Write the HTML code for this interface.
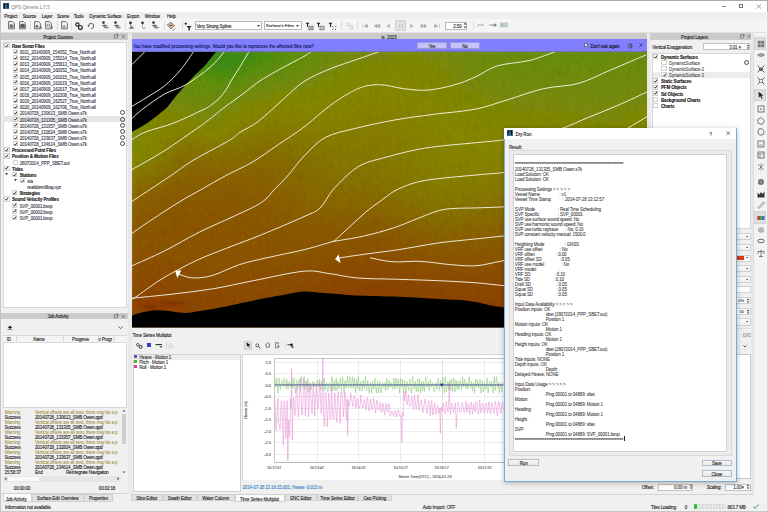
<!DOCTYPE html><html><head><meta charset="utf-8"><style>
html,body{margin:0;padding:0;width:768px;height:512px;overflow:hidden;background:#f0f0f0}
body{position:relative;font-family:"Liberation Sans",sans-serif}
body>div,body>svg{position:absolute}
.t{white-space:pre;line-height:1;-webkit-text-stroke:0.1px currentColor}
</style></head><body><div style="left:0px;top:0px;width:768px;height:512px;background:#f0f0f0;"></div>
<div style="left:0px;top:0px;width:768px;height:1px;background:#a8acb6;"></div>
<div style="left:0px;top:0px;width:1px;height:12px;background:#a4a8b2;"></div>
<div style="left:0px;top:12px;width:1px;height:500px;background:#c4c4c8;"></div>
<div style="left:767px;top:0px;width:1px;height:12px;background:#a8acb6;"></div>
<div style="left:767px;top:12px;width:1px;height:500px;background:#d6d6d6;"></div>
<div style="left:1px;top:1px;width:766px;height:11px;background:#ffffff;"></div>
<div style="left:3.3px;top:2.6px;width:6.2px;height:6.2px;background:#336e96"></div>
<svg style="left:3.3px;top:2.6px" width="6.2" height="6.2" viewBox="0 0 6.2 6.2"><path d="M1.3,1 H2.7 M1.3,1 V5.3 M3.5,1 H5 V5.3" stroke="#05050c" stroke-width="1.1" fill="none"/></svg>
<div class="t" style="top:5px;font-size:5.0px;color:#9a9a9a;letter-spacing:-0.14px;left:11px;">QPS Qimera 1.7.5</div>
<div style="left:722px;top:5.7px;width:4px;height:0.5px;background:#888;"></div>
<div style="left:739.3px;top:4.2px;width:4.0px;height:3.8px;background:transparent;border:0.5px solid #777;box-sizing:border-box;"></div>
<svg style="left:756px;top:4px" width="6" height="5" viewBox="0 0 6 5"><path d="M0.5,0.3 L5.2,4.7 M5.2,0.3 L0.5,4.7" stroke="#666" stroke-width="0.6"/></svg>
<div style="left:1px;top:12px;width:766px;height:6.5px;background:#efefef;"></div>
<div class="t" style="top:15px;font-size:4.5px;color:#1a1a1a;letter-spacing:-0.14px;left:4.3px;">Project</div>
<div class="t" style="top:15px;font-size:4.5px;color:#1a1a1a;letter-spacing:-0.14px;left:22.7px;">Source</div>
<div class="t" style="top:15px;font-size:4.5px;color:#1a1a1a;letter-spacing:-0.14px;left:41.7px;">Layer</div>
<div class="t" style="top:15px;font-size:4.5px;color:#1a1a1a;letter-spacing:-0.14px;left:57px;">Scene</div>
<div class="t" style="top:15px;font-size:4.5px;color:#1a1a1a;letter-spacing:-0.14px;left:73.7px;">Tools</div>
<div class="t" style="top:15px;font-size:4.5px;color:#1a1a1a;letter-spacing:-0.14px;left:89.3px;">Dynamic Surface</div>
<div class="t" style="top:15px;font-size:4.5px;color:#1a1a1a;letter-spacing:-0.14px;left:127px;">Export</div>
<div class="t" style="top:15px;font-size:4.5px;color:#1a1a1a;letter-spacing:-0.14px;left:144.7px;">Window</div>
<div class="t" style="top:15px;font-size:4.5px;color:#1a1a1a;letter-spacing:-0.14px;left:167px;">Help</div>
<div style="left:1px;top:18.5px;width:766px;height:14.0px;background:#f5f5f5;"></div>
<div style="left:1px;top:32px;width:766px;height:1px;background:#e0e0e0;"></div>
<svg style="left:8.2px;top:21.3px" width="8.5" height="9" viewBox="0 0 8.5 9"><path d="M0.6,0.6 H4.6 L6.4,2.4 V7.8 H0.6 Z" fill="#f4f4f4" stroke="#555" stroke-width="0.85"/><path d="M1.5,4 L3,2.8 L4.5,4 L5.5,3.5 V6.7 H1.5Z" fill="#707070"/></svg>
<svg style="left:19.1px;top:21.3px" width="8.5" height="9" viewBox="0 0 8.5 9"><path d="M0.6,0.6 H4.6 L6.4,2.4 V7.8 H0.6 Z" fill="#f4f4f4" stroke="#555" stroke-width="0.85"/><path d="M1.2,3.4 L3.5,2.4 L5.8,3.4 V6.7 H1.2Z" fill="#5a5a5a"/></svg>
<svg style="left:33.6px;top:21.3px" width="8.5" height="9" viewBox="0 0 8.5 9"><path d="M0.6,0.6 H4.6 L6.4,2.4 V7.8 H0.6 Z" fill="#f4f4f4" stroke="#555" stroke-width="0.85"/><path d="M1.6,5 L3,3.6 L4.2,5 V6.6 H1.6Z" fill="#606060"/><circle cx="6.6" cy="6.6" r="1.3" fill="#777"/></svg>
<svg style="left:45.3px;top:21.3px" width="8.5" height="9" viewBox="0 0 8.5 9"><path d="M0.6,0.6 H4.6 L6.4,2.4 V7.8 H0.6 Z" fill="#f4f4f4" stroke="#555" stroke-width="0.85"/><circle cx="3.4" cy="4.4" r="1.4" fill="none" stroke="#555" stroke-width="0.7"/><circle cx="6.6" cy="6.6" r="1.3" fill="#777"/></svg>
<svg style="left:60.5px;top:21.3px" width="8.5" height="9" viewBox="0 0 8.5 9"><path d="M0.6,0.6 H4.6 L6.4,2.4 V7.8 H0.6 Z" fill="#f4f4f4" stroke="#555" stroke-width="0.85"/><path d="M1.6,5.5 L3,4.2 L4.6,5.2 V6.6 H1.6Z" fill="#808080"/></svg>
<div style="left:30.2px;top:21px;width:0.6px;height:9px;background:#dcdcdc;"></div>
<div style="left:56.8px;top:21px;width:0.6px;height:9px;background:#dcdcdc;"></div>
<div style="left:70.5px;top:21px;width:0.6px;height:9px;background:#dcdcdc;"></div>
<svg style="left:74.5px;top:21.5px" width="8" height="8" viewBox="0 0 8 8"><circle cx="2.4" cy="2.6" r="1.7" fill="none" stroke="#222" stroke-width="1.1"/><circle cx="5.4" cy="5.4" r="1.9" fill="none" stroke="#222" stroke-width="1.2"/></svg>
<svg style="left:86.5px;top:21.8px" width="8" height="8" viewBox="0 0 8 8"><path d="M1.5,4 A2.6,2.6 0 1 1 4,6.6" fill="none" stroke="#555" stroke-width="0.9"/><path d="M0.3,3.6 L2.7,3.6 L1.5,5.2Z" fill="#555"/></svg>
<svg style="left:100.5px;top:21px" width="9" height="9" viewBox="0 0 9 9"><circle cx="2.5" cy="1.6" r="1.3" fill="#333"/><path d="M0.6,4.6 L3.6,3.4 L6.6,4.8 L3.6,6 Z" fill="#6a6a6a"/><path d="M2.2,6.4 L5.2,5.2 L8.4,6.6 L5.4,7.8 Z" fill="#8a8a8a"/></svg>
<svg style="left:112.5px;top:21px" width="9" height="9" viewBox="0 0 9 9"><circle cx="2.5" cy="1.6" r="1.3" fill="#333"/><path d="M0.6,4.6 L3.6,3.4 L6.6,4.8 L3.6,6 Z" fill="#6a6a6a"/><path d="M2.2,6.4 L5.2,5.2 L8.4,6.6 L5.4,7.8 Z" fill="#8a8a8a"/></svg>
<div style="left:125px;top:21px;width:0.6px;height:9px;background:#dcdcdc;"></div>
<svg style="left:127.5px;top:21px" width="8" height="9" viewBox="0 0 8 9"><circle cx="2.5" cy="1.8" r="1.4" fill="#333"/><path d="M2.5,3 V5"  stroke="#555" stroke-width="0.6"/><path d="M3.5,4.5 L6.5,7.8 H0.8Z" fill="#777"/></svg>
<svg style="left:139.5px;top:21px" width="8" height="9" viewBox="0 0 8 9"><circle cx="2.5" cy="1.8" r="1.4" fill="#333"/><path d="M2.5,3 V5" stroke="#555" stroke-width="0.6"/><path d="M1.6,5.6 L3.8,7.8 L5.6,6" stroke="#777" stroke-width="0.8" fill="none"/></svg>
<svg style="left:150.5px;top:21px" width="9" height="9" viewBox="0 0 9 9"><circle cx="2.5" cy="1.6" r="1.3" fill="#333"/><path d="M0.6,4.6 L3.6,3.4 L6.6,4.8 L3.6,6 Z" fill="#6a6a6a"/><path d="M2.2,6.4 L5.2,5.2 L8.4,6.6 L5.4,7.8 Z" fill="#8a8a8a"/></svg>
<div style="left:163.5px;top:21px;width:0.6px;height:9px;background:#dcdcdc;"></div>
<svg style="left:165.8px;top:21px" width="10" height="10" viewBox="0 0 10 10"><path d="M1.2,4 L5,1.2 L8.6,4.8 L5,7.8 Z" fill="#d8b898" stroke="#6a5a4a" stroke-width="0.7"/><path d="M3.4,4.4 H6.4" stroke="#333" stroke-width="0.8"/><path d="M6.6,8.4 L7.6,9.3 L9.3,7.5" stroke="#555" stroke-width="0.6" fill="none"/></svg>
<div style="left:181.5px;top:21px;width:0.6px;height:9px;background:#dcdcdc;"></div>
<svg style="left:184px;top:21.5px" width="8" height="9" viewBox="0 0 8 9"><circle cx="1.8" cy="1.6" r="1.2" fill="#333"/><path d="M2.5,4 H7.6 L5.8,6 V8.6 H4.4 V6 Z" fill="#222"/></svg>
<div style="left:194.5px;top:21.3px;width:67.5px;height:8.5px;background:#fff;border:0.6px solid #b8b8b8;box-sizing:border-box;"></div>
<div class="t" style="top:25px;font-size:4.5px;color:#222;letter-spacing:-0.14px;left:196.5px;">Very Strong Spline</div>
<svg style="left:256.5px;top:24.55px" width="3" height="2" viewBox="0 0 3 2"><path d="M0,0 H3 L1.5,2Z" fill="#444"/></svg>
<div style="left:263.8px;top:21.3px;width:37.9px;height:8.5px;background:#fff;border:0.6px solid #b8b8b8;box-sizing:border-box;"></div>
<div class="t" style="top:24px;font-size:4.3px;color:#222;left:265.8px;">Surface&#x27;s Files</div>
<svg style="left:296.2px;top:24.55px" width="3" height="2" viewBox="0 0 3 2"><path d="M0,0 H3 L1.5,2Z" fill="#444"/></svg>
<svg style="left:304.5px;top:21.5px" width="9" height="9" viewBox="0 0 9 9"><path d="M0.5,0.8 H4.5 L3,2.6 V5 H2 V2.6Z" fill="#222"/><rect x="4" y="4.2" width="4" height="3.6" fill="none" stroke="#555" stroke-width="0.7"/><path d="M4,4.2 L8,7.8 M8,4.2 L4,7.8" stroke="#555" stroke-width="0.5"/></svg>
<svg style="left:316px;top:21.5px" width="9" height="9" viewBox="0 0 9 9"><path d="M0.5,0.8 H4.5 L3,2.6 V5 H2 V2.6Z" fill="#222"/><rect x="4" y="4.2" width="4" height="3.6" fill="none" stroke="#555" stroke-width="0.7"/><rect x="5.5" y="5.6" width="1" height="1" fill="#444"/></svg>
<svg style="left:328px;top:21.5px" width="9" height="9" viewBox="0 0 9 9"><path d="M0.5,0.8 H4.5 L3,2.6 V5 H2 V2.6Z" fill="#222"/><path d="M4.2,4.3 L5.2,5.3 M8,4.3 L7,5.3 M4.2,8 L5.2,7 M8,8 L7,7" stroke="#222" stroke-width="0.8"/></svg>
<div style="left:341px;top:21px;width:0.6px;height:9px;background:#dcdcdc;"></div>
<svg style="left:345.5px;top:21.5px" width="9" height="9" viewBox="0 0 9 9"><circle cx="2.5" cy="2.5" r="1.6" fill="none" stroke="#bbb" stroke-width="0.7"/><circle cx="5.5" cy="5.5" r="1.8" fill="none" stroke="#bbb" stroke-width="0.7"/></svg>
<div style="left:357px;top:21px;width:0.6px;height:9px;background:#dcdcdc;"></div>
<svg style="left:360.6px;top:21.5px" width="8" height="8" viewBox="0 0 8 8"><path d="M1.5,2.2 V5.8 M6.5,2.2 L3,4 L6.5,5.8Z" fill="#aaa" stroke="#aaa" stroke-width="0.5"/></svg>
<svg style="left:372.7px;top:21.5px" width="8" height="8" viewBox="0 0 8 8"><path d="M4,2.2 L1,4 L4,5.8Z M7,2.2 L4,4 L7,5.8Z" fill="#aaa" stroke="#aaa" stroke-width="0.5"/></svg>
<svg style="left:384.2px;top:21.5px" width="8" height="8" viewBox="0 0 8 8"><path d="M5.5,2.5 L2.8,4 L5.5,5.5Z" fill="#aaa" stroke="#aaa" stroke-width="0.5"/></svg>
<div style="left:395px;top:20.2px;width:11.3px;height:10.8px;background:#e0e0e0;border:0.5px solid #d0d0d0;box-sizing:border-box;"></div>
<svg style="left:396.6px;top:21.5px" width="8" height="8" viewBox="0 0 8 8"><path d="M2.6,2.2 V5.8 M5.2,2.2 V5.8" fill="#aaa" stroke="#aaa" stroke-width="0.5"/></svg>
<svg style="left:408.3px;top:21.5px" width="8" height="8" viewBox="0 0 8 8"><path d="M2.5,2.5 L5.2,4 L2.5,5.5Z" fill="#aaa" stroke="#aaa" stroke-width="0.5"/></svg>
<svg style="left:420px;top:21.5px" width="8" height="8" viewBox="0 0 8 8"><path d="M1,2.2 L4,4 L1,5.8Z M4,2.2 L7,4 L4,5.8Z" fill="#aaa" stroke="#aaa" stroke-width="0.5"/></svg>
<svg style="left:432.5px;top:21.5px" width="8" height="8" viewBox="0 0 8 8"><path d="M1.5,2.2 L5,4 L1.5,5.8Z M6.5,2.2 V5.8" fill="#aaa" stroke="#aaa" stroke-width="0.5"/></svg>
<div style="left:445.4px;top:21.5px;width:21.9px;height:8.0px;background:#fff;border:0.6px solid #b8b8b8;box-sizing:border-box;"></div>
<div class="t" style="top:25px;font-size:4.5px;color:#222;letter-spacing:-0.14px;right:306.5px;">2.50</div>
<svg style="left:462.8px;top:22px" width="4" height="7" viewBox="0 0 4 7"><path d="M0.5,2.5 L2,0.8 L3.5,2.5Z M0.5,4.5 L2,6.2 L3.5,4.5Z" fill="#444"/></svg>
<div style="left:473px;top:21px;width:0.6px;height:9px;background:#dcdcdc;"></div>
<svg style="left:476.5px;top:22px" width="8" height="6" viewBox="0 0 8 6"><path d="M0.5,4.5 L2,2.2 L3.5,4 L5,1.8 L6.5,4 L7.5,3" fill="none" stroke="#999" stroke-width="0.7"/></svg>
<svg style="left:488.5px;top:22px" width="8" height="6" viewBox="0 0 8 6"><path d="M0.5,3 H5" stroke="#777" stroke-width="0.8"/><circle cx="6" cy="3" r="1.5" fill="#888"/></svg>
<svg style="left:500px;top:22px" width="8" height="6" viewBox="0 0 8 6"><rect x="0.5" y="1" width="7" height="4" fill="#c8d8a0" stroke="#aaa" stroke-width="0.5"/><rect x="1" y="1.5" width="3" height="3" fill="#a8c8e8"/></svg>
<div style="left:1px;top:33px;width:127px;height:6.6px;background:#cbcbcb;"></div>
<div class="t" style="top:36px;font-size:4.5px;color:#222;letter-spacing:-0.14px;left:58px;transform:translateX(-50%);">Project Sources</div>
<svg style="left:114px;top:34px" width="12" height="5" viewBox="0 0 12 5"><rect x="0.6" y="1" width="3" height="3" fill="none" stroke="#555" stroke-width="0.5"/><path d="M2,1 V0.3 H4.2 V2.5 H3.6" fill="none" stroke="#555" stroke-width="0.5"/><path d="M7.5,0.6 L11,4.4 M11,0.6 L7.5,4.4" stroke="#555" stroke-width="0.6"/></svg>
<div style="left:128px;top:33px;width:4px;height:461px;background:#e9e9e9;"></div>
<div style="left:132px;top:33px;width:515px;height:6.2px;background:#cbcbcb;"></div>
<div class="t" style="top:36px;font-size:4.5px;color:#222;letter-spacing:-0.14px;left:389px;transform:translateX(-50%);">ts_2015</div>
<div style="left:647px;top:33px;width:3px;height:294.5px;background:#e9e9e9;"></div>
<div style="left:650px;top:33px;width:103px;height:6.6px;background:#cbcbcb;"></div>
<div class="t" style="top:36px;font-size:4.5px;color:#222;letter-spacing:-0.14px;left:694.5px;transform:translateX(-50%);">Project Layers</div>
<svg style="left:739.5px;top:34px" width="12" height="5" viewBox="0 0 12 5"><rect x="0.6" y="1" width="3" height="3" fill="none" stroke="#555" stroke-width="0.5"/><path d="M2,1 V0.3 H4.2 V2.5 H3.6" fill="none" stroke="#555" stroke-width="0.5"/><path d="M7.5,0.6 L11,4.4 M11,0.6 L7.5,4.4" stroke="#555" stroke-width="0.6"/></svg>
<div style="left:2.5px;top:41.5px;width:124.5px;height:266.5px;background:#fff;border:0.6px solid #d6d6d6;box-sizing:border-box;"></div>
<div style="left:3px;top:116.08999999999999px;width:123.5px;height:6.1px;background:#e6e6e6;"></div>
<div style="left:4.2px;top:42.8px;width:5.4px;height:5.2px;background:#fff;border:0.5px solid #d2d2d2;box-sizing:border-box;"></div>
<svg style="left:5.4px;top:43.5px" width="3.4" height="3.8" viewBox="0 0 3.4 3.8"><path d="M0.5,2.0 L1.4,3.2 L3.0,0.5" fill="none" stroke="#1a1a1a" stroke-width="0.9"/></svg>
<div class="t" style="top:45px;font-size:4.5px;color:#111;font-weight:bold;letter-spacing:-0.14px;left:12px;">Raw Sonar Files</div>
<div style="left:12.5px;top:48.945px;width:5.4px;height:5.2px;background:#fff;border:0.5px solid #d2d2d2;box-sizing:border-box;"></div>
<svg style="left:13.7px;top:49.645px" width="3.4" height="3.8" viewBox="0 0 3.4 3.8"><path d="M0.5,2.0 L1.4,3.2 L3.0,0.5" fill="none" stroke="#1a1a1a" stroke-width="0.9"/></svg>
<div class="t" style="top:51px;font-size:4.5px;color:#3a3a4a;letter-spacing:-0.14px;left:19.7px;">0011_20140909_154052_True_North.all</div>
<div style="left:12.5px;top:55.089999999999996px;width:5.4px;height:5.2px;background:#fff;border:0.5px solid #d2d2d2;box-sizing:border-box;"></div>
<svg style="left:13.7px;top:55.79px" width="3.4" height="3.8" viewBox="0 0 3.4 3.8"><path d="M0.5,2.0 L1.4,3.2 L3.0,0.5" fill="none" stroke="#1a1a1a" stroke-width="0.9"/></svg>
<div class="t" style="top:57px;font-size:4.5px;color:#3a3a4a;letter-spacing:-0.14px;left:19.7px;">0012_20140909_155214_True_North.all</div>
<div style="left:12.5px;top:61.23499999999999px;width:5.4px;height:5.2px;background:#fff;border:0.5px solid #d2d2d2;box-sizing:border-box;"></div>
<svg style="left:13.7px;top:61.934999999999995px" width="3.4" height="3.8" viewBox="0 0 3.4 3.8"><path d="M0.5,2.0 L1.4,3.2 L3.0,0.5" fill="none" stroke="#1a1a1a" stroke-width="0.9"/></svg>
<div class="t" style="top:63px;font-size:4.5px;color:#3a3a4a;letter-spacing:-0.14px;left:19.7px;">0013_20140909_155813_True_North.all</div>
<div style="left:12.5px;top:67.38px;width:5.4px;height:5.2px;background:#fff;border:0.5px solid #d2d2d2;box-sizing:border-box;"></div>
<svg style="left:13.7px;top:68.07999999999998px" width="3.4" height="3.8" viewBox="0 0 3.4 3.8"><path d="M0.5,2.0 L1.4,3.2 L3.0,0.5" fill="none" stroke="#1a1a1a" stroke-width="0.9"/></svg>
<div class="t" style="top:69px;font-size:4.5px;color:#3a3a4a;letter-spacing:-0.14px;left:19.7px;">0014_20140909_160352_True_North.all</div>
<div style="left:12.5px;top:73.525px;width:5.4px;height:5.2px;background:#fff;border:0.5px solid #d2d2d2;box-sizing:border-box;"></div>
<svg style="left:13.7px;top:74.225px" width="3.4" height="3.8" viewBox="0 0 3.4 3.8"><path d="M0.5,2.0 L1.4,3.2 L3.0,0.5" fill="none" stroke="#1a1a1a" stroke-width="0.9"/></svg>
<div class="t" style="top:76px;font-size:4.5px;color:#3a3a4a;letter-spacing:-0.14px;left:19.7px;">0015_20140909_161015_True_North.all</div>
<div style="left:12.5px;top:79.67px;width:5.4px;height:5.2px;background:#fff;border:0.5px solid #d2d2d2;box-sizing:border-box;"></div>
<svg style="left:13.7px;top:80.36999999999999px" width="3.4" height="3.8" viewBox="0 0 3.4 3.8"><path d="M0.5,2.0 L1.4,3.2 L3.0,0.5" fill="none" stroke="#1a1a1a" stroke-width="0.9"/></svg>
<div class="t" style="top:82px;font-size:4.5px;color:#3a3a4a;letter-spacing:-0.14px;left:19.7px;">0016_20140909_161619_True_North.all</div>
<div style="left:12.5px;top:85.815px;width:5.4px;height:5.2px;background:#fff;border:0.5px solid #d2d2d2;box-sizing:border-box;"></div>
<svg style="left:13.7px;top:86.51499999999999px" width="3.4" height="3.8" viewBox="0 0 3.4 3.8"><path d="M0.5,2.0 L1.4,3.2 L3.0,0.5" fill="none" stroke="#1a1a1a" stroke-width="0.9"/></svg>
<div class="t" style="top:88px;font-size:4.5px;color:#3a3a4a;letter-spacing:-0.14px;left:19.7px;">0017_20140909_162017_True_North.all</div>
<div style="left:12.5px;top:91.96000000000001px;width:5.4px;height:5.2px;background:#fff;border:0.5px solid #d2d2d2;box-sizing:border-box;"></div>
<svg style="left:13.7px;top:92.66px" width="3.4" height="3.8" viewBox="0 0 3.4 3.8"><path d="M0.5,2.0 L1.4,3.2 L3.0,0.5" fill="none" stroke="#1a1a1a" stroke-width="0.9"/></svg>
<div class="t" style="top:94px;font-size:4.5px;color:#3a3a4a;letter-spacing:-0.14px;left:19.7px;">0018_20140909_162308_True_North.all</div>
<div style="left:12.5px;top:98.10499999999999px;width:5.4px;height:5.2px;background:#fff;border:0.5px solid #d2d2d2;box-sizing:border-box;"></div>
<svg style="left:13.7px;top:98.80499999999998px" width="3.4" height="3.8" viewBox="0 0 3.4 3.8"><path d="M0.5,2.0 L1.4,3.2 L3.0,0.5" fill="none" stroke="#1a1a1a" stroke-width="0.9"/></svg>
<div class="t" style="top:100px;font-size:4.5px;color:#3a3a4a;letter-spacing:-0.14px;left:19.7px;">0019_20140909_162527_True_North.all</div>
<div style="left:12.5px;top:104.25px;width:5.4px;height:5.2px;background:#fff;border:0.5px solid #d2d2d2;box-sizing:border-box;"></div>
<svg style="left:13.7px;top:104.94999999999999px" width="3.4" height="3.8" viewBox="0 0 3.4 3.8"><path d="M0.5,2.0 L1.4,3.2 L3.0,0.5" fill="none" stroke="#1a1a1a" stroke-width="0.9"/></svg>
<div class="t" style="top:106px;font-size:4.5px;color:#3a3a4a;letter-spacing:-0.14px;left:19.7px;">0020_20140909_162706_True_North.all</div>
<div style="left:12.5px;top:110.39500000000001px;width:5.4px;height:5.2px;background:#fff;border:0.5px solid #d2d2d2;box-sizing:border-box;"></div>
<svg style="left:13.7px;top:111.095px" width="3.4" height="3.8" viewBox="0 0 3.4 3.8"><path d="M0.5,2.0 L1.4,3.2 L3.0,0.5" fill="none" stroke="#1a1a1a" stroke-width="0.9"/></svg>
<div class="t" style="top:112px;font-size:4.5px;color:#3a3a4a;letter-spacing:-0.14px;left:19.7px;">20140728_130613_SMB Owen.s7k</div>
<svg style="left:120px;top:110.495px" width="5" height="5" viewBox="0 0 5 5"><circle cx="2.55" cy="2.5" r="2.0" fill="none" stroke="#262626" stroke-width="0.8"/></svg>
<div style="left:12.5px;top:116.53999999999999px;width:5.4px;height:5.2px;background:#fff;border:0.5px solid #d2d2d2;box-sizing:border-box;"></div>
<svg style="left:13.7px;top:117.23999999999998px" width="3.4" height="3.8" viewBox="0 0 3.4 3.8"><path d="M0.5,2.0 L1.4,3.2 L3.0,0.5" fill="none" stroke="#1a1a1a" stroke-width="0.9"/></svg>
<div class="t" style="top:119px;font-size:4.5px;color:#3a3a4a;letter-spacing:-0.14px;left:19.7px;">20140728_131305_SMB Owen.s7k</div>
<svg style="left:120px;top:116.63999999999999px" width="5" height="5" viewBox="0 0 5 5"><circle cx="2.55" cy="2.5" r="2.0" fill="none" stroke="#262626" stroke-width="0.8"/></svg>
<div style="left:12.5px;top:122.685px;width:5.4px;height:5.2px;background:#fff;border:0.5px solid #d2d2d2;box-sizing:border-box;"></div>
<svg style="left:13.7px;top:123.38499999999999px" width="3.4" height="3.8" viewBox="0 0 3.4 3.8"><path d="M0.5,2.0 L1.4,3.2 L3.0,0.5" fill="none" stroke="#1a1a1a" stroke-width="0.9"/></svg>
<div class="t" style="top:125px;font-size:4.5px;color:#3a3a4a;letter-spacing:-0.14px;left:19.7px;">20140728_131957_SMB Owen.s7k</div>
<svg style="left:120px;top:122.785px" width="5" height="5" viewBox="0 0 5 5"><circle cx="2.55" cy="2.5" r="2.0" fill="none" stroke="#262626" stroke-width="0.8"/></svg>
<div style="left:12.5px;top:128.83px;width:5.4px;height:5.2px;background:#fff;border:0.5px solid #d2d2d2;box-sizing:border-box;"></div>
<svg style="left:13.7px;top:129.53px" width="3.4" height="3.8" viewBox="0 0 3.4 3.8"><path d="M0.5,2.0 L1.4,3.2 L3.0,0.5" fill="none" stroke="#1a1a1a" stroke-width="0.9"/></svg>
<div class="t" style="top:131px;font-size:4.5px;color:#3a3a4a;letter-spacing:-0.14px;left:19.7px;">20140728_132824_SMB Owen.s7k</div>
<svg style="left:120px;top:128.93px" width="5" height="5" viewBox="0 0 5 5"><circle cx="2.55" cy="2.5" r="2.0" fill="none" stroke="#262626" stroke-width="0.8"/></svg>
<div style="left:12.5px;top:134.975px;width:5.4px;height:5.2px;background:#fff;border:0.5px solid #d2d2d2;box-sizing:border-box;"></div>
<svg style="left:13.7px;top:135.67499999999998px" width="3.4" height="3.8" viewBox="0 0 3.4 3.8"><path d="M0.5,2.0 L1.4,3.2 L3.0,0.5" fill="none" stroke="#1a1a1a" stroke-width="0.9"/></svg>
<div class="t" style="top:137px;font-size:4.5px;color:#3a3a4a;letter-spacing:-0.14px;left:19.7px;">20140728_133637_SMB Owen.s7k</div>
<svg style="left:120px;top:135.075px" width="5" height="5" viewBox="0 0 5 5"><circle cx="2.55" cy="2.5" r="2.0" fill="none" stroke="#262626" stroke-width="0.8"/></svg>
<div style="left:12.5px;top:141.12px;width:5.4px;height:5.2px;background:#fff;border:0.5px solid #d2d2d2;box-sizing:border-box;"></div>
<svg style="left:13.7px;top:141.82px" width="3.4" height="3.8" viewBox="0 0 3.4 3.8"><path d="M0.5,2.0 L1.4,3.2 L3.0,0.5" fill="none" stroke="#1a1a1a" stroke-width="0.9"/></svg>
<div class="t" style="top:143px;font-size:4.5px;color:#3a3a4a;letter-spacing:-0.14px;left:19.7px;">20140728_134614_SMB Owen.s7k</div>
<svg style="left:120px;top:141.22px" width="5" height="5" viewBox="0 0 5 5"><circle cx="2.55" cy="2.5" r="2.0" fill="none" stroke="#262626" stroke-width="0.8"/></svg>
<div style="left:4.2px;top:147.265px;width:5.4px;height:5.2px;background:#fff;border:0.5px solid #d2d2d2;box-sizing:border-box;"></div>
<svg style="left:5.4px;top:147.96499999999997px" width="3.4" height="3.8" viewBox="0 0 3.4 3.8"><path d="M0.5,2.0 L1.4,3.2 L3.0,0.5" fill="none" stroke="#1a1a1a" stroke-width="0.9"/></svg>
<div class="t" style="top:149px;font-size:4.5px;color:#111;font-weight:bold;letter-spacing:-0.14px;left:12px;">Processed Point Files</div>
<div style="left:4.2px;top:153.41px;width:5.4px;height:5.2px;background:#fff;border:0.5px solid #d2d2d2;box-sizing:border-box;"></div>
<svg style="left:5.4px;top:154.10999999999999px" width="3.4" height="3.8" viewBox="0 0 3.4 3.8"><path d="M0.5,2.0 L1.4,3.2 L3.0,0.5" fill="none" stroke="#1a1a1a" stroke-width="0.9"/></svg>
<div class="t" style="top:155px;font-size:4.5px;color:#111;font-weight:bold;letter-spacing:-0.14px;left:12px;">Position &amp; Motion Files</div>
<div style="left:12.5px;top:159.555px;width:5.4px;height:5.2px;background:#fff;border:0.5px solid #d2d2d2;box-sizing:border-box;"></div>
<div class="t" style="top:162px;font-size:4.5px;color:#3a3a4a;letter-spacing:-0.14px;left:19.7px;">28072014_PPP_SBET.out</div>
<div style="left:4.2px;top:165.7px;width:5.4px;height:5.2px;background:#fff;border:0.5px solid #d2d2d2;box-sizing:border-box;"></div>
<svg style="left:5.4px;top:166.39999999999998px" width="3.4" height="3.8" viewBox="0 0 3.4 3.8"><path d="M0.5,2.0 L1.4,3.2 L3.0,0.5" fill="none" stroke="#1a1a1a" stroke-width="0.9"/></svg>
<div class="t" style="top:168px;font-size:4.5px;color:#111;font-weight:bold;letter-spacing:-0.14px;left:12px;">Tides</div>
<svg style="left:5px;top:173.245px" width="3" height="2.4" viewBox="0 0 3 2.4"><path d="M0,0 H3 L1.5,2.2Z" fill="#444"/></svg>
<div style="left:12.0px;top:171.845px;width:5.4px;height:5.2px;background:#fff;border:0.5px solid #d2d2d2;box-sizing:border-box;"></div>
<svg style="left:13.2px;top:172.545px" width="3.4" height="3.8" viewBox="0 0 3.4 3.8"><path d="M0.5,2.0 L1.4,3.2 L3.0,0.5" fill="none" stroke="#1a1a1a" stroke-width="0.9"/></svg>
<div class="t" style="top:174px;font-size:4.5px;color:#111;font-weight:bold;letter-spacing:-0.14px;left:19.7px;">Stations</div>
<svg style="left:13.5px;top:179.39000000000001px" width="3" height="2.4" viewBox="0 0 3 2.4"><path d="M0,0 H3 L1.5,2.2Z" fill="#444"/></svg>
<div style="left:19.5px;top:177.99px;width:5.4px;height:5.2px;background:#fff;border:0.5px solid #d2d2d2;box-sizing:border-box;"></div>
<svg style="left:20.7px;top:178.69px" width="3.4" height="3.8" viewBox="0 0 3.4 3.8"><path d="M0.5,2.0 L1.4,3.2 L3.0,0.5" fill="none" stroke="#1a1a1a" stroke-width="0.9"/></svg>
<div class="t" style="top:180px;font-size:4.5px;color:#3a3a4a;letter-spacing:-0.14px;left:27.2px;">sta</div>
<div class="t" style="top:186px;font-size:4.5px;color:#3a3a4a;letter-spacing:-0.14px;left:27.2px;">realtidemillbay.xyz</div>
<div style="left:12.0px;top:190.28px;width:5.4px;height:5.2px;background:#fff;border:0.5px solid #d2d2d2;box-sizing:border-box;"></div>
<svg style="left:13.2px;top:190.98px" width="3.4" height="3.8" viewBox="0 0 3.4 3.8"><path d="M0.5,2.0 L1.4,3.2 L3.0,0.5" fill="none" stroke="#1a1a1a" stroke-width="0.9"/></svg>
<div class="t" style="top:192px;font-size:4.5px;color:#111;font-weight:bold;letter-spacing:-0.14px;left:19.5px;">Strategies</div>
<div style="left:4.2px;top:196.425px;width:5.4px;height:5.2px;background:#fff;border:0.5px solid #d2d2d2;box-sizing:border-box;"></div>
<svg style="left:5.4px;top:197.125px" width="3.4" height="3.8" viewBox="0 0 3.4 3.8"><path d="M0.5,2.0 L1.4,3.2 L3.0,0.5" fill="none" stroke="#1a1a1a" stroke-width="0.9"/></svg>
<div class="t" style="top:198px;font-size:4.5px;color:#111;font-weight:bold;letter-spacing:-0.14px;left:12px;">Sound Velocity Profiles</div>
<div style="left:12.0px;top:202.57px;width:5.4px;height:5.2px;background:#fff;border:0.5px solid #d2d2d2;box-sizing:border-box;"></div>
<svg style="left:13.2px;top:203.26999999999998px" width="3.4" height="3.8" viewBox="0 0 3.4 3.8"><path d="M0.5,2.0 L1.4,3.2 L3.0,0.5" fill="none" stroke="#1a1a1a" stroke-width="0.9"/></svg>
<div class="t" style="top:205px;font-size:4.5px;color:#3a3a4a;letter-spacing:-0.14px;left:19.5px;">SVP_00001.bsvp</div>
<div style="left:12.0px;top:208.715px;width:5.4px;height:5.2px;background:#fff;border:0.5px solid #d2d2d2;box-sizing:border-box;"></div>
<svg style="left:13.2px;top:209.415px" width="3.4" height="3.8" viewBox="0 0 3.4 3.8"><path d="M0.5,2.0 L1.4,3.2 L3.0,0.5" fill="none" stroke="#1a1a1a" stroke-width="0.9"/></svg>
<div class="t" style="top:211px;font-size:4.5px;color:#3a3a4a;letter-spacing:-0.14px;left:19.5px;">SVP_00002.bsvp</div>
<div style="left:12.0px;top:214.86px;width:5.4px;height:5.2px;background:#fff;border:0.5px solid #d2d2d2;box-sizing:border-box;"></div>
<svg style="left:13.2px;top:215.56px" width="3.4" height="3.8" viewBox="0 0 3.4 3.8"><path d="M0.5,2.0 L1.4,3.2 L3.0,0.5" fill="none" stroke="#1a1a1a" stroke-width="0.9"/></svg>
<div class="t" style="top:217px;font-size:4.5px;color:#3a3a4a;letter-spacing:-0.14px;left:19.5px;">SVP_00001.bsvp</div>
<div style="left:1px;top:308.5px;width:127px;height:4.5px;background:#f0f0f0;"></div>
<div style="left:1px;top:313px;width:127px;height:5.8px;background:#cbcbcb;"></div>
<div class="t" style="top:315px;font-size:4.5px;color:#222;letter-spacing:-0.14px;left:58px;transform:translateX(-50%);">Job Activity</div>
<svg style="left:114px;top:313.6px" width="12" height="5" viewBox="0 0 12 5"><rect x="0.6" y="1" width="3" height="3" fill="none" stroke="#555" stroke-width="0.5"/><path d="M2,1 V0.3 H4.2 V2.5 H3.6" fill="none" stroke="#555" stroke-width="0.5"/><path d="M7.5,0.6 L11,4.4 M11,0.6 L7.5,4.4" stroke="#555" stroke-width="0.6"/></svg>
<svg style="left:6.5px;top:324.5px" width="6" height="5" viewBox="0 0 6 5"><path d="M0.6,3 L3,0.6 L5.4,3 L3.6,3 V4.4 H2.4 V3Z" fill="#222"/><path d="M0.5,4.6 H5.5" stroke="#555" stroke-width="0.6"/></svg>
<svg style="left:118px;top:325.5px" width="5" height="3.5" viewBox="0 0 5 3.5"><path d="M0.5,0.5 L2.5,2.7 L4.5,0.5" fill="none" stroke="#333" stroke-width="0.8"/></svg>
<div style="left:2.5px;top:335.2px;width:124.5px;height:72.8px;background:#fff;border:0.6px solid #d6d6d6;box-sizing:border-box;"></div>
<div style="left:3px;top:335.6px;width:123.5px;height:6.2px;background:#f4f4f4;"></div>
<div style="left:3px;top:341.6px;width:123.5px;height:0.5px;background:#dadada;"></div>
<div style="left:15.5px;top:335.8px;width:0.5px;height:5.8px;background:#d8d8d8;"></div>
<div style="left:63px;top:335.8px;width:0.5px;height:5.8px;background:#d8d8d8;"></div>
<div style="left:97.5px;top:335.8px;width:0.5px;height:5.8px;background:#d8d8d8;"></div>
<div style="left:113.8px;top:335.8px;width:0.5px;height:5.8px;background:#d8d8d8;"></div>
<div class="t" style="top:338px;font-size:4.5px;color:#222;letter-spacing:-0.14px;left:8.8px;transform:translateX(-50%);">ID</div>
<div class="t" style="top:338px;font-size:4.5px;color:#222;letter-spacing:-0.14px;left:39px;transform:translateX(-50%);">Name</div>
<div class="t" style="top:338px;font-size:4.5px;color:#222;letter-spacing:-0.14px;left:80.5px;transform:translateX(-50%);">Progress</div>
<div class="t" style="top:338px;font-size:4.5px;color:#222;letter-spacing:-0.14px;left:98.5px;">v Progr</div>
<div style="left:2.5px;top:408px;width:124.5px;height:74px;background:#f0f0f0;"></div>
<div class="t" style="top:411px;font-size:4.5px;color:#a89a58;letter-spacing:-0.14px;left:4.5px;">Warning</div>
<div class="t" style="top:411px;font-size:4.5px;color:#a89a58;letter-spacing:-0.14px;left:35px;">Vertical offsets are all zero, there may be a p</div>
<div class="t" style="top:416px;font-size:4.5px;color:#1a1a1a;letter-spacing:-0.14px;left:4.5px;">Success</div>
<div class="t" style="top:416px;font-size:4.5px;color:#1a1a1a;letter-spacing:-0.14px;left:35px;">20140728_130613_SMB Owen.qpd</div>
<div class="t" style="top:421px;font-size:4.5px;color:#a89a58;letter-spacing:-0.14px;left:4.5px;">Warning</div>
<div class="t" style="top:421px;font-size:4.5px;color:#a89a58;letter-spacing:-0.14px;left:35px;">Vertical offsets are all zero, there may be a p</div>
<div class="t" style="top:426px;font-size:4.5px;color:#1a1a1a;letter-spacing:-0.14px;left:4.5px;">Success</div>
<div class="t" style="top:426px;font-size:4.5px;color:#1a1a1a;letter-spacing:-0.14px;left:35px;">20140728_131305_SMB Owen.qpd</div>
<div class="t" style="top:431px;font-size:4.5px;color:#a89a58;letter-spacing:-0.14px;left:4.5px;">Warning</div>
<div class="t" style="top:431px;font-size:4.5px;color:#a89a58;letter-spacing:-0.14px;left:35px;">Vertical offsets are all zero, there may be a p</div>
<div class="t" style="top:436px;font-size:4.5px;color:#1a1a1a;letter-spacing:-0.14px;left:4.5px;">Success</div>
<div class="t" style="top:436px;font-size:4.5px;color:#1a1a1a;letter-spacing:-0.14px;left:35px;">20140728_131957_SMB Owen.qpd</div>
<div class="t" style="top:441px;font-size:4.5px;color:#a89a58;letter-spacing:-0.14px;left:4.5px;">Warning</div>
<div class="t" style="top:441px;font-size:4.5px;color:#a89a58;letter-spacing:-0.14px;left:35px;">Vertical offsets are all zero, there may be a p</div>
<div class="t" style="top:446px;font-size:4.5px;color:#1a1a1a;letter-spacing:-0.14px;left:4.5px;">Success</div>
<div class="t" style="top:446px;font-size:4.5px;color:#1a1a1a;letter-spacing:-0.14px;left:35px;">20140728_132824_SMB Owen.qpd</div>
<div class="t" style="top:451px;font-size:4.5px;color:#a89a58;letter-spacing:-0.14px;left:4.5px;">Warning</div>
<div class="t" style="top:451px;font-size:4.5px;color:#a89a58;letter-spacing:-0.14px;left:35px;">Vertical offsets are all zero, there may be a p</div>
<div class="t" style="top:456px;font-size:4.5px;color:#1a1a1a;letter-spacing:-0.14px;left:4.5px;">Success</div>
<div class="t" style="top:456px;font-size:4.5px;color:#1a1a1a;letter-spacing:-0.14px;left:35px;">20140728_133637_SMB Owen.qpd</div>
<div class="t" style="top:461px;font-size:4.5px;color:#a89a58;letter-spacing:-0.14px;left:4.5px;">Warning</div>
<div class="t" style="top:461px;font-size:4.5px;color:#a89a58;letter-spacing:-0.14px;left:35px;">Vertical offsets are all zero, there may be a p</div>
<div class="t" style="top:466px;font-size:4.5px;color:#1a1a1a;letter-spacing:-0.14px;left:4.5px;">Success</div>
<div class="t" style="top:466px;font-size:4.5px;color:#1a1a1a;letter-spacing:-0.14px;left:35px;">20140728_134614_SMB Owen.qpd</div>
<div class="t" style="top:471px;font-size:4.5px;color:#1a1a1a;letter-spacing:-0.14px;left:4.5px;">15:58:37</div>
<div class="t" style="top:471px;font-size:4.5px;color:#1a1a1a;letter-spacing:-0.14px;left:35px;">End</div>
<div class="t" style="top:471px;font-size:4.5px;color:#1a1a1a;letter-spacing:-0.14px;left:66px;">Reintegrate Navigation</div>
<div style="left:120.5px;top:408.5px;width:6.0px;height:67.5px;background:#f0f0f0;"></div>
<div style="left:121.5px;top:413.5px;width:4.0px;height:30.0px;background:#cdcdcd;"></div>
<svg style="left:121.5px;top:409.3px" width="4" height="3" viewBox="0 0 4 3"><path d="M0.5,2.5 L2,0.8 L3.5,2.5Z" fill="#555"/></svg>
<svg style="left:121.5px;top:470.8px" width="4" height="3" viewBox="0 0 4 3"><path d="M0.5,0.5 L2,2.2 L3.5,0.5Z" fill="#555"/></svg>
<div style="left:3px;top:476px;width:117.5px;height:5.8px;background:#e6e6e6;"></div>
<div style="left:8px;top:476.6px;width:31px;height:4.6px;background:#f9f9f9;"></div>
<svg style="left:4px;top:477.3px" width="3" height="3.5" viewBox="0 0 3 3.5"><path d="M2.5,0.3 L0.6,1.7 L2.5,3.2Z" fill="#555"/></svg>
<svg style="left:116.5px;top:477.3px" width="3" height="3.5" viewBox="0 0 3 3.5"><path d="M0.5,0.3 L2.4,1.7 L0.5,3.2Z" fill="#555"/></svg>
<div class="t" style="top:487px;font-size:4.5px;color:#222;letter-spacing:-0.14px;left:22px;transform:translateX(-50%);">00:00:00</div>
<div class="t" style="top:487px;font-size:4.5px;color:#222;letter-spacing:-0.14px;left:107px;transform:translateX(-50%);">00:02:18</div>
<div style="left:1px;top:492.6px;width:127px;height:0.6px;background:#d4d4d4;"></div>
<div style="left:3px;top:493px;width:28.5px;height:9px;background:#fbfbfb;border:0.5px solid #d0d0d0;box-sizing:border-box;"></div>
<div style="left:31.5px;top:493.5px;width:52.5px;height:8.0px;background:#e2e2e2;border:0.5px solid #d0d0d0;box-sizing:border-box;"></div>
<div style="left:84px;top:493.5px;width:29px;height:8.0px;background:#e2e2e2;border:0.5px solid #d0d0d0;box-sizing:border-box;"></div>
<div class="t" style="top:498px;font-size:4.5px;color:#222;letter-spacing:-0.14px;left:16.2px;transform:translateX(-50%);">Job Activity</div>
<div class="t" style="top:497px;font-size:4.5px;color:#222;letter-spacing:-0.14px;left:57.5px;transform:translateX(-50%);">Surface Edit Overview</div>
<div class="t" style="top:497px;font-size:4.5px;color:#222;letter-spacing:-0.14px;left:98.5px;transform:translateX(-50%);">Properties</div>
<svg style="left:0;top:0" width="768" height="512" viewBox="0 0 768 512"><defs><clipPath id="mc"><rect x="132" y="51" width="515" height="276.5"/></clipPath><filter id="bl" x="-5%" y="-5%" width="110%" height="110%"><feGaussianBlur stdDeviation="7"/></filter></defs><g clip-path="url(#mc)"><g filter="url(#bl)"><rect x="122" y="41" width="10" height="10" fill="rgb(62, 140, 18)"/><rect x="132" y="41" width="10" height="10" fill="rgb(62, 140, 18)"/><rect x="142" y="41" width="10" height="10" fill="rgb(62, 140, 18)"/><rect x="152" y="41" width="10" height="10" fill="rgb(62, 140, 18)"/><rect x="162" y="41" width="10" height="10" fill="rgb(62, 140, 18)"/><rect x="172" y="41" width="10" height="10" fill="rgb(62, 140, 18)"/><rect x="182" y="41" width="10" height="10" fill="rgb(62, 140, 18)"/><rect x="192" y="41" width="10" height="10" fill="rgb(62, 140, 18)"/><rect x="202" y="41" width="10" height="10" fill="rgb(62, 140, 18)"/><rect x="212" y="41" width="10" height="10" fill="rgb(62, 140, 18)"/><rect x="222" y="41" width="10" height="10" fill="rgb(62, 140, 18)"/><rect x="232" y="41" width="10" height="10" fill="rgb(62, 140, 18)"/><rect x="242" y="41" width="10" height="10" fill="rgb(62, 140, 18)"/><rect x="252" y="41" width="10" height="10" fill="rgb(62, 140, 18)"/><rect x="262" y="41" width="10" height="10" fill="rgb(62, 140, 18)"/><rect x="272" y="41" width="10" height="10" fill="rgb(69, 141, 16)"/><rect x="282" y="41" width="10" height="10" fill="rgb(77, 142, 14)"/><rect x="292" y="41" width="10" height="10" fill="rgb(86, 144, 12)"/><rect x="302" y="41" width="10" height="10" fill="rgb(95, 145, 10)"/><rect x="312" y="41" width="10" height="10" fill="rgb(99, 144, 10)"/><rect x="322" y="41" width="10" height="10" fill="rgb(103, 142, 10)"/><rect x="332" y="41" width="10" height="10" fill="rgb(107, 141, 10)"/><rect x="342" y="41" width="10" height="10" fill="rgb(110, 140, 10)"/><rect x="352" y="41" width="10" height="10" fill="rgb(113, 140, 9)"/><rect x="362" y="41" width="10" height="10" fill="rgb(115, 139, 9)"/><rect x="372" y="41" width="10" height="10" fill="rgb(117, 139, 9)"/><rect x="382" y="41" width="10" height="10" fill="rgb(119, 139, 8)"/><rect x="392" y="41" width="10" height="10" fill="rgb(119, 139, 8)"/><rect x="402" y="41" width="10" height="10" fill="rgb(120, 139, 8)"/><rect x="412" y="41" width="10" height="10" fill="rgb(119, 139, 8)"/><rect x="422" y="41" width="10" height="10" fill="rgb(118, 139, 8)"/><rect x="432" y="41" width="10" height="10" fill="rgb(116, 139, 9)"/><rect x="442" y="41" width="10" height="10" fill="rgb(114, 140, 9)"/><rect x="452" y="41" width="10" height="10" fill="rgb(111, 140, 10)"/><rect x="462" y="41" width="10" height="10" fill="rgb(109, 140, 10)"/><rect x="472" y="41" width="10" height="10" fill="rgb(107, 141, 10)"/><rect x="482" y="41" width="10" height="10" fill="rgb(105, 142, 10)"/><rect x="492" y="41" width="10" height="10" fill="rgb(104, 142, 10)"/><rect x="502" y="41" width="10" height="10" fill="rgb(103, 142, 10)"/><rect x="512" y="41" width="10" height="10" fill="rgb(102, 143, 10)"/><rect x="522" y="41" width="10" height="10" fill="rgb(102, 143, 10)"/><rect x="532" y="41" width="10" height="10" fill="rgb(102, 143, 10)"/><rect x="542" y="41" width="10" height="10" fill="rgb(102, 143, 10)"/><rect x="552" y="41" width="10" height="10" fill="rgb(102, 143, 10)"/><rect x="562" y="41" width="10" height="10" fill="rgb(102, 143, 10)"/><rect x="572" y="41" width="10" height="10" fill="rgb(102, 143, 10)"/><rect x="582" y="41" width="10" height="10" fill="rgb(102, 143, 10)"/><rect x="592" y="41" width="10" height="10" fill="rgb(102, 143, 10)"/><rect x="602" y="41" width="10" height="10" fill="rgb(103, 142, 10)"/><rect x="612" y="41" width="10" height="10" fill="rgb(103, 142, 10)"/><rect x="622" y="41" width="10" height="10" fill="rgb(103, 142, 10)"/><rect x="632" y="41" width="10" height="10" fill="rgb(103, 142, 10)"/><rect x="642" y="41" width="10" height="10" fill="rgb(103, 142, 10)"/><rect x="652" y="41" width="10" height="10" fill="rgb(103, 142, 10)"/><rect x="122" y="51" width="10" height="10" fill="rgb(62, 140, 18)"/><rect x="132" y="51" width="10" height="10" fill="rgb(62, 140, 18)"/><rect x="142" y="51" width="10" height="10" fill="rgb(62, 140, 18)"/><rect x="152" y="51" width="10" height="10" fill="rgb(62, 140, 18)"/><rect x="162" y="51" width="10" height="10" fill="rgb(62, 140, 18)"/><rect x="172" y="51" width="10" height="10" fill="rgb(62, 140, 18)"/><rect x="182" y="51" width="10" height="10" fill="rgb(62, 140, 18)"/><rect x="192" y="51" width="10" height="10" fill="rgb(62, 140, 18)"/><rect x="202" y="51" width="10" height="10" fill="rgb(62, 140, 18)"/><rect x="212" y="51" width="10" height="10" fill="rgb(62, 140, 18)"/><rect x="222" y="51" width="10" height="10" fill="rgb(62, 140, 18)"/><rect x="232" y="51" width="10" height="10" fill="rgb(62, 140, 18)"/><rect x="242" y="51" width="10" height="10" fill="rgb(62, 140, 18)"/><rect x="252" y="51" width="10" height="10" fill="rgb(69, 141, 16)"/><rect x="262" y="51" width="10" height="10" fill="rgb(76, 142, 14)"/><rect x="272" y="51" width="10" height="10" fill="rgb(83, 143, 13)"/><rect x="282" y="51" width="10" height="10" fill="rgb(91, 144, 11)"/><rect x="292" y="51" width="10" height="10" fill="rgb(97, 144, 10)"/><rect x="302" y="51" width="10" height="10" fill="rgb(101, 143, 10)"/><rect x="312" y="51" width="10" height="10" fill="rgb(105, 142, 10)"/><rect x="322" y="51" width="10" height="10" fill="rgb(109, 140, 10)"/><rect x="332" y="51" width="10" height="10" fill="rgb(113, 140, 9)"/><rect x="342" y="51" width="10" height="10" fill="rgb(117, 139, 9)"/><rect x="352" y="51" width="10" height="10" fill="rgb(119, 139, 8)"/><rect x="362" y="51" width="10" height="10" fill="rgb(122, 138, 8)"/><rect x="372" y="51" width="10" height="10" fill="rgb(123, 138, 7)"/><rect x="382" y="51" width="10" height="10" fill="rgb(124, 137, 7)"/><rect x="392" y="51" width="10" height="10" fill="rgb(125, 137, 6)"/><rect x="402" y="51" width="10" height="10" fill="rgb(125, 137, 6)"/><rect x="412" y="51" width="10" height="10" fill="rgb(125, 137, 6)"/><rect x="422" y="51" width="10" height="10" fill="rgb(124, 138, 7)"/><rect x="432" y="51" width="10" height="10" fill="rgb(121, 138, 8)"/><rect x="442" y="51" width="10" height="10" fill="rgb(118, 139, 8)"/><rect x="452" y="51" width="10" height="10" fill="rgb(115, 139, 9)"/><rect x="462" y="51" width="10" height="10" fill="rgb(112, 140, 10)"/><rect x="472" y="51" width="10" height="10" fill="rgb(110, 140, 10)"/><rect x="482" y="51" width="10" height="10" fill="rgb(108, 141, 10)"/><rect x="492" y="51" width="10" height="10" fill="rgb(107, 141, 10)"/><rect x="502" y="51" width="10" height="10" fill="rgb(106, 141, 10)"/><rect x="512" y="51" width="10" height="10" fill="rgb(106, 141, 10)"/><rect x="522" y="51" width="10" height="10" fill="rgb(105, 142, 10)"/><rect x="532" y="51" width="10" height="10" fill="rgb(105, 142, 10)"/><rect x="542" y="51" width="10" height="10" fill="rgb(105, 142, 10)"/><rect x="552" y="51" width="10" height="10" fill="rgb(105, 142, 10)"/><rect x="562" y="51" width="10" height="10" fill="rgb(105, 142, 10)"/><rect x="572" y="51" width="10" height="10" fill="rgb(105, 142, 10)"/><rect x="582" y="51" width="10" height="10" fill="rgb(105, 142, 10)"/><rect x="592" y="51" width="10" height="10" fill="rgb(105, 142, 10)"/><rect x="602" y="51" width="10" height="10" fill="rgb(106, 141, 10)"/><rect x="612" y="51" width="10" height="10" fill="rgb(106, 141, 10)"/><rect x="622" y="51" width="10" height="10" fill="rgb(106, 141, 10)"/><rect x="632" y="51" width="10" height="10" fill="rgb(106, 141, 10)"/><rect x="642" y="51" width="10" height="10" fill="rgb(106, 141, 10)"/><rect x="652" y="51" width="10" height="10" fill="rgb(107, 141, 10)"/><rect x="122" y="61" width="10" height="10" fill="rgb(67, 141, 17)"/><rect x="132" y="61" width="10" height="10" fill="rgb(71, 141, 16)"/><rect x="142" y="61" width="10" height="10" fill="rgb(73, 142, 15)"/><rect x="152" y="61" width="10" height="10" fill="rgb(75, 142, 15)"/><rect x="162" y="61" width="10" height="10" fill="rgb(76, 142, 15)"/><rect x="172" y="61" width="10" height="10" fill="rgb(76, 142, 15)"/><rect x="182" y="61" width="10" height="10" fill="rgb(74, 142, 15)"/><rect x="192" y="61" width="10" height="10" fill="rgb(71, 141, 16)"/><rect x="202" y="61" width="10" height="10" fill="rgb(66, 141, 17)"/><rect x="212" y="61" width="10" height="10" fill="rgb(62, 140, 18)"/><rect x="222" y="61" width="10" height="10" fill="rgb(62, 140, 18)"/><rect x="232" y="61" width="10" height="10" fill="rgb(67, 141, 17)"/><rect x="242" y="61" width="10" height="10" fill="rgb(77, 142, 14)"/><rect x="252" y="61" width="10" height="10" fill="rgb(86, 144, 12)"/><rect x="262" y="61" width="10" height="10" fill="rgb(93, 145, 10)"/><rect x="272" y="61" width="10" height="10" fill="rgb(97, 144, 10)"/><rect x="282" y="61" width="10" height="10" fill="rgb(100, 143, 10)"/><rect x="292" y="61" width="10" height="10" fill="rgb(104, 142, 10)"/><rect x="302" y="61" width="10" height="10" fill="rgb(107, 141, 10)"/><rect x="312" y="61" width="10" height="10" fill="rgb(111, 140, 10)"/><rect x="322" y="61" width="10" height="10" fill="rgb(116, 139, 9)"/><rect x="332" y="61" width="10" height="10" fill="rgb(120, 139, 8)"/><rect x="342" y="61" width="10" height="10" fill="rgb(123, 138, 7)"/><rect x="352" y="61" width="10" height="10" fill="rgb(125, 137, 6)"/><rect x="362" y="61" width="10" height="10" fill="rgb(127, 136, 6)"/><rect x="372" y="61" width="10" height="10" fill="rgb(128, 136, 5)"/><rect x="382" y="61" width="10" height="10" fill="rgb(129, 135, 5)"/><rect x="392" y="61" width="10" height="10" fill="rgb(130, 135, 5)"/><rect x="402" y="61" width="10" height="10" fill="rgb(130, 135, 5)"/><rect x="412" y="61" width="10" height="10" fill="rgb(130, 135, 5)"/><rect x="422" y="61" width="10" height="10" fill="rgb(128, 136, 6)"/><rect x="432" y="61" width="10" height="10" fill="rgb(126, 137, 6)"/><rect x="442" y="61" width="10" height="10" fill="rgb(123, 138, 7)"/><rect x="452" y="61" width="10" height="10" fill="rgb(120, 139, 8)"/><rect x="462" y="61" width="10" height="10" fill="rgb(116, 139, 9)"/><rect x="472" y="61" width="10" height="10" fill="rgb(113, 140, 9)"/><rect x="482" y="61" width="10" height="10" fill="rgb(111, 140, 10)"/><rect x="492" y="61" width="10" height="10" fill="rgb(110, 140, 10)"/><rect x="502" y="61" width="10" height="10" fill="rgb(109, 140, 10)"/><rect x="512" y="61" width="10" height="10" fill="rgb(109, 140, 10)"/><rect x="522" y="61" width="10" height="10" fill="rgb(109, 140, 10)"/><rect x="532" y="61" width="10" height="10" fill="rgb(108, 141, 10)"/><rect x="542" y="61" width="10" height="10" fill="rgb(108, 141, 10)"/><rect x="552" y="61" width="10" height="10" fill="rgb(108, 141, 10)"/><rect x="562" y="61" width="10" height="10" fill="rgb(108, 141, 10)"/><rect x="572" y="61" width="10" height="10" fill="rgb(108, 141, 10)"/><rect x="582" y="61" width="10" height="10" fill="rgb(108, 141, 10)"/><rect x="592" y="61" width="10" height="10" fill="rgb(108, 141, 10)"/><rect x="602" y="61" width="10" height="10" fill="rgb(108, 141, 10)"/><rect x="612" y="61" width="10" height="10" fill="rgb(109, 140, 10)"/><rect x="622" y="61" width="10" height="10" fill="rgb(109, 140, 10)"/><rect x="632" y="61" width="10" height="10" fill="rgb(109, 140, 10)"/><rect x="642" y="61" width="10" height="10" fill="rgb(109, 140, 10)"/><rect x="652" y="61" width="10" height="10" fill="rgb(110, 140, 10)"/><rect x="122" y="71" width="10" height="10" fill="rgb(82, 143, 13)"/><rect x="132" y="71" width="10" height="10" fill="rgb(86, 144, 12)"/><rect x="142" y="71" width="10" height="10" fill="rgb(90, 144, 11)"/><rect x="152" y="71" width="10" height="10" fill="rgb(92, 145, 11)"/><rect x="162" y="71" width="10" height="10" fill="rgb(94, 145, 10)"/><rect x="172" y="71" width="10" height="10" fill="rgb(94, 145, 10)"/><rect x="182" y="71" width="10" height="10" fill="rgb(93, 145, 10)"/><rect x="192" y="71" width="10" height="10" fill="rgb(91, 144, 11)"/><rect x="202" y="71" width="10" height="10" fill="rgb(87, 144, 12)"/><rect x="212" y="71" width="10" height="10" fill="rgb(79, 143, 14)"/><rect x="222" y="71" width="10" height="10" fill="rgb(75, 142, 15)"/><rect x="232" y="71" width="10" height="10" fill="rgb(84, 143, 13)"/><rect x="242" y="71" width="10" height="10" fill="rgb(95, 145, 10)"/><rect x="252" y="71" width="10" height="10" fill="rgb(99, 144, 10)"/><rect x="262" y="71" width="10" height="10" fill="rgb(102, 143, 10)"/><rect x="272" y="71" width="10" height="10" fill="rgb(105, 142, 10)"/><rect x="282" y="71" width="10" height="10" fill="rgb(108, 141, 10)"/><rect x="292" y="71" width="10" height="10" fill="rgb(111, 140, 10)"/><rect x="302" y="71" width="10" height="10" fill="rgb(115, 139, 9)"/><rect x="312" y="71" width="10" height="10" fill="rgb(119, 139, 8)"/><rect x="322" y="71" width="10" height="10" fill="rgb(122, 138, 7)"/><rect x="332" y="71" width="10" height="10" fill="rgb(125, 137, 6)"/><rect x="342" y="71" width="10" height="10" fill="rgb(128, 136, 6)"/><rect x="352" y="71" width="10" height="10" fill="rgb(130, 135, 5)"/><rect x="362" y="71" width="10" height="10" fill="rgb(131, 135, 5)"/><rect x="372" y="71" width="10" height="10" fill="rgb(131, 135, 5)"/><rect x="382" y="71" width="10" height="10" fill="rgb(132, 135, 5)"/><rect x="392" y="71" width="10" height="10" fill="rgb(132, 135, 5)"/><rect x="402" y="71" width="10" height="10" fill="rgb(132, 135, 5)"/><rect x="412" y="71" width="10" height="10" fill="rgb(132, 135, 5)"/><rect x="422" y="71" width="10" height="10" fill="rgb(131, 135, 5)"/><rect x="432" y="71" width="10" height="10" fill="rgb(129, 135, 5)"/><rect x="442" y="71" width="10" height="10" fill="rgb(126, 136, 6)"/><rect x="452" y="71" width="10" height="10" fill="rgb(123, 138, 7)"/><rect x="462" y="71" width="10" height="10" fill="rgb(120, 139, 8)"/><rect x="472" y="71" width="10" height="10" fill="rgb(117, 139, 9)"/><rect x="482" y="71" width="10" height="10" fill="rgb(115, 139, 9)"/><rect x="492" y="71" width="10" height="10" fill="rgb(114, 140, 9)"/><rect x="502" y="71" width="10" height="10" fill="rgb(113, 140, 9)"/><rect x="512" y="71" width="10" height="10" fill="rgb(112, 140, 10)"/><rect x="522" y="71" width="10" height="10" fill="rgb(112, 140, 10)"/><rect x="532" y="71" width="10" height="10" fill="rgb(112, 140, 10)"/><rect x="542" y="71" width="10" height="10" fill="rgb(112, 140, 10)"/><rect x="552" y="71" width="10" height="10" fill="rgb(112, 140, 10)"/><rect x="562" y="71" width="10" height="10" fill="rgb(111, 140, 10)"/><rect x="572" y="71" width="10" height="10" fill="rgb(111, 140, 10)"/><rect x="582" y="71" width="10" height="10" fill="rgb(111, 140, 10)"/><rect x="592" y="71" width="10" height="10" fill="rgb(111, 140, 10)"/><rect x="602" y="71" width="10" height="10" fill="rgb(111, 140, 10)"/><rect x="612" y="71" width="10" height="10" fill="rgb(112, 140, 10)"/><rect x="622" y="71" width="10" height="10" fill="rgb(112, 140, 10)"/><rect x="632" y="71" width="10" height="10" fill="rgb(112, 140, 10)"/><rect x="642" y="71" width="10" height="10" fill="rgb(113, 140, 9)"/><rect x="652" y="71" width="10" height="10" fill="rgb(113, 140, 9)"/><rect x="122" y="81" width="10" height="10" fill="rgb(95, 145, 10)"/><rect x="132" y="81" width="10" height="10" fill="rgb(98, 144, 10)"/><rect x="142" y="81" width="10" height="10" fill="rgb(100, 143, 10)"/><rect x="152" y="81" width="10" height="10" fill="rgb(101, 143, 10)"/><rect x="162" y="81" width="10" height="10" fill="rgb(102, 143, 10)"/><rect x="172" y="81" width="10" height="10" fill="rgb(103, 142, 10)"/><rect x="182" y="81" width="10" height="10" fill="rgb(102, 143, 10)"/><rect x="192" y="81" width="10" height="10" fill="rgb(102, 143, 10)"/><rect x="202" y="81" width="10" height="10" fill="rgb(102, 143, 10)"/><rect x="212" y="81" width="10" height="10" fill="rgb(99, 144, 10)"/><rect x="222" y="81" width="10" height="10" fill="rgb(98, 144, 10)"/><rect x="232" y="81" width="10" height="10" fill="rgb(101, 143, 10)"/><rect x="242" y="81" width="10" height="10" fill="rgb(105, 142, 10)"/><rect x="252" y="81" width="10" height="10" fill="rgb(109, 140, 10)"/><rect x="262" y="81" width="10" height="10" fill="rgb(112, 140, 10)"/><rect x="272" y="81" width="10" height="10" fill="rgb(115, 140, 9)"/><rect x="282" y="81" width="10" height="10" fill="rgb(118, 139, 8)"/><rect x="292" y="81" width="10" height="10" fill="rgb(120, 139, 8)"/><rect x="302" y="81" width="10" height="10" fill="rgb(123, 138, 7)"/><rect x="312" y="81" width="10" height="10" fill="rgb(126, 137, 6)"/><rect x="322" y="81" width="10" height="10" fill="rgb(128, 136, 6)"/><rect x="332" y="81" width="10" height="10" fill="rgb(130, 135, 5)"/><rect x="342" y="81" width="10" height="10" fill="rgb(131, 135, 5)"/><rect x="352" y="81" width="10" height="10" fill="rgb(132, 135, 5)"/><rect x="362" y="81" width="10" height="10" fill="rgb(133, 135, 5)"/><rect x="372" y="81" width="10" height="10" fill="rgb(133, 135, 5)"/><rect x="382" y="81" width="10" height="10" fill="rgb(133, 135, 5)"/><rect x="392" y="81" width="10" height="10" fill="rgb(133, 135, 5)"/><rect x="402" y="81" width="10" height="10" fill="rgb(133, 135, 5)"/><rect x="412" y="81" width="10" height="10" fill="rgb(133, 135, 5)"/><rect x="422" y="81" width="10" height="10" fill="rgb(132, 135, 5)"/><rect x="432" y="81" width="10" height="10" fill="rgb(131, 135, 5)"/><rect x="442" y="81" width="10" height="10" fill="rgb(129, 135, 5)"/><rect x="452" y="81" width="10" height="10" fill="rgb(127, 136, 6)"/><rect x="462" y="81" width="10" height="10" fill="rgb(124, 137, 7)"/><rect x="472" y="81" width="10" height="10" fill="rgb(121, 138, 8)"/><rect x="482" y="81" width="10" height="10" fill="rgb(119, 139, 8)"/><rect x="492" y="81" width="10" height="10" fill="rgb(118, 139, 8)"/><rect x="502" y="81" width="10" height="10" fill="rgb(117, 139, 9)"/><rect x="512" y="81" width="10" height="10" fill="rgb(117, 139, 9)"/><rect x="522" y="81" width="10" height="10" fill="rgb(117, 139, 9)"/><rect x="532" y="81" width="10" height="10" fill="rgb(116, 139, 9)"/><rect x="542" y="81" width="10" height="10" fill="rgb(116, 139, 9)"/><rect x="552" y="81" width="10" height="10" fill="rgb(116, 139, 9)"/><rect x="562" y="81" width="10" height="10" fill="rgb(115, 139, 9)"/><rect x="572" y="81" width="10" height="10" fill="rgb(115, 140, 9)"/><rect x="582" y="81" width="10" height="10" fill="rgb(114, 140, 9)"/><rect x="592" y="81" width="10" height="10" fill="rgb(114, 140, 9)"/><rect x="602" y="81" width="10" height="10" fill="rgb(114, 140, 9)"/><rect x="612" y="81" width="10" height="10" fill="rgb(114, 140, 9)"/><rect x="622" y="81" width="10" height="10" fill="rgb(115, 139, 9)"/><rect x="632" y="81" width="10" height="10" fill="rgb(116, 139, 9)"/><rect x="642" y="81" width="10" height="10" fill="rgb(116, 139, 9)"/><rect x="652" y="81" width="10" height="10" fill="rgb(117, 139, 9)"/><rect x="122" y="91" width="10" height="10" fill="rgb(102, 143, 10)"/><rect x="132" y="91" width="10" height="10" fill="rgb(104, 142, 10)"/><rect x="142" y="91" width="10" height="10" fill="rgb(107, 141, 10)"/><rect x="152" y="91" width="10" height="10" fill="rgb(109, 140, 10)"/><rect x="162" y="91" width="10" height="10" fill="rgb(110, 140, 10)"/><rect x="172" y="91" width="10" height="10" fill="rgb(110, 140, 10)"/><rect x="182" y="91" width="10" height="10" fill="rgb(110, 140, 10)"/><rect x="192" y="91" width="10" height="10" fill="rgb(109, 140, 10)"/><rect x="202" y="91" width="10" height="10" fill="rgb(109, 140, 10)"/><rect x="212" y="91" width="10" height="10" fill="rgb(108, 141, 10)"/><rect x="222" y="91" width="10" height="10" fill="rgb(109, 140, 10)"/><rect x="232" y="91" width="10" height="10" fill="rgb(112, 140, 10)"/><rect x="242" y="91" width="10" height="10" fill="rgb(118, 139, 8)"/><rect x="252" y="91" width="10" height="10" fill="rgb(122, 138, 8)"/><rect x="262" y="91" width="10" height="10" fill="rgb(124, 137, 7)"/><rect x="272" y="91" width="10" height="10" fill="rgb(126, 137, 6)"/><rect x="282" y="91" width="10" height="10" fill="rgb(127, 136, 6)"/><rect x="292" y="91" width="10" height="10" fill="rgb(129, 136, 5)"/><rect x="302" y="91" width="10" height="10" fill="rgb(130, 135, 5)"/><rect x="312" y="91" width="10" height="10" fill="rgb(131, 135, 5)"/><rect x="322" y="91" width="10" height="10" fill="rgb(132, 135, 5)"/><rect x="332" y="91" width="10" height="10" fill="rgb(133, 135, 5)"/><rect x="342" y="91" width="10" height="10" fill="rgb(134, 135, 5)"/><rect x="352" y="91" width="10" height="10" fill="rgb(134, 135, 5)"/><rect x="362" y="91" width="10" height="10" fill="rgb(135, 135, 5)"/><rect x="372" y="91" width="10" height="10" fill="rgb(135, 135, 5)"/><rect x="382" y="91" width="10" height="10" fill="rgb(135, 135, 5)"/><rect x="392" y="91" width="10" height="10" fill="rgb(135, 135, 5)"/><rect x="402" y="91" width="10" height="10" fill="rgb(134, 135, 5)"/><rect x="412" y="91" width="10" height="10" fill="rgb(134, 135, 5)"/><rect x="422" y="91" width="10" height="10" fill="rgb(133, 135, 5)"/><rect x="432" y="91" width="10" height="10" fill="rgb(132, 135, 5)"/><rect x="442" y="91" width="10" height="10" fill="rgb(131, 135, 5)"/><rect x="452" y="91" width="10" height="10" fill="rgb(130, 135, 5)"/><rect x="462" y="91" width="10" height="10" fill="rgb(127, 136, 6)"/><rect x="472" y="91" width="10" height="10" fill="rgb(125, 137, 6)"/><rect x="482" y="91" width="10" height="10" fill="rgb(123, 138, 7)"/><rect x="492" y="91" width="10" height="10" fill="rgb(122, 138, 7)"/><rect x="502" y="91" width="10" height="10" fill="rgb(121, 139, 8)"/><rect x="512" y="91" width="10" height="10" fill="rgb(121, 139, 8)"/><rect x="522" y="91" width="10" height="10" fill="rgb(121, 139, 8)"/><rect x="532" y="91" width="10" height="10" fill="rgb(121, 139, 8)"/><rect x="542" y="91" width="10" height="10" fill="rgb(120, 139, 8)"/><rect x="552" y="91" width="10" height="10" fill="rgb(120, 139, 8)"/><rect x="562" y="91" width="10" height="10" fill="rgb(119, 139, 8)"/><rect x="572" y="91" width="10" height="10" fill="rgb(118, 139, 8)"/><rect x="582" y="91" width="10" height="10" fill="rgb(117, 139, 9)"/><rect x="592" y="91" width="10" height="10" fill="rgb(117, 139, 9)"/><rect x="602" y="91" width="10" height="10" fill="rgb(117, 139, 9)"/><rect x="612" y="91" width="10" height="10" fill="rgb(117, 139, 9)"/><rect x="622" y="91" width="10" height="10" fill="rgb(118, 139, 8)"/><rect x="632" y="91" width="10" height="10" fill="rgb(119, 139, 8)"/><rect x="642" y="91" width="10" height="10" fill="rgb(120, 139, 8)"/><rect x="652" y="91" width="10" height="10" fill="rgb(121, 139, 8)"/><rect x="122" y="101" width="10" height="10" fill="rgb(107, 141, 10)"/><rect x="132" y="101" width="10" height="10" fill="rgb(111, 140, 10)"/><rect x="142" y="101" width="10" height="10" fill="rgb(115, 140, 9)"/><rect x="152" y="101" width="10" height="10" fill="rgb(118, 139, 8)"/><rect x="162" y="101" width="10" height="10" fill="rgb(120, 139, 8)"/><rect x="172" y="101" width="10" height="10" fill="rgb(120, 139, 8)"/><rect x="182" y="101" width="10" height="10" fill="rgb(118, 139, 8)"/><rect x="192" y="101" width="10" height="10" fill="rgb(116, 139, 9)"/><rect x="202" y="101" width="10" height="10" fill="rgb(115, 139, 9)"/><rect x="212" y="101" width="10" height="10" fill="rgb(116, 139, 9)"/><rect x="222" y="101" width="10" height="10" fill="rgb(119, 139, 8)"/><rect x="232" y="101" width="10" height="10" fill="rgb(124, 137, 7)"/><rect x="242" y="101" width="10" height="10" fill="rgb(130, 135, 5)"/><rect x="252" y="101" width="10" height="10" fill="rgb(131, 135, 5)"/><rect x="262" y="101" width="10" height="10" fill="rgb(132, 135, 5)"/><rect x="272" y="101" width="10" height="10" fill="rgb(133, 135, 5)"/><rect x="282" y="101" width="10" height="10" fill="rgb(133, 135, 5)"/><rect x="292" y="101" width="10" height="10" fill="rgb(133, 135, 5)"/><rect x="302" y="101" width="10" height="10" fill="rgb(133, 135, 5)"/><rect x="312" y="101" width="10" height="10" fill="rgb(134, 135, 5)"/><rect x="322" y="101" width="10" height="10" fill="rgb(134, 135, 5)"/><rect x="332" y="101" width="10" height="10" fill="rgb(135, 135, 5)"/><rect x="342" y="101" width="10" height="10" fill="rgb(135, 134, 5)"/><rect x="352" y="101" width="10" height="10" fill="rgb(135, 133, 5)"/><rect x="362" y="101" width="10" height="10" fill="rgb(135, 132, 5)"/><rect x="372" y="101" width="10" height="10" fill="rgb(135, 132, 5)"/><rect x="382" y="101" width="10" height="10" fill="rgb(135, 133, 5)"/><rect x="392" y="101" width="10" height="10" fill="rgb(135, 133, 5)"/><rect x="402" y="101" width="10" height="10" fill="rgb(135, 134, 5)"/><rect x="412" y="101" width="10" height="10" fill="rgb(135, 135, 5)"/><rect x="422" y="101" width="10" height="10" fill="rgb(134, 135, 5)"/><rect x="432" y="101" width="10" height="10" fill="rgb(133, 135, 5)"/><rect x="442" y="101" width="10" height="10" fill="rgb(132, 135, 5)"/><rect x="452" y="101" width="10" height="10" fill="rgb(131, 135, 5)"/><rect x="462" y="101" width="10" height="10" fill="rgb(130, 135, 5)"/><rect x="472" y="101" width="10" height="10" fill="rgb(128, 136, 5)"/><rect x="482" y="101" width="10" height="10" fill="rgb(127, 136, 6)"/><rect x="492" y="101" width="10" height="10" fill="rgb(126, 137, 6)"/><rect x="502" y="101" width="10" height="10" fill="rgb(125, 137, 6)"/><rect x="512" y="101" width="10" height="10" fill="rgb(125, 137, 7)"/><rect x="522" y="101" width="10" height="10" fill="rgb(125, 137, 7)"/><rect x="532" y="101" width="10" height="10" fill="rgb(125, 137, 7)"/><rect x="542" y="101" width="10" height="10" fill="rgb(124, 137, 7)"/><rect x="552" y="101" width="10" height="10" fill="rgb(124, 137, 7)"/><rect x="562" y="101" width="10" height="10" fill="rgb(123, 138, 7)"/><rect x="572" y="101" width="10" height="10" fill="rgb(122, 138, 7)"/><rect x="582" y="101" width="10" height="10" fill="rgb(121, 139, 8)"/><rect x="592" y="101" width="10" height="10" fill="rgb(120, 139, 8)"/><rect x="602" y="101" width="10" height="10" fill="rgb(120, 139, 8)"/><rect x="612" y="101" width="10" height="10" fill="rgb(120, 139, 8)"/><rect x="622" y="101" width="10" height="10" fill="rgb(121, 138, 8)"/><rect x="632" y="101" width="10" height="10" fill="rgb(123, 138, 7)"/><rect x="642" y="101" width="10" height="10" fill="rgb(124, 138, 7)"/><rect x="652" y="101" width="10" height="10" fill="rgb(125, 137, 7)"/><rect x="122" y="111" width="10" height="10" fill="rgb(112, 140, 10)"/><rect x="132" y="111" width="10" height="10" fill="rgb(117, 139, 9)"/><rect x="142" y="111" width="10" height="10" fill="rgb(123, 138, 7)"/><rect x="152" y="111" width="10" height="10" fill="rgb(127, 136, 6)"/><rect x="162" y="111" width="10" height="10" fill="rgb(129, 135, 5)"/><rect x="172" y="111" width="10" height="10" fill="rgb(129, 135, 5)"/><rect x="182" y="111" width="10" height="10" fill="rgb(127, 136, 6)"/><rect x="192" y="111" width="10" height="10" fill="rgb(124, 137, 7)"/><rect x="202" y="111" width="10" height="10" fill="rgb(122, 138, 7)"/><rect x="212" y="111" width="10" height="10" fill="rgb(123, 138, 7)"/><rect x="222" y="111" width="10" height="10" fill="rgb(127, 136, 6)"/><rect x="232" y="111" width="10" height="10" fill="rgb(132, 135, 5)"/><rect x="242" y="111" width="10" height="10" fill="rgb(134, 135, 5)"/><rect x="252" y="111" width="10" height="10" fill="rgb(135, 133, 5)"/><rect x="262" y="111" width="10" height="10" fill="rgb(135, 132, 5)"/><rect x="272" y="111" width="10" height="10" fill="rgb(135, 131, 5)"/><rect x="282" y="111" width="10" height="10" fill="rgb(135, 132, 5)"/><rect x="292" y="111" width="10" height="10" fill="rgb(135, 132, 5)"/><rect x="302" y="111" width="10" height="10" fill="rgb(135, 133, 5)"/><rect x="312" y="111" width="10" height="10" fill="rgb(135, 133, 5)"/><rect x="322" y="111" width="10" height="10" fill="rgb(135, 132, 5)"/><rect x="332" y="111" width="10" height="10" fill="rgb(135, 132, 5)"/><rect x="342" y="111" width="10" height="10" fill="rgb(135, 131, 5)"/><rect x="352" y="111" width="10" height="10" fill="rgb(135, 130, 5)"/><rect x="362" y="111" width="10" height="10" fill="rgb(135, 129, 5)"/><rect x="372" y="111" width="10" height="10" fill="rgb(135, 129, 5)"/><rect x="382" y="111" width="10" height="10" fill="rgb(135, 130, 5)"/><rect x="392" y="111" width="10" height="10" fill="rgb(135, 131, 5)"/><rect x="402" y="111" width="10" height="10" fill="rgb(135, 132, 5)"/><rect x="412" y="111" width="10" height="10" fill="rgb(135, 133, 5)"/><rect x="422" y="111" width="10" height="10" fill="rgb(135, 135, 5)"/><rect x="432" y="111" width="10" height="10" fill="rgb(134, 135, 5)"/><rect x="442" y="111" width="10" height="10" fill="rgb(133, 135, 5)"/><rect x="452" y="111" width="10" height="10" fill="rgb(132, 135, 5)"/><rect x="462" y="111" width="10" height="10" fill="rgb(132, 135, 5)"/><rect x="472" y="111" width="10" height="10" fill="rgb(131, 135, 5)"/><rect x="482" y="111" width="10" height="10" fill="rgb(130, 135, 5)"/><rect x="492" y="111" width="10" height="10" fill="rgb(129, 135, 5)"/><rect x="502" y="111" width="10" height="10" fill="rgb(129, 135, 5)"/><rect x="512" y="111" width="10" height="10" fill="rgb(129, 136, 5)"/><rect x="522" y="111" width="10" height="10" fill="rgb(128, 136, 5)"/><rect x="532" y="111" width="10" height="10" fill="rgb(128, 136, 6)"/><rect x="542" y="111" width="10" height="10" fill="rgb(128, 136, 6)"/><rect x="552" y="111" width="10" height="10" fill="rgb(127, 136, 6)"/><rect x="562" y="111" width="10" height="10" fill="rgb(127, 136, 6)"/><rect x="572" y="111" width="10" height="10" fill="rgb(126, 137, 6)"/><rect x="582" y="111" width="10" height="10" fill="rgb(125, 137, 7)"/><rect x="592" y="111" width="10" height="10" fill="rgb(124, 137, 7)"/><rect x="602" y="111" width="10" height="10" fill="rgb(124, 138, 7)"/><rect x="612" y="111" width="10" height="10" fill="rgb(124, 137, 7)"/><rect x="622" y="111" width="10" height="10" fill="rgb(125, 137, 6)"/><rect x="632" y="111" width="10" height="10" fill="rgb(127, 136, 6)"/><rect x="642" y="111" width="10" height="10" fill="rgb(128, 136, 6)"/><rect x="652" y="111" width="10" height="10" fill="rgb(129, 135, 5)"/><rect x="122" y="121" width="10" height="10" fill="rgb(117, 139, 9)"/><rect x="132" y="121" width="10" height="10" fill="rgb(122, 138, 7)"/><rect x="142" y="121" width="10" height="10" fill="rgb(129, 135, 5)"/><rect x="152" y="121" width="10" height="10" fill="rgb(132, 135, 5)"/><rect x="162" y="121" width="10" height="10" fill="rgb(134, 135, 5)"/><rect x="172" y="121" width="10" height="10" fill="rgb(134, 135, 5)"/><rect x="182" y="121" width="10" height="10" fill="rgb(134, 135, 5)"/><rect x="192" y="121" width="10" height="10" fill="rgb(132, 135, 5)"/><rect x="202" y="121" width="10" height="10" fill="rgb(131, 135, 5)"/><rect x="212" y="121" width="10" height="10" fill="rgb(131, 135, 5)"/><rect x="222" y="121" width="10" height="10" fill="rgb(133, 135, 5)"/><rect x="232" y="121" width="10" height="10" fill="rgb(135, 134, 5)"/><rect x="242" y="121" width="10" height="10" fill="rgb(135, 129, 5)"/><rect x="252" y="121" width="10" height="10" fill="rgb(135, 126, 5)"/><rect x="262" y="121" width="10" height="10" fill="rgb(135, 124, 5)"/><rect x="272" y="121" width="10" height="10" fill="rgb(135, 124, 5)"/><rect x="282" y="121" width="10" height="10" fill="rgb(135, 125, 5)"/><rect x="292" y="121" width="10" height="10" fill="rgb(135, 127, 5)"/><rect x="302" y="121" width="10" height="10" fill="rgb(135, 127, 5)"/><rect x="312" y="121" width="10" height="10" fill="rgb(135, 128, 5)"/><rect x="322" y="121" width="10" height="10" fill="rgb(135, 128, 5)"/><rect x="332" y="121" width="10" height="10" fill="rgb(135, 128, 5)"/><rect x="342" y="121" width="10" height="10" fill="rgb(135, 128, 5)"/><rect x="352" y="121" width="10" height="10" fill="rgb(135, 127, 5)"/><rect x="362" y="121" width="10" height="10" fill="rgb(135, 127, 5)"/><rect x="372" y="121" width="10" height="10" fill="rgb(135, 127, 5)"/><rect x="382" y="121" width="10" height="10" fill="rgb(135, 127, 5)"/><rect x="392" y="121" width="10" height="10" fill="rgb(135, 129, 5)"/><rect x="402" y="121" width="10" height="10" fill="rgb(135, 130, 5)"/><rect x="412" y="121" width="10" height="10" fill="rgb(135, 132, 5)"/><rect x="422" y="121" width="10" height="10" fill="rgb(135, 133, 5)"/><rect x="432" y="121" width="10" height="10" fill="rgb(135, 134, 5)"/><rect x="442" y="121" width="10" height="10" fill="rgb(134, 135, 5)"/><rect x="452" y="121" width="10" height="10" fill="rgb(134, 135, 5)"/><rect x="462" y="121" width="10" height="10" fill="rgb(133, 135, 5)"/><rect x="472" y="121" width="10" height="10" fill="rgb(132, 135, 5)"/><rect x="482" y="121" width="10" height="10" fill="rgb(132, 135, 5)"/><rect x="492" y="121" width="10" height="10" fill="rgb(131, 135, 5)"/><rect x="502" y="121" width="10" height="10" fill="rgb(131, 135, 5)"/><rect x="512" y="121" width="10" height="10" fill="rgb(131, 135, 5)"/><rect x="522" y="121" width="10" height="10" fill="rgb(131, 135, 5)"/><rect x="532" y="121" width="10" height="10" fill="rgb(131, 135, 5)"/><rect x="542" y="121" width="10" height="10" fill="rgb(131, 135, 5)"/><rect x="552" y="121" width="10" height="10" fill="rgb(131, 135, 5)"/><rect x="562" y="121" width="10" height="10" fill="rgb(130, 135, 5)"/><rect x="572" y="121" width="10" height="10" fill="rgb(130, 135, 5)"/><rect x="582" y="121" width="10" height="10" fill="rgb(129, 135, 5)"/><rect x="592" y="121" width="10" height="10" fill="rgb(128, 136, 6)"/><rect x="602" y="121" width="10" height="10" fill="rgb(128, 136, 6)"/><rect x="612" y="121" width="10" height="10" fill="rgb(129, 135, 5)"/><rect x="622" y="121" width="10" height="10" fill="rgb(130, 135, 5)"/><rect x="632" y="121" width="10" height="10" fill="rgb(130, 135, 5)"/><rect x="642" y="121" width="10" height="10" fill="rgb(131, 135, 5)"/><rect x="652" y="121" width="10" height="10" fill="rgb(132, 135, 5)"/><rect x="122" y="131" width="10" height="10" fill="rgb(121, 139, 8)"/><rect x="132" y="131" width="10" height="10" fill="rgb(124, 137, 7)"/><rect x="142" y="131" width="10" height="10" fill="rgb(131, 135, 5)"/><rect x="152" y="131" width="10" height="10" fill="rgb(134, 135, 5)"/><rect x="162" y="131" width="10" height="10" fill="rgb(135, 132, 5)"/><rect x="172" y="131" width="10" height="10" fill="rgb(135, 128, 5)"/><rect x="182" y="131" width="10" height="10" fill="rgb(135, 127, 5)"/><rect x="192" y="131" width="10" height="10" fill="rgb(135, 129, 5)"/><rect x="202" y="131" width="10" height="10" fill="rgb(135, 132, 5)"/><rect x="212" y="131" width="10" height="10" fill="rgb(135, 132, 5)"/><rect x="222" y="131" width="10" height="10" fill="rgb(135, 130, 5)"/><rect x="232" y="131" width="10" height="10" fill="rgb(135, 126, 5)"/><rect x="242" y="131" width="10" height="10" fill="rgb(135, 122, 5)"/><rect x="252" y="131" width="10" height="10" fill="rgb(135, 119, 5)"/><rect x="262" y="131" width="10" height="10" fill="rgb(135, 118, 5)"/><rect x="272" y="131" width="10" height="10" fill="rgb(135, 118, 5)"/><rect x="282" y="131" width="10" height="10" fill="rgb(135, 120, 5)"/><rect x="292" y="131" width="10" height="10" fill="rgb(135, 121, 5)"/><rect x="302" y="131" width="10" height="10" fill="rgb(135, 123, 5)"/><rect x="312" y="131" width="10" height="10" fill="rgb(135, 124, 5)"/><rect x="322" y="131" width="10" height="10" fill="rgb(135, 125, 5)"/><rect x="332" y="131" width="10" height="10" fill="rgb(135, 125, 5)"/><rect x="342" y="131" width="10" height="10" fill="rgb(135, 125, 5)"/><rect x="352" y="131" width="10" height="10" fill="rgb(135, 125, 5)"/><rect x="362" y="131" width="10" height="10" fill="rgb(135, 125, 5)"/><rect x="372" y="131" width="10" height="10" fill="rgb(135, 125, 5)"/><rect x="382" y="131" width="10" height="10" fill="rgb(135, 126, 5)"/><rect x="392" y="131" width="10" height="10" fill="rgb(135, 127, 5)"/><rect x="402" y="131" width="10" height="10" fill="rgb(135, 128, 5)"/><rect x="412" y="131" width="10" height="10" fill="rgb(135, 130, 5)"/><rect x="422" y="131" width="10" height="10" fill="rgb(135, 131, 5)"/><rect x="432" y="131" width="10" height="10" fill="rgb(135, 133, 5)"/><rect x="442" y="131" width="10" height="10" fill="rgb(135, 134, 5)"/><rect x="452" y="131" width="10" height="10" fill="rgb(135, 135, 5)"/><rect x="462" y="131" width="10" height="10" fill="rgb(134, 135, 5)"/><rect x="472" y="131" width="10" height="10" fill="rgb(134, 135, 5)"/><rect x="482" y="131" width="10" height="10" fill="rgb(133, 135, 5)"/><rect x="492" y="131" width="10" height="10" fill="rgb(133, 135, 5)"/><rect x="502" y="131" width="10" height="10" fill="rgb(133, 135, 5)"/><rect x="512" y="131" width="10" height="10" fill="rgb(133, 135, 5)"/><rect x="522" y="131" width="10" height="10" fill="rgb(133, 135, 5)"/><rect x="532" y="131" width="10" height="10" fill="rgb(133, 135, 5)"/><rect x="542" y="131" width="10" height="10" fill="rgb(133, 135, 5)"/><rect x="552" y="131" width="10" height="10" fill="rgb(132, 135, 5)"/><rect x="562" y="131" width="10" height="10" fill="rgb(132, 135, 5)"/><rect x="572" y="131" width="10" height="10" fill="rgb(132, 135, 5)"/><rect x="582" y="131" width="10" height="10" fill="rgb(132, 135, 5)"/><rect x="592" y="131" width="10" height="10" fill="rgb(132, 135, 5)"/><rect x="602" y="131" width="10" height="10" fill="rgb(132, 135, 5)"/><rect x="612" y="131" width="10" height="10" fill="rgb(132, 135, 5)"/><rect x="622" y="131" width="10" height="10" fill="rgb(132, 135, 5)"/><rect x="632" y="131" width="10" height="10" fill="rgb(133, 135, 5)"/><rect x="642" y="131" width="10" height="10" fill="rgb(133, 135, 5)"/><rect x="652" y="131" width="10" height="10" fill="rgb(134, 135, 5)"/><rect x="122" y="141" width="10" height="10" fill="rgb(125, 137, 6)"/><rect x="132" y="141" width="10" height="10" fill="rgb(127, 136, 6)"/><rect x="142" y="141" width="10" height="10" fill="rgb(130, 135, 5)"/><rect x="152" y="141" width="10" height="10" fill="rgb(135, 135, 5)"/><rect x="162" y="141" width="10" height="10" fill="rgb(135, 126, 5)"/><rect x="172" y="141" width="10" height="10" fill="rgb(135, 120, 5)"/><rect x="182" y="141" width="10" height="10" fill="rgb(135, 118, 5)"/><rect x="192" y="141" width="10" height="10" fill="rgb(135, 119, 5)"/><rect x="202" y="141" width="10" height="10" fill="rgb(135, 121, 5)"/><rect x="212" y="141" width="10" height="10" fill="rgb(135, 122, 5)"/><rect x="222" y="141" width="10" height="10" fill="rgb(135, 120, 5)"/><rect x="232" y="141" width="10" height="10" fill="rgb(135, 118, 5)"/><rect x="242" y="141" width="10" height="10" fill="rgb(135, 115, 5)"/><rect x="252" y="141" width="10" height="10" fill="rgb(135, 113, 5)"/><rect x="262" y="141" width="10" height="10" fill="rgb(135, 112, 5)"/><rect x="272" y="141" width="10" height="10" fill="rgb(135, 113, 5)"/><rect x="282" y="141" width="10" height="10" fill="rgb(135, 115, 5)"/><rect x="292" y="141" width="10" height="10" fill="rgb(135, 117, 5)"/><rect x="302" y="141" width="10" height="10" fill="rgb(135, 119, 5)"/><rect x="312" y="141" width="10" height="10" fill="rgb(135, 120, 5)"/><rect x="322" y="141" width="10" height="10" fill="rgb(135, 121, 5)"/><rect x="332" y="141" width="10" height="10" fill="rgb(135, 122, 5)"/><rect x="342" y="141" width="10" height="10" fill="rgb(135, 123, 5)"/><rect x="352" y="141" width="10" height="10" fill="rgb(135, 123, 5)"/><rect x="362" y="141" width="10" height="10" fill="rgb(135, 123, 5)"/><rect x="372" y="141" width="10" height="10" fill="rgb(135, 123, 5)"/><rect x="382" y="141" width="10" height="10" fill="rgb(135, 124, 5)"/><rect x="392" y="141" width="10" height="10" fill="rgb(135, 125, 5)"/><rect x="402" y="141" width="10" height="10" fill="rgb(135, 127, 5)"/><rect x="412" y="141" width="10" height="10" fill="rgb(135, 128, 5)"/><rect x="422" y="141" width="10" height="10" fill="rgb(135, 130, 5)"/><rect x="432" y="141" width="10" height="10" fill="rgb(135, 131, 5)"/><rect x="442" y="141" width="10" height="10" fill="rgb(135, 132, 5)"/><rect x="452" y="141" width="10" height="10" fill="rgb(135, 134, 5)"/><rect x="462" y="141" width="10" height="10" fill="rgb(135, 134, 5)"/><rect x="472" y="141" width="10" height="10" fill="rgb(135, 135, 5)"/><rect x="482" y="141" width="10" height="10" fill="rgb(135, 135, 5)"/><rect x="492" y="141" width="10" height="10" fill="rgb(135, 135, 5)"/><rect x="502" y="141" width="10" height="10" fill="rgb(135, 135, 5)"/><rect x="512" y="141" width="10" height="10" fill="rgb(135, 135, 5)"/><rect x="522" y="141" width="10" height="10" fill="rgb(135, 135, 5)"/><rect x="532" y="141" width="10" height="10" fill="rgb(135, 135, 5)"/><rect x="542" y="141" width="10" height="10" fill="rgb(135, 135, 5)"/><rect x="552" y="141" width="10" height="10" fill="rgb(134, 135, 5)"/><rect x="562" y="141" width="10" height="10" fill="rgb(134, 135, 5)"/><rect x="572" y="141" width="10" height="10" fill="rgb(134, 135, 5)"/><rect x="582" y="141" width="10" height="10" fill="rgb(134, 135, 5)"/><rect x="592" y="141" width="10" height="10" fill="rgb(134, 135, 5)"/><rect x="602" y="141" width="10" height="10" fill="rgb(134, 135, 5)"/><rect x="612" y="141" width="10" height="10" fill="rgb(134, 135, 5)"/><rect x="622" y="141" width="10" height="10" fill="rgb(135, 135, 5)"/><rect x="632" y="141" width="10" height="10" fill="rgb(135, 134, 5)"/><rect x="642" y="141" width="10" height="10" fill="rgb(135, 133, 5)"/><rect x="652" y="141" width="10" height="10" fill="rgb(135, 132, 5)"/><rect x="122" y="151" width="10" height="10" fill="rgb(132, 135, 5)"/><rect x="132" y="151" width="10" height="10" fill="rgb(133, 135, 5)"/><rect x="142" y="151" width="10" height="10" fill="rgb(135, 135, 5)"/><rect x="152" y="151" width="10" height="10" fill="rgb(135, 128, 5)"/><rect x="162" y="151" width="10" height="10" fill="rgb(135, 120, 5)"/><rect x="172" y="151" width="10" height="10" fill="rgb(135, 114, 5)"/><rect x="182" y="151" width="10" height="10" fill="rgb(135, 111, 5)"/><rect x="192" y="151" width="10" height="10" fill="rgb(135, 110, 5)"/><rect x="202" y="151" width="10" height="10" fill="rgb(135, 112, 5)"/><rect x="212" y="151" width="10" height="10" fill="rgb(135, 112, 5)"/><rect x="222" y="151" width="10" height="10" fill="rgb(135, 112, 5)"/><rect x="232" y="151" width="10" height="10" fill="rgb(135, 110, 5)"/><rect x="242" y="151" width="10" height="10" fill="rgb(135, 109, 5)"/><rect x="252" y="151" width="10" height="10" fill="rgb(135, 108, 5)"/><rect x="262" y="151" width="10" height="10" fill="rgb(135, 108, 5)"/><rect x="272" y="151" width="10" height="10" fill="rgb(135, 109, 5)"/><rect x="282" y="151" width="10" height="10" fill="rgb(135, 111, 5)"/><rect x="292" y="151" width="10" height="10" fill="rgb(135, 113, 5)"/><rect x="302" y="151" width="10" height="10" fill="rgb(135, 115, 5)"/><rect x="312" y="151" width="10" height="10" fill="rgb(135, 117, 5)"/><rect x="322" y="151" width="10" height="10" fill="rgb(135, 118, 5)"/><rect x="332" y="151" width="10" height="10" fill="rgb(135, 120, 5)"/><rect x="342" y="151" width="10" height="10" fill="rgb(135, 121, 5)"/><rect x="352" y="151" width="10" height="10" fill="rgb(135, 121, 5)"/><rect x="362" y="151" width="10" height="10" fill="rgb(135, 121, 5)"/><rect x="372" y="151" width="10" height="10" fill="rgb(135, 122, 5)"/><rect x="382" y="151" width="10" height="10" fill="rgb(135, 123, 5)"/><rect x="392" y="151" width="10" height="10" fill="rgb(135, 124, 5)"/><rect x="402" y="151" width="10" height="10" fill="rgb(135, 125, 5)"/><rect x="412" y="151" width="10" height="10" fill="rgb(135, 127, 5)"/><rect x="422" y="151" width="10" height="10" fill="rgb(135, 128, 5)"/><rect x="432" y="151" width="10" height="10" fill="rgb(135, 130, 5)"/><rect x="442" y="151" width="10" height="10" fill="rgb(135, 131, 5)"/><rect x="452" y="151" width="10" height="10" fill="rgb(135, 132, 5)"/><rect x="462" y="151" width="10" height="10" fill="rgb(135, 132, 5)"/><rect x="472" y="151" width="10" height="10" fill="rgb(135, 133, 5)"/><rect x="482" y="151" width="10" height="10" fill="rgb(135, 133, 5)"/><rect x="492" y="151" width="10" height="10" fill="rgb(135, 133, 5)"/><rect x="502" y="151" width="10" height="10" fill="rgb(135, 133, 5)"/><rect x="512" y="151" width="10" height="10" fill="rgb(135, 133, 5)"/><rect x="522" y="151" width="10" height="10" fill="rgb(135, 132, 5)"/><rect x="532" y="151" width="10" height="10" fill="rgb(135, 132, 5)"/><rect x="542" y="151" width="10" height="10" fill="rgb(135, 132, 5)"/><rect x="552" y="151" width="10" height="10" fill="rgb(135, 132, 5)"/><rect x="562" y="151" width="10" height="10" fill="rgb(135, 132, 5)"/><rect x="572" y="151" width="10" height="10" fill="rgb(135, 132, 5)"/><rect x="582" y="151" width="10" height="10" fill="rgb(135, 132, 5)"/><rect x="592" y="151" width="10" height="10" fill="rgb(135, 132, 5)"/><rect x="602" y="151" width="10" height="10" fill="rgb(135, 132, 5)"/><rect x="612" y="151" width="10" height="10" fill="rgb(135, 131, 5)"/><rect x="622" y="151" width="10" height="10" fill="rgb(135, 130, 5)"/><rect x="632" y="151" width="10" height="10" fill="rgb(135, 129, 5)"/><rect x="642" y="151" width="10" height="10" fill="rgb(135, 128, 5)"/><rect x="652" y="151" width="10" height="10" fill="rgb(135, 127, 5)"/><rect x="122" y="161" width="10" height="10" fill="rgb(135, 132, 5)"/><rect x="132" y="161" width="10" height="10" fill="rgb(135, 129, 5)"/><rect x="142" y="161" width="10" height="10" fill="rgb(135, 125, 5)"/><rect x="152" y="161" width="10" height="10" fill="rgb(135, 119, 5)"/><rect x="162" y="161" width="10" height="10" fill="rgb(135, 112, 5)"/><rect x="172" y="161" width="10" height="10" fill="rgb(135, 107, 5)"/><rect x="182" y="161" width="10" height="10" fill="rgb(137, 105, 5)"/><rect x="192" y="161" width="10" height="10" fill="rgb(137, 104, 5)"/><rect x="202" y="161" width="10" height="10" fill="rgb(137, 104, 5)"/><rect x="212" y="161" width="10" height="10" fill="rgb(137, 105, 5)"/><rect x="222" y="161" width="10" height="10" fill="rgb(137, 105, 5)"/><rect x="232" y="161" width="10" height="10" fill="rgb(137, 104, 5)"/><rect x="242" y="161" width="10" height="10" fill="rgb(137, 104, 5)"/><rect x="252" y="161" width="10" height="10" fill="rgb(137, 104, 5)"/><rect x="262" y="161" width="10" height="10" fill="rgb(137, 104, 5)"/><rect x="272" y="161" width="10" height="10" fill="rgb(136, 105, 5)"/><rect x="282" y="161" width="10" height="10" fill="rgb(135, 107, 5)"/><rect x="292" y="161" width="10" height="10" fill="rgb(135, 109, 5)"/><rect x="302" y="161" width="10" height="10" fill="rgb(135, 112, 5)"/><rect x="312" y="161" width="10" height="10" fill="rgb(135, 114, 5)"/><rect x="322" y="161" width="10" height="10" fill="rgb(135, 115, 5)"/><rect x="332" y="161" width="10" height="10" fill="rgb(135, 117, 5)"/><rect x="342" y="161" width="10" height="10" fill="rgb(135, 118, 5)"/><rect x="352" y="161" width="10" height="10" fill="rgb(135, 119, 5)"/><rect x="362" y="161" width="10" height="10" fill="rgb(135, 119, 5)"/><rect x="372" y="161" width="10" height="10" fill="rgb(135, 120, 5)"/><rect x="382" y="161" width="10" height="10" fill="rgb(135, 121, 5)"/><rect x="392" y="161" width="10" height="10" fill="rgb(135, 122, 5)"/><rect x="402" y="161" width="10" height="10" fill="rgb(135, 124, 5)"/><rect x="412" y="161" width="10" height="10" fill="rgb(135, 125, 5)"/><rect x="422" y="161" width="10" height="10" fill="rgb(135, 127, 5)"/><rect x="432" y="161" width="10" height="10" fill="rgb(135, 128, 5)"/><rect x="442" y="161" width="10" height="10" fill="rgb(135, 129, 5)"/><rect x="452" y="161" width="10" height="10" fill="rgb(135, 130, 5)"/><rect x="462" y="161" width="10" height="10" fill="rgb(135, 130, 5)"/><rect x="472" y="161" width="10" height="10" fill="rgb(135, 130, 5)"/><rect x="482" y="161" width="10" height="10" fill="rgb(135, 130, 5)"/><rect x="492" y="161" width="10" height="10" fill="rgb(135, 130, 5)"/><rect x="502" y="161" width="10" height="10" fill="rgb(135, 129, 5)"/><rect x="512" y="161" width="10" height="10" fill="rgb(135, 129, 5)"/><rect x="522" y="161" width="10" height="10" fill="rgb(135, 129, 5)"/><rect x="532" y="161" width="10" height="10" fill="rgb(135, 128, 5)"/><rect x="542" y="161" width="10" height="10" fill="rgb(135, 128, 5)"/><rect x="552" y="161" width="10" height="10" fill="rgb(135, 128, 5)"/><rect x="562" y="161" width="10" height="10" fill="rgb(135, 128, 5)"/><rect x="572" y="161" width="10" height="10" fill="rgb(135, 127, 5)"/><rect x="582" y="161" width="10" height="10" fill="rgb(135, 127, 5)"/><rect x="592" y="161" width="10" height="10" fill="rgb(135, 127, 5)"/><rect x="602" y="161" width="10" height="10" fill="rgb(135, 127, 5)"/><rect x="612" y="161" width="10" height="10" fill="rgb(135, 126, 5)"/><rect x="622" y="161" width="10" height="10" fill="rgb(135, 125, 5)"/><rect x="632" y="161" width="10" height="10" fill="rgb(135, 124, 5)"/><rect x="642" y="161" width="10" height="10" fill="rgb(135, 123, 5)"/><rect x="652" y="161" width="10" height="10" fill="rgb(135, 122, 5)"/><rect x="122" y="171" width="10" height="10" fill="rgb(135, 122, 5)"/><rect x="132" y="171" width="10" height="10" fill="rgb(135, 118, 5)"/><rect x="142" y="171" width="10" height="10" fill="rgb(135, 114, 5)"/><rect x="152" y="171" width="10" height="10" fill="rgb(135, 109, 5)"/><rect x="162" y="171" width="10" height="10" fill="rgb(137, 105, 5)"/><rect x="172" y="171" width="10" height="10" fill="rgb(138, 102, 5)"/><rect x="182" y="171" width="10" height="10" fill="rgb(139, 100, 5)"/><rect x="192" y="171" width="10" height="10" fill="rgb(139, 99, 5)"/><rect x="202" y="171" width="10" height="10" fill="rgb(139, 99, 5)"/><rect x="212" y="171" width="10" height="10" fill="rgb(139, 99, 5)"/><rect x="222" y="171" width="10" height="10" fill="rgb(139, 99, 5)"/><rect x="232" y="171" width="10" height="10" fill="rgb(139, 99, 5)"/><rect x="242" y="171" width="10" height="10" fill="rgb(139, 99, 5)"/><rect x="252" y="171" width="10" height="10" fill="rgb(139, 100, 5)"/><rect x="262" y="171" width="10" height="10" fill="rgb(139, 100, 5)"/><rect x="272" y="171" width="10" height="10" fill="rgb(138, 102, 5)"/><rect x="282" y="171" width="10" height="10" fill="rgb(137, 104, 5)"/><rect x="292" y="171" width="10" height="10" fill="rgb(136, 106, 5)"/><rect x="302" y="171" width="10" height="10" fill="rgb(135, 108, 5)"/><rect x="312" y="171" width="10" height="10" fill="rgb(135, 111, 5)"/><rect x="322" y="171" width="10" height="10" fill="rgb(135, 112, 5)"/><rect x="332" y="171" width="10" height="10" fill="rgb(135, 114, 5)"/><rect x="342" y="171" width="10" height="10" fill="rgb(135, 115, 5)"/><rect x="352" y="171" width="10" height="10" fill="rgb(135, 115, 5)"/><rect x="362" y="171" width="10" height="10" fill="rgb(135, 116, 5)"/><rect x="372" y="171" width="10" height="10" fill="rgb(135, 117, 5)"/><rect x="382" y="171" width="10" height="10" fill="rgb(135, 118, 5)"/><rect x="392" y="171" width="10" height="10" fill="rgb(135, 120, 5)"/><rect x="402" y="171" width="10" height="10" fill="rgb(135, 121, 5)"/><rect x="412" y="171" width="10" height="10" fill="rgb(135, 123, 5)"/><rect x="422" y="171" width="10" height="10" fill="rgb(135, 125, 5)"/><rect x="432" y="171" width="10" height="10" fill="rgb(135, 126, 5)"/><rect x="442" y="171" width="10" height="10" fill="rgb(135, 127, 5)"/><rect x="452" y="171" width="10" height="10" fill="rgb(135, 127, 5)"/><rect x="462" y="171" width="10" height="10" fill="rgb(135, 127, 5)"/><rect x="472" y="171" width="10" height="10" fill="rgb(135, 127, 5)"/><rect x="482" y="171" width="10" height="10" fill="rgb(135, 127, 5)"/><rect x="492" y="171" width="10" height="10" fill="rgb(135, 126, 5)"/><rect x="502" y="171" width="10" height="10" fill="rgb(135, 126, 5)"/><rect x="512" y="171" width="10" height="10" fill="rgb(135, 125, 5)"/><rect x="522" y="171" width="10" height="10" fill="rgb(135, 125, 5)"/><rect x="532" y="171" width="10" height="10" fill="rgb(135, 124, 5)"/><rect x="542" y="171" width="10" height="10" fill="rgb(135, 124, 5)"/><rect x="552" y="171" width="10" height="10" fill="rgb(135, 123, 5)"/><rect x="562" y="171" width="10" height="10" fill="rgb(135, 123, 5)"/><rect x="572" y="171" width="10" height="10" fill="rgb(135, 123, 5)"/><rect x="582" y="171" width="10" height="10" fill="rgb(135, 122, 5)"/><rect x="592" y="171" width="10" height="10" fill="rgb(135, 122, 5)"/><rect x="602" y="171" width="10" height="10" fill="rgb(135, 121, 5)"/><rect x="612" y="171" width="10" height="10" fill="rgb(135, 121, 5)"/><rect x="622" y="171" width="10" height="10" fill="rgb(135, 120, 5)"/><rect x="632" y="171" width="10" height="10" fill="rgb(135, 119, 5)"/><rect x="642" y="171" width="10" height="10" fill="rgb(135, 118, 5)"/><rect x="652" y="171" width="10" height="10" fill="rgb(135, 117, 5)"/><rect x="122" y="181" width="10" height="10" fill="rgb(135, 113, 5)"/><rect x="132" y="181" width="10" height="10" fill="rgb(135, 108, 5)"/><rect x="142" y="181" width="10" height="10" fill="rgb(137, 104, 5)"/><rect x="152" y="181" width="10" height="10" fill="rgb(139, 101, 5)"/><rect x="162" y="181" width="10" height="10" fill="rgb(139, 98, 5)"/><rect x="172" y="181" width="10" height="10" fill="rgb(139, 96, 5)"/><rect x="182" y="181" width="10" height="10" fill="rgb(138, 95, 5)"/><rect x="192" y="181" width="10" height="10" fill="rgb(138, 94, 5)"/><rect x="202" y="181" width="10" height="10" fill="rgb(138, 94, 5)"/><rect x="212" y="181" width="10" height="10" fill="rgb(138, 94, 5)"/><rect x="222" y="181" width="10" height="10" fill="rgb(138, 94, 5)"/><rect x="232" y="181" width="10" height="10" fill="rgb(138, 95, 5)"/><rect x="242" y="181" width="10" height="10" fill="rgb(138, 95, 5)"/><rect x="252" y="181" width="10" height="10" fill="rgb(138, 96, 5)"/><rect x="262" y="181" width="10" height="10" fill="rgb(139, 97, 5)"/><rect x="272" y="181" width="10" height="10" fill="rgb(139, 99, 5)"/><rect x="282" y="181" width="10" height="10" fill="rgb(138, 101, 5)"/><rect x="292" y="181" width="10" height="10" fill="rgb(137, 103, 5)"/><rect x="302" y="181" width="10" height="10" fill="rgb(136, 106, 5)"/><rect x="312" y="181" width="10" height="10" fill="rgb(135, 108, 5)"/><rect x="322" y="181" width="10" height="10" fill="rgb(135, 109, 5)"/><rect x="332" y="181" width="10" height="10" fill="rgb(135, 110, 5)"/><rect x="342" y="181" width="10" height="10" fill="rgb(135, 111, 5)"/><rect x="352" y="181" width="10" height="10" fill="rgb(135, 112, 5)"/><rect x="362" y="181" width="10" height="10" fill="rgb(135, 112, 5)"/><rect x="372" y="181" width="10" height="10" fill="rgb(135, 113, 5)"/><rect x="382" y="181" width="10" height="10" fill="rgb(135, 115, 5)"/><rect x="392" y="181" width="10" height="10" fill="rgb(135, 117, 5)"/><rect x="402" y="181" width="10" height="10" fill="rgb(135, 119, 5)"/><rect x="412" y="181" width="10" height="10" fill="rgb(135, 121, 5)"/><rect x="422" y="181" width="10" height="10" fill="rgb(135, 122, 5)"/><rect x="432" y="181" width="10" height="10" fill="rgb(135, 124, 5)"/><rect x="442" y="181" width="10" height="10" fill="rgb(135, 124, 5)"/><rect x="452" y="181" width="10" height="10" fill="rgb(135, 125, 5)"/><rect x="462" y="181" width="10" height="10" fill="rgb(135, 124, 5)"/><rect x="472" y="181" width="10" height="10" fill="rgb(135, 124, 5)"/><rect x="482" y="181" width="10" height="10" fill="rgb(135, 123, 5)"/><rect x="492" y="181" width="10" height="10" fill="rgb(135, 122, 5)"/><rect x="502" y="181" width="10" height="10" fill="rgb(135, 122, 5)"/><rect x="512" y="181" width="10" height="10" fill="rgb(135, 121, 5)"/><rect x="522" y="181" width="10" height="10" fill="rgb(135, 120, 5)"/><rect x="532" y="181" width="10" height="10" fill="rgb(135, 119, 5)"/><rect x="542" y="181" width="10" height="10" fill="rgb(135, 119, 5)"/><rect x="552" y="181" width="10" height="10" fill="rgb(135, 118, 5)"/><rect x="562" y="181" width="10" height="10" fill="rgb(135, 118, 5)"/><rect x="572" y="181" width="10" height="10" fill="rgb(135, 117, 5)"/><rect x="582" y="181" width="10" height="10" fill="rgb(135, 117, 5)"/><rect x="592" y="181" width="10" height="10" fill="rgb(135, 116, 5)"/><rect x="602" y="181" width="10" height="10" fill="rgb(135, 116, 5)"/><rect x="612" y="181" width="10" height="10" fill="rgb(135, 115, 5)"/><rect x="622" y="181" width="10" height="10" fill="rgb(135, 114, 5)"/><rect x="632" y="181" width="10" height="10" fill="rgb(135, 113, 5)"/><rect x="642" y="181" width="10" height="10" fill="rgb(135, 112, 5)"/><rect x="652" y="181" width="10" height="10" fill="rgb(135, 111, 5)"/><rect x="122" y="191" width="10" height="10" fill="rgb(137, 105, 5)"/><rect x="132" y="191" width="10" height="10" fill="rgb(139, 101, 5)"/><rect x="142" y="191" width="10" height="10" fill="rgb(139, 97, 5)"/><rect x="152" y="191" width="10" height="10" fill="rgb(138, 95, 5)"/><rect x="162" y="191" width="10" height="10" fill="rgb(138, 93, 5)"/><rect x="172" y="191" width="10" height="10" fill="rgb(138, 92, 5)"/><rect x="182" y="191" width="10" height="10" fill="rgb(138, 91, 5)"/><rect x="192" y="191" width="10" height="10" fill="rgb(138, 91, 5)"/><rect x="202" y="191" width="10" height="10" fill="rgb(138, 91, 5)"/><rect x="212" y="191" width="10" height="10" fill="rgb(138, 91, 5)"/><rect x="222" y="191" width="10" height="10" fill="rgb(138, 91, 5)"/><rect x="232" y="191" width="10" height="10" fill="rgb(138, 92, 5)"/><rect x="242" y="191" width="10" height="10" fill="rgb(138, 92, 5)"/><rect x="252" y="191" width="10" height="10" fill="rgb(138, 93, 5)"/><rect x="262" y="191" width="10" height="10" fill="rgb(138, 94, 5)"/><rect x="272" y="191" width="10" height="10" fill="rgb(139, 96, 5)"/><rect x="282" y="191" width="10" height="10" fill="rgb(139, 98, 5)"/><rect x="292" y="191" width="10" height="10" fill="rgb(139, 101, 5)"/><rect x="302" y="191" width="10" height="10" fill="rgb(138, 103, 5)"/><rect x="312" y="191" width="10" height="10" fill="rgb(137, 105, 5)"/><rect x="322" y="191" width="10" height="10" fill="rgb(136, 106, 5)"/><rect x="332" y="191" width="10" height="10" fill="rgb(136, 107, 5)"/><rect x="342" y="191" width="10" height="10" fill="rgb(136, 107, 5)"/><rect x="352" y="191" width="10" height="10" fill="rgb(135, 107, 5)"/><rect x="362" y="191" width="10" height="10" fill="rgb(135, 108, 5)"/><rect x="372" y="191" width="10" height="10" fill="rgb(135, 109, 5)"/><rect x="382" y="191" width="10" height="10" fill="rgb(135, 111, 5)"/><rect x="392" y="191" width="10" height="10" fill="rgb(135, 113, 5)"/><rect x="402" y="191" width="10" height="10" fill="rgb(135, 115, 5)"/><rect x="412" y="191" width="10" height="10" fill="rgb(135, 117, 5)"/><rect x="422" y="191" width="10" height="10" fill="rgb(135, 119, 5)"/><rect x="432" y="191" width="10" height="10" fill="rgb(135, 121, 5)"/><rect x="442" y="191" width="10" height="10" fill="rgb(135, 121, 5)"/><rect x="452" y="191" width="10" height="10" fill="rgb(135, 121, 5)"/><rect x="462" y="191" width="10" height="10" fill="rgb(135, 121, 5)"/><rect x="472" y="191" width="10" height="10" fill="rgb(135, 120, 5)"/><rect x="482" y="191" width="10" height="10" fill="rgb(135, 119, 5)"/><rect x="492" y="191" width="10" height="10" fill="rgb(135, 118, 5)"/><rect x="502" y="191" width="10" height="10" fill="rgb(135, 117, 5)"/><rect x="512" y="191" width="10" height="10" fill="rgb(135, 116, 5)"/><rect x="522" y="191" width="10" height="10" fill="rgb(135, 115, 5)"/><rect x="532" y="191" width="10" height="10" fill="rgb(135, 114, 5)"/><rect x="542" y="191" width="10" height="10" fill="rgb(135, 114, 5)"/><rect x="552" y="191" width="10" height="10" fill="rgb(135, 113, 5)"/><rect x="562" y="191" width="10" height="10" fill="rgb(135, 113, 5)"/><rect x="572" y="191" width="10" height="10" fill="rgb(135, 112, 5)"/><rect x="582" y="191" width="10" height="10" fill="rgb(135, 111, 5)"/><rect x="592" y="191" width="10" height="10" fill="rgb(135, 111, 5)"/><rect x="602" y="191" width="10" height="10" fill="rgb(135, 110, 5)"/><rect x="612" y="191" width="10" height="10" fill="rgb(135, 109, 5)"/><rect x="622" y="191" width="10" height="10" fill="rgb(135, 109, 5)"/><rect x="632" y="191" width="10" height="10" fill="rgb(135, 108, 5)"/><rect x="642" y="191" width="10" height="10" fill="rgb(136, 107, 5)"/><rect x="652" y="191" width="10" height="10" fill="rgb(136, 106, 5)"/><rect x="122" y="201" width="10" height="10" fill="rgb(139, 98, 5)"/><rect x="132" y="201" width="10" height="10" fill="rgb(138, 95, 5)"/><rect x="142" y="201" width="10" height="10" fill="rgb(138, 92, 5)"/><rect x="152" y="201" width="10" height="10" fill="rgb(138, 91, 5)"/><rect x="162" y="201" width="10" height="10" fill="rgb(138, 90, 5)"/><rect x="172" y="201" width="10" height="10" fill="rgb(139, 90, 5)"/><rect x="182" y="201" width="10" height="10" fill="rgb(139, 90, 5)"/><rect x="192" y="201" width="10" height="10" fill="rgb(139, 90, 5)"/><rect x="202" y="201" width="10" height="10" fill="rgb(139, 90, 5)"/><rect x="212" y="201" width="10" height="10" fill="rgb(139, 90, 5)"/><rect x="222" y="201" width="10" height="10" fill="rgb(139, 90, 5)"/><rect x="232" y="201" width="10" height="10" fill="rgb(139, 90, 5)"/><rect x="242" y="201" width="10" height="10" fill="rgb(138, 91, 5)"/><rect x="252" y="201" width="10" height="10" fill="rgb(138, 91, 5)"/><rect x="262" y="201" width="10" height="10" fill="rgb(138, 92, 5)"/><rect x="272" y="201" width="10" height="10" fill="rgb(138, 93, 5)"/><rect x="282" y="201" width="10" height="10" fill="rgb(138, 95, 5)"/><rect x="292" y="201" width="10" height="10" fill="rgb(139, 97, 5)"/><rect x="302" y="201" width="10" height="10" fill="rgb(139, 100, 5)"/><rect x="312" y="201" width="10" height="10" fill="rgb(138, 101, 5)"/><rect x="322" y="201" width="10" height="10" fill="rgb(138, 102, 5)"/><rect x="332" y="201" width="10" height="10" fill="rgb(138, 102, 5)"/><rect x="342" y="201" width="10" height="10" fill="rgb(138, 102, 5)"/><rect x="352" y="201" width="10" height="10" fill="rgb(138, 103, 5)"/><rect x="362" y="201" width="10" height="10" fill="rgb(137, 103, 5)"/><rect x="372" y="201" width="10" height="10" fill="rgb(137, 104, 5)"/><rect x="382" y="201" width="10" height="10" fill="rgb(136, 106, 5)"/><rect x="392" y="201" width="10" height="10" fill="rgb(135, 108, 5)"/><rect x="402" y="201" width="10" height="10" fill="rgb(135, 110, 5)"/><rect x="412" y="201" width="10" height="10" fill="rgb(135, 113, 5)"/><rect x="422" y="201" width="10" height="10" fill="rgb(135, 115, 5)"/><rect x="432" y="201" width="10" height="10" fill="rgb(135, 117, 5)"/><rect x="442" y="201" width="10" height="10" fill="rgb(135, 117, 5)"/><rect x="452" y="201" width="10" height="10" fill="rgb(135, 117, 5)"/><rect x="462" y="201" width="10" height="10" fill="rgb(135, 116, 5)"/><rect x="472" y="201" width="10" height="10" fill="rgb(135, 115, 5)"/><rect x="482" y="201" width="10" height="10" fill="rgb(135, 114, 5)"/><rect x="492" y="201" width="10" height="10" fill="rgb(135, 113, 5)"/><rect x="502" y="201" width="10" height="10" fill="rgb(135, 112, 5)"/><rect x="512" y="201" width="10" height="10" fill="rgb(135, 111, 5)"/><rect x="522" y="201" width="10" height="10" fill="rgb(135, 110, 5)"/><rect x="532" y="201" width="10" height="10" fill="rgb(135, 109, 5)"/><rect x="542" y="201" width="10" height="10" fill="rgb(135, 108, 5)"/><rect x="552" y="201" width="10" height="10" fill="rgb(135, 108, 5)"/><rect x="562" y="201" width="10" height="10" fill="rgb(136, 107, 5)"/><rect x="572" y="201" width="10" height="10" fill="rgb(136, 106, 5)"/><rect x="582" y="201" width="10" height="10" fill="rgb(136, 106, 5)"/><rect x="592" y="201" width="10" height="10" fill="rgb(136, 105, 5)"/><rect x="602" y="201" width="10" height="10" fill="rgb(137, 105, 5)"/><rect x="612" y="201" width="10" height="10" fill="rgb(137, 104, 5)"/><rect x="622" y="201" width="10" height="10" fill="rgb(137, 103, 5)"/><rect x="632" y="201" width="10" height="10" fill="rgb(138, 103, 5)"/><rect x="642" y="201" width="10" height="10" fill="rgb(138, 102, 5)"/><rect x="652" y="201" width="10" height="10" fill="rgb(139, 101, 5)"/><rect x="122" y="211" width="10" height="10" fill="rgb(138, 93, 5)"/><rect x="132" y="211" width="10" height="10" fill="rgb(138, 91, 5)"/><rect x="142" y="211" width="10" height="10" fill="rgb(139, 90, 5)"/><rect x="152" y="211" width="10" height="10" fill="rgb(139, 89, 5)"/><rect x="162" y="211" width="10" height="10" fill="rgb(139, 89, 5)"/><rect x="172" y="211" width="10" height="10" fill="rgb(139, 89, 5)"/><rect x="182" y="211" width="10" height="10" fill="rgb(139, 88, 5)"/><rect x="192" y="211" width="10" height="10" fill="rgb(139, 88, 5)"/><rect x="202" y="211" width="10" height="10" fill="rgb(139, 89, 5)"/><rect x="212" y="211" width="10" height="10" fill="rgb(139, 89, 5)"/><rect x="222" y="211" width="10" height="10" fill="rgb(139, 89, 5)"/><rect x="232" y="211" width="10" height="10" fill="rgb(139, 89, 5)"/><rect x="242" y="211" width="10" height="10" fill="rgb(139, 89, 5)"/><rect x="252" y="211" width="10" height="10" fill="rgb(139, 90, 5)"/><rect x="262" y="211" width="10" height="10" fill="rgb(138, 91, 5)"/><rect x="272" y="211" width="10" height="10" fill="rgb(138, 91, 5)"/><rect x="282" y="211" width="10" height="10" fill="rgb(138, 92, 5)"/><rect x="292" y="211" width="10" height="10" fill="rgb(138, 94, 5)"/><rect x="302" y="211" width="10" height="10" fill="rgb(138, 96, 5)"/><rect x="312" y="211" width="10" height="10" fill="rgb(139, 97, 5)"/><rect x="322" y="211" width="10" height="10" fill="rgb(139, 97, 5)"/><rect x="332" y="211" width="10" height="10" fill="rgb(139, 97, 5)"/><rect x="342" y="211" width="10" height="10" fill="rgb(139, 97, 5)"/><rect x="352" y="211" width="10" height="10" fill="rgb(139, 97, 5)"/><rect x="362" y="211" width="10" height="10" fill="rgb(139, 97, 5)"/><rect x="372" y="211" width="10" height="10" fill="rgb(139, 98, 5)"/><rect x="382" y="211" width="10" height="10" fill="rgb(139, 100, 5)"/><rect x="392" y="211" width="10" height="10" fill="rgb(138, 102, 5)"/><rect x="402" y="211" width="10" height="10" fill="rgb(137, 105, 5)"/><rect x="412" y="211" width="10" height="10" fill="rgb(135, 107, 5)"/><rect x="422" y="211" width="10" height="10" fill="rgb(135, 110, 5)"/><rect x="432" y="211" width="10" height="10" fill="rgb(135, 112, 5)"/><rect x="442" y="211" width="10" height="10" fill="rgb(135, 112, 5)"/><rect x="452" y="211" width="10" height="10" fill="rgb(135, 112, 5)"/><rect x="462" y="211" width="10" height="10" fill="rgb(135, 111, 5)"/><rect x="472" y="211" width="10" height="10" fill="rgb(135, 109, 5)"/><rect x="482" y="211" width="10" height="10" fill="rgb(135, 108, 5)"/><rect x="492" y="211" width="10" height="10" fill="rgb(135, 107, 5)"/><rect x="502" y="211" width="10" height="10" fill="rgb(136, 106, 5)"/><rect x="512" y="211" width="10" height="10" fill="rgb(136, 105, 5)"/><rect x="522" y="211" width="10" height="10" fill="rgb(137, 104, 5)"/><rect x="532" y="211" width="10" height="10" fill="rgb(137, 104, 5)"/><rect x="542" y="211" width="10" height="10" fill="rgb(138, 103, 5)"/><rect x="552" y="211" width="10" height="10" fill="rgb(138, 102, 5)"/><rect x="562" y="211" width="10" height="10" fill="rgb(138, 102, 5)"/><rect x="572" y="211" width="10" height="10" fill="rgb(138, 101, 5)"/><rect x="582" y="211" width="10" height="10" fill="rgb(139, 101, 5)"/><rect x="592" y="211" width="10" height="10" fill="rgb(139, 100, 5)"/><rect x="602" y="211" width="10" height="10" fill="rgb(139, 99, 5)"/><rect x="612" y="211" width="10" height="10" fill="rgb(139, 99, 5)"/><rect x="622" y="211" width="10" height="10" fill="rgb(139, 98, 5)"/><rect x="632" y="211" width="10" height="10" fill="rgb(139, 97, 5)"/><rect x="642" y="211" width="10" height="10" fill="rgb(139, 96, 5)"/><rect x="652" y="211" width="10" height="10" fill="rgb(138, 95, 5)"/><rect x="122" y="221" width="10" height="10" fill="rgb(139, 90, 5)"/><rect x="132" y="221" width="10" height="10" fill="rgb(139, 89, 5)"/><rect x="142" y="221" width="10" height="10" fill="rgb(139, 89, 5)"/><rect x="152" y="221" width="10" height="10" fill="rgb(139, 88, 5)"/><rect x="162" y="221" width="10" height="10" fill="rgb(139, 88, 5)"/><rect x="172" y="221" width="10" height="10" fill="rgb(139, 87, 5)"/><rect x="182" y="221" width="10" height="10" fill="rgb(139, 87, 5)"/><rect x="192" y="221" width="10" height="10" fill="rgb(139, 87, 5)"/><rect x="202" y="221" width="10" height="10" fill="rgb(139, 88, 5)"/><rect x="212" y="221" width="10" height="10" fill="rgb(139, 88, 5)"/><rect x="222" y="221" width="10" height="10" fill="rgb(139, 88, 5)"/><rect x="232" y="221" width="10" height="10" fill="rgb(139, 88, 5)"/><rect x="242" y="221" width="10" height="10" fill="rgb(139, 88, 5)"/><rect x="252" y="221" width="10" height="10" fill="rgb(139, 89, 5)"/><rect x="262" y="221" width="10" height="10" fill="rgb(139, 89, 5)"/><rect x="272" y="221" width="10" height="10" fill="rgb(139, 90, 5)"/><rect x="282" y="221" width="10" height="10" fill="rgb(138, 90, 5)"/><rect x="292" y="221" width="10" height="10" fill="rgb(138, 91, 5)"/><rect x="302" y="221" width="10" height="10" fill="rgb(138, 92, 5)"/><rect x="312" y="221" width="10" height="10" fill="rgb(138, 92, 5)"/><rect x="322" y="221" width="10" height="10" fill="rgb(138, 92, 5)"/><rect x="332" y="221" width="10" height="10" fill="rgb(138, 92, 5)"/><rect x="342" y="221" width="10" height="10" fill="rgb(138, 92, 5)"/><rect x="352" y="221" width="10" height="10" fill="rgb(138, 91, 5)"/><rect x="362" y="221" width="10" height="10" fill="rgb(138, 92, 5)"/><rect x="372" y="221" width="10" height="10" fill="rgb(138, 92, 5)"/><rect x="382" y="221" width="10" height="10" fill="rgb(138, 93, 5)"/><rect x="392" y="221" width="10" height="10" fill="rgb(138, 96, 5)"/><rect x="402" y="221" width="10" height="10" fill="rgb(139, 98, 5)"/><rect x="412" y="221" width="10" height="10" fill="rgb(138, 101, 5)"/><rect x="422" y="221" width="10" height="10" fill="rgb(137, 104, 5)"/><rect x="432" y="221" width="10" height="10" fill="rgb(136, 105, 5)"/><rect x="442" y="221" width="10" height="10" fill="rgb(136, 106, 5)"/><rect x="452" y="221" width="10" height="10" fill="rgb(136, 105, 5)"/><rect x="462" y="221" width="10" height="10" fill="rgb(137, 104, 5)"/><rect x="472" y="221" width="10" height="10" fill="rgb(137, 103, 5)"/><rect x="482" y="221" width="10" height="10" fill="rgb(138, 102, 5)"/><rect x="492" y="221" width="10" height="10" fill="rgb(138, 101, 5)"/><rect x="502" y="221" width="10" height="10" fill="rgb(139, 100, 5)"/><rect x="512" y="221" width="10" height="10" fill="rgb(139, 99, 5)"/><rect x="522" y="221" width="10" height="10" fill="rgb(139, 99, 5)"/><rect x="532" y="221" width="10" height="10" fill="rgb(139, 98, 5)"/><rect x="542" y="221" width="10" height="10" fill="rgb(139, 97, 5)"/><rect x="552" y="221" width="10" height="10" fill="rgb(139, 97, 5)"/><rect x="562" y="221" width="10" height="10" fill="rgb(139, 96, 5)"/><rect x="572" y="221" width="10" height="10" fill="rgb(138, 95, 5)"/><rect x="582" y="221" width="10" height="10" fill="rgb(138, 95, 5)"/><rect x="592" y="221" width="10" height="10" fill="rgb(138, 94, 5)"/><rect x="602" y="221" width="10" height="10" fill="rgb(138, 94, 5)"/><rect x="612" y="221" width="10" height="10" fill="rgb(138, 93, 5)"/><rect x="622" y="221" width="10" height="10" fill="rgb(138, 92, 5)"/><rect x="632" y="221" width="10" height="10" fill="rgb(138, 92, 5)"/><rect x="642" y="221" width="10" height="10" fill="rgb(138, 91, 5)"/><rect x="652" y="221" width="10" height="10" fill="rgb(138, 91, 5)"/><rect x="122" y="231" width="10" height="10" fill="rgb(139, 88, 5)"/><rect x="132" y="231" width="10" height="10" fill="rgb(139, 87, 5)"/><rect x="142" y="231" width="10" height="10" fill="rgb(139, 87, 5)"/><rect x="152" y="231" width="10" height="10" fill="rgb(140, 87, 5)"/><rect x="162" y="231" width="10" height="10" fill="rgb(140, 86, 5)"/><rect x="172" y="231" width="10" height="10" fill="rgb(140, 86, 5)"/><rect x="182" y="231" width="10" height="10" fill="rgb(140, 86, 5)"/><rect x="192" y="231" width="10" height="10" fill="rgb(140, 86, 5)"/><rect x="202" y="231" width="10" height="10" fill="rgb(140, 87, 5)"/><rect x="212" y="231" width="10" height="10" fill="rgb(140, 87, 5)"/><rect x="222" y="231" width="10" height="10" fill="rgb(139, 87, 5)"/><rect x="232" y="231" width="10" height="10" fill="rgb(139, 87, 5)"/><rect x="242" y="231" width="10" height="10" fill="rgb(139, 87, 5)"/><rect x="252" y="231" width="10" height="10" fill="rgb(139, 88, 5)"/><rect x="262" y="231" width="10" height="10" fill="rgb(139, 88, 5)"/><rect x="272" y="231" width="10" height="10" fill="rgb(139, 88, 5)"/><rect x="282" y="231" width="10" height="10" fill="rgb(139, 89, 5)"/><rect x="292" y="231" width="10" height="10" fill="rgb(139, 89, 5)"/><rect x="302" y="231" width="10" height="10" fill="rgb(139, 89, 5)"/><rect x="312" y="231" width="10" height="10" fill="rgb(139, 89, 5)"/><rect x="322" y="231" width="10" height="10" fill="rgb(139, 89, 5)"/><rect x="332" y="231" width="10" height="10" fill="rgb(139, 89, 5)"/><rect x="342" y="231" width="10" height="10" fill="rgb(139, 89, 5)"/><rect x="352" y="231" width="10" height="10" fill="rgb(139, 88, 5)"/><rect x="362" y="231" width="10" height="10" fill="rgb(139, 88, 5)"/><rect x="372" y="231" width="10" height="10" fill="rgb(139, 89, 5)"/><rect x="382" y="231" width="10" height="10" fill="rgb(139, 89, 5)"/><rect x="392" y="231" width="10" height="10" fill="rgb(138, 90, 5)"/><rect x="402" y="231" width="10" height="10" fill="rgb(138, 92, 5)"/><rect x="412" y="231" width="10" height="10" fill="rgb(138, 94, 5)"/><rect x="422" y="231" width="10" height="10" fill="rgb(139, 96, 5)"/><rect x="432" y="231" width="10" height="10" fill="rgb(139, 98, 5)"/><rect x="442" y="231" width="10" height="10" fill="rgb(139, 98, 5)"/><rect x="452" y="231" width="10" height="10" fill="rgb(139, 98, 5)"/><rect x="462" y="231" width="10" height="10" fill="rgb(139, 97, 5)"/><rect x="472" y="231" width="10" height="10" fill="rgb(139, 97, 5)"/><rect x="482" y="231" width="10" height="10" fill="rgb(138, 96, 5)"/><rect x="492" y="231" width="10" height="10" fill="rgb(138, 95, 5)"/><rect x="502" y="231" width="10" height="10" fill="rgb(138, 94, 5)"/><rect x="512" y="231" width="10" height="10" fill="rgb(138, 93, 5)"/><rect x="522" y="231" width="10" height="10" fill="rgb(138, 93, 5)"/><rect x="532" y="231" width="10" height="10" fill="rgb(138, 92, 5)"/><rect x="542" y="231" width="10" height="10" fill="rgb(138, 92, 5)"/><rect x="552" y="231" width="10" height="10" fill="rgb(138, 91, 5)"/><rect x="562" y="231" width="10" height="10" fill="rgb(138, 91, 5)"/><rect x="572" y="231" width="10" height="10" fill="rgb(138, 91, 5)"/><rect x="582" y="231" width="10" height="10" fill="rgb(138, 91, 5)"/><rect x="592" y="231" width="10" height="10" fill="rgb(138, 90, 5)"/><rect x="602" y="231" width="10" height="10" fill="rgb(139, 90, 5)"/><rect x="612" y="231" width="10" height="10" fill="rgb(139, 90, 5)"/><rect x="622" y="231" width="10" height="10" fill="rgb(139, 90, 5)"/><rect x="632" y="231" width="10" height="10" fill="rgb(139, 89, 5)"/><rect x="642" y="231" width="10" height="10" fill="rgb(139, 89, 5)"/><rect x="652" y="231" width="10" height="10" fill="rgb(139, 89, 5)"/><rect x="122" y="241" width="10" height="10" fill="rgb(140, 86, 5)"/><rect x="132" y="241" width="10" height="10" fill="rgb(140, 86, 5)"/><rect x="142" y="241" width="10" height="10" fill="rgb(140, 85, 5)"/><rect x="152" y="241" width="10" height="10" fill="rgb(140, 85, 5)"/><rect x="162" y="241" width="10" height="10" fill="rgb(140, 85, 5)"/><rect x="172" y="241" width="10" height="10" fill="rgb(140, 85, 5)"/><rect x="182" y="241" width="10" height="10" fill="rgb(140, 85, 5)"/><rect x="192" y="241" width="10" height="10" fill="rgb(140, 85, 5)"/><rect x="202" y="241" width="10" height="10" fill="rgb(140, 86, 5)"/><rect x="212" y="241" width="10" height="10" fill="rgb(140, 86, 5)"/><rect x="222" y="241" width="10" height="10" fill="rgb(140, 86, 5)"/><rect x="232" y="241" width="10" height="10" fill="rgb(140, 86, 5)"/><rect x="242" y="241" width="10" height="10" fill="rgb(140, 86, 5)"/><rect x="252" y="241" width="10" height="10" fill="rgb(140, 86, 5)"/><rect x="262" y="241" width="10" height="10" fill="rgb(140, 87, 5)"/><rect x="272" y="241" width="10" height="10" fill="rgb(139, 87, 5)"/><rect x="282" y="241" width="10" height="10" fill="rgb(139, 87, 5)"/><rect x="292" y="241" width="10" height="10" fill="rgb(139, 87, 5)"/><rect x="302" y="241" width="10" height="10" fill="rgb(139, 87, 5)"/><rect x="312" y="241" width="10" height="10" fill="rgb(139, 87, 5)"/><rect x="322" y="241" width="10" height="10" fill="rgb(140, 87, 5)"/><rect x="332" y="241" width="10" height="10" fill="rgb(140, 86, 5)"/><rect x="342" y="241" width="10" height="10" fill="rgb(140, 86, 5)"/><rect x="352" y="241" width="10" height="10" fill="rgb(140, 85, 5)"/><rect x="362" y="241" width="10" height="10" fill="rgb(140, 85, 5)"/><rect x="372" y="241" width="10" height="10" fill="rgb(140, 85, 5)"/><rect x="382" y="241" width="10" height="10" fill="rgb(140, 86, 5)"/><rect x="392" y="241" width="10" height="10" fill="rgb(139, 87, 5)"/><rect x="402" y="241" width="10" height="10" fill="rgb(139, 88, 5)"/><rect x="412" y="241" width="10" height="10" fill="rgb(139, 89, 5)"/><rect x="422" y="241" width="10" height="10" fill="rgb(139, 90, 5)"/><rect x="432" y="241" width="10" height="10" fill="rgb(138, 91, 5)"/><rect x="442" y="241" width="10" height="10" fill="rgb(138, 91, 5)"/><rect x="452" y="241" width="10" height="10" fill="rgb(138, 91, 5)"/><rect x="462" y="241" width="10" height="10" fill="rgb(138, 91, 5)"/><rect x="472" y="241" width="10" height="10" fill="rgb(138, 91, 5)"/><rect x="482" y="241" width="10" height="10" fill="rgb(138, 90, 5)"/><rect x="492" y="241" width="10" height="10" fill="rgb(139, 90, 5)"/><rect x="502" y="241" width="10" height="10" fill="rgb(139, 90, 5)"/><rect x="512" y="241" width="10" height="10" fill="rgb(139, 90, 5)"/><rect x="522" y="241" width="10" height="10" fill="rgb(139, 89, 5)"/><rect x="532" y="241" width="10" height="10" fill="rgb(139, 89, 5)"/><rect x="542" y="241" width="10" height="10" fill="rgb(139, 89, 5)"/><rect x="552" y="241" width="10" height="10" fill="rgb(139, 89, 5)"/><rect x="562" y="241" width="10" height="10" fill="rgb(139, 89, 5)"/><rect x="572" y="241" width="10" height="10" fill="rgb(139, 88, 5)"/><rect x="582" y="241" width="10" height="10" fill="rgb(139, 88, 5)"/><rect x="592" y="241" width="10" height="10" fill="rgb(139, 88, 5)"/><rect x="602" y="241" width="10" height="10" fill="rgb(139, 88, 5)"/><rect x="612" y="241" width="10" height="10" fill="rgb(139, 87, 5)"/><rect x="622" y="241" width="10" height="10" fill="rgb(139, 87, 5)"/><rect x="632" y="241" width="10" height="10" fill="rgb(139, 87, 5)"/><rect x="642" y="241" width="10" height="10" fill="rgb(140, 87, 5)"/><rect x="652" y="241" width="10" height="10" fill="rgb(140, 86, 5)"/><rect x="122" y="251" width="10" height="10" fill="rgb(140, 84, 5)"/><rect x="132" y="251" width="10" height="10" fill="rgb(140, 83, 5)"/><rect x="142" y="251" width="10" height="10" fill="rgb(140, 83, 5)"/><rect x="152" y="251" width="10" height="10" fill="rgb(140, 83, 5)"/><rect x="162" y="251" width="10" height="10" fill="rgb(140, 83, 5)"/><rect x="172" y="251" width="10" height="10" fill="rgb(140, 83, 5)"/><rect x="182" y="251" width="10" height="10" fill="rgb(140, 83, 5)"/><rect x="192" y="251" width="10" height="10" fill="rgb(140, 84, 5)"/><rect x="202" y="251" width="10" height="10" fill="rgb(140, 84, 5)"/><rect x="212" y="251" width="10" height="10" fill="rgb(140, 85, 5)"/><rect x="222" y="251" width="10" height="10" fill="rgb(140, 85, 5)"/><rect x="232" y="251" width="10" height="10" fill="rgb(140, 85, 5)"/><rect x="242" y="251" width="10" height="10" fill="rgb(140, 85, 5)"/><rect x="252" y="251" width="10" height="10" fill="rgb(140, 85, 5)"/><rect x="262" y="251" width="10" height="10" fill="rgb(140, 85, 5)"/><rect x="272" y="251" width="10" height="10" fill="rgb(140, 85, 5)"/><rect x="282" y="251" width="10" height="10" fill="rgb(140, 85, 5)"/><rect x="292" y="251" width="10" height="10" fill="rgb(140, 85, 5)"/><rect x="302" y="251" width="10" height="10" fill="rgb(140, 85, 5)"/><rect x="312" y="251" width="10" height="10" fill="rgb(140, 84, 5)"/><rect x="322" y="251" width="10" height="10" fill="rgb(140, 83, 5)"/><rect x="332" y="251" width="10" height="10" fill="rgb(140, 83, 5)"/><rect x="342" y="251" width="10" height="10" fill="rgb(140, 82, 5)"/><rect x="352" y="251" width="10" height="10" fill="rgb(140, 81, 5)"/><rect x="362" y="251" width="10" height="10" fill="rgb(140, 81, 5)"/><rect x="372" y="251" width="10" height="10" fill="rgb(140, 81, 5)"/><rect x="382" y="251" width="10" height="10" fill="rgb(140, 81, 5)"/><rect x="392" y="251" width="10" height="10" fill="rgb(140, 83, 5)"/><rect x="402" y="251" width="10" height="10" fill="rgb(140, 84, 5)"/><rect x="412" y="251" width="10" height="10" fill="rgb(140, 85, 5)"/><rect x="422" y="251" width="10" height="10" fill="rgb(140, 86, 5)"/><rect x="432" y="251" width="10" height="10" fill="rgb(139, 87, 5)"/><rect x="442" y="251" width="10" height="10" fill="rgb(139, 87, 5)"/><rect x="452" y="251" width="10" height="10" fill="rgb(139, 87, 5)"/><rect x="462" y="251" width="10" height="10" fill="rgb(139, 87, 5)"/><rect x="472" y="251" width="10" height="10" fill="rgb(139, 87, 5)"/><rect x="482" y="251" width="10" height="10" fill="rgb(139, 87, 5)"/><rect x="492" y="251" width="10" height="10" fill="rgb(139, 87, 5)"/><rect x="502" y="251" width="10" height="10" fill="rgb(139, 87, 5)"/><rect x="512" y="251" width="10" height="10" fill="rgb(140, 87, 5)"/><rect x="522" y="251" width="10" height="10" fill="rgb(140, 86, 5)"/><rect x="532" y="251" width="10" height="10" fill="rgb(140, 86, 5)"/><rect x="542" y="251" width="10" height="10" fill="rgb(140, 86, 5)"/><rect x="552" y="251" width="10" height="10" fill="rgb(140, 86, 5)"/><rect x="562" y="251" width="10" height="10" fill="rgb(140, 86, 5)"/><rect x="572" y="251" width="10" height="10" fill="rgb(140, 86, 5)"/><rect x="582" y="251" width="10" height="10" fill="rgb(140, 85, 5)"/><rect x="592" y="251" width="10" height="10" fill="rgb(140, 85, 5)"/><rect x="602" y="251" width="10" height="10" fill="rgb(140, 85, 5)"/><rect x="612" y="251" width="10" height="10" fill="rgb(140, 85, 5)"/><rect x="622" y="251" width="10" height="10" fill="rgb(140, 84, 5)"/><rect x="632" y="251" width="10" height="10" fill="rgb(140, 84, 5)"/><rect x="642" y="251" width="10" height="10" fill="rgb(140, 84, 5)"/><rect x="652" y="251" width="10" height="10" fill="rgb(140, 83, 5)"/><rect x="122" y="261" width="10" height="10" fill="rgb(140, 81, 5)"/><rect x="132" y="261" width="10" height="10" fill="rgb(140, 80, 5)"/><rect x="142" y="261" width="10" height="10" fill="rgb(140, 80, 5)"/><rect x="152" y="261" width="10" height="10" fill="rgb(140, 80, 5)"/><rect x="162" y="261" width="10" height="10" fill="rgb(140, 80, 5)"/><rect x="172" y="261" width="10" height="10" fill="rgb(140, 81, 5)"/><rect x="182" y="261" width="10" height="10" fill="rgb(140, 81, 5)"/><rect x="192" y="261" width="10" height="10" fill="rgb(140, 82, 5)"/><rect x="202" y="261" width="10" height="10" fill="rgb(140, 82, 5)"/><rect x="212" y="261" width="10" height="10" fill="rgb(140, 83, 5)"/><rect x="222" y="261" width="10" height="10" fill="rgb(140, 83, 5)"/><rect x="232" y="261" width="10" height="10" fill="rgb(140, 83, 5)"/><rect x="242" y="261" width="10" height="10" fill="rgb(140, 83, 5)"/><rect x="252" y="261" width="10" height="10" fill="rgb(140, 83, 5)"/><rect x="262" y="261" width="10" height="10" fill="rgb(140, 83, 5)"/><rect x="272" y="261" width="10" height="10" fill="rgb(140, 82, 5)"/><rect x="282" y="261" width="10" height="10" fill="rgb(140, 82, 5)"/><rect x="292" y="261" width="10" height="10" fill="rgb(140, 82, 5)"/><rect x="302" y="261" width="10" height="10" fill="rgb(140, 81, 5)"/><rect x="312" y="261" width="10" height="10" fill="rgb(140, 81, 5)"/><rect x="322" y="261" width="10" height="10" fill="rgb(140, 80, 5)"/><rect x="332" y="261" width="10" height="10" fill="rgb(140, 79, 5)"/><rect x="342" y="261" width="10" height="10" fill="rgb(140, 78, 5)"/><rect x="352" y="261" width="10" height="10" fill="rgb(140, 77, 5)"/><rect x="362" y="261" width="10" height="10" fill="rgb(140, 76, 5)"/><rect x="372" y="261" width="10" height="10" fill="rgb(140, 76, 5)"/><rect x="382" y="261" width="10" height="10" fill="rgb(140, 77, 5)"/><rect x="392" y="261" width="10" height="10" fill="rgb(140, 78, 5)"/><rect x="402" y="261" width="10" height="10" fill="rgb(140, 79, 5)"/><rect x="412" y="261" width="10" height="10" fill="rgb(140, 80, 5)"/><rect x="422" y="261" width="10" height="10" fill="rgb(140, 81, 5)"/><rect x="432" y="261" width="10" height="10" fill="rgb(140, 82, 5)"/><rect x="442" y="261" width="10" height="10" fill="rgb(140, 83, 5)"/><rect x="452" y="261" width="10" height="10" fill="rgb(140, 83, 5)"/><rect x="462" y="261" width="10" height="10" fill="rgb(140, 83, 5)"/><rect x="472" y="261" width="10" height="10" fill="rgb(140, 83, 5)"/><rect x="482" y="261" width="10" height="10" fill="rgb(140, 83, 5)"/><rect x="492" y="261" width="10" height="10" fill="rgb(140, 83, 5)"/><rect x="502" y="261" width="10" height="10" fill="rgb(140, 83, 5)"/><rect x="512" y="261" width="10" height="10" fill="rgb(140, 83, 5)"/><rect x="522" y="261" width="10" height="10" fill="rgb(140, 83, 5)"/><rect x="532" y="261" width="10" height="10" fill="rgb(140, 83, 5)"/><rect x="542" y="261" width="10" height="10" fill="rgb(140, 82, 5)"/><rect x="552" y="261" width="10" height="10" fill="rgb(140, 82, 5)"/><rect x="562" y="261" width="10" height="10" fill="rgb(140, 82, 5)"/><rect x="572" y="261" width="10" height="10" fill="rgb(140, 82, 5)"/><rect x="582" y="261" width="10" height="10" fill="rgb(140, 82, 5)"/><rect x="592" y="261" width="10" height="10" fill="rgb(140, 81, 5)"/><rect x="602" y="261" width="10" height="10" fill="rgb(140, 81, 5)"/><rect x="612" y="261" width="10" height="10" fill="rgb(140, 81, 5)"/><rect x="622" y="261" width="10" height="10" fill="rgb(140, 81, 5)"/><rect x="632" y="261" width="10" height="10" fill="rgb(140, 80, 5)"/><rect x="642" y="261" width="10" height="10" fill="rgb(140, 80, 5)"/><rect x="652" y="261" width="10" height="10" fill="rgb(140, 79, 5)"/><rect x="122" y="271" width="10" height="10" fill="rgb(140, 78, 5)"/><rect x="132" y="271" width="10" height="10" fill="rgb(140, 77, 5)"/><rect x="142" y="271" width="10" height="10" fill="rgb(140, 77, 5)"/><rect x="152" y="271" width="10" height="10" fill="rgb(140, 77, 5)"/><rect x="162" y="271" width="10" height="10" fill="rgb(140, 78, 5)"/><rect x="172" y="271" width="10" height="10" fill="rgb(140, 78, 5)"/><rect x="182" y="271" width="10" height="10" fill="rgb(140, 79, 5)"/><rect x="192" y="271" width="10" height="10" fill="rgb(140, 80, 5)"/><rect x="202" y="271" width="10" height="10" fill="rgb(140, 80, 5)"/><rect x="212" y="271" width="10" height="10" fill="rgb(140, 81, 5)"/><rect x="222" y="271" width="10" height="10" fill="rgb(140, 81, 5)"/><rect x="232" y="271" width="10" height="10" fill="rgb(140, 81, 5)"/><rect x="242" y="271" width="10" height="10" fill="rgb(140, 81, 5)"/><rect x="252" y="271" width="10" height="10" fill="rgb(140, 80, 5)"/><rect x="262" y="271" width="10" height="10" fill="rgb(140, 80, 5)"/><rect x="272" y="271" width="10" height="10" fill="rgb(140, 80, 5)"/><rect x="282" y="271" width="10" height="10" fill="rgb(140, 79, 5)"/><rect x="292" y="271" width="10" height="10" fill="rgb(140, 79, 5)"/><rect x="302" y="271" width="10" height="10" fill="rgb(140, 78, 5)"/><rect x="312" y="271" width="10" height="10" fill="rgb(140, 77, 5)"/><rect x="322" y="271" width="10" height="10" fill="rgb(140, 76, 5)"/><rect x="332" y="271" width="10" height="10" fill="rgb(140, 75, 5)"/><rect x="342" y="271" width="10" height="10" fill="rgb(140, 74, 5)"/><rect x="352" y="271" width="10" height="10" fill="rgb(140, 73, 5)"/><rect x="362" y="271" width="10" height="10" fill="rgb(140, 73, 5)"/><rect x="372" y="271" width="10" height="10" fill="rgb(140, 72, 5)"/><rect x="382" y="271" width="10" height="10" fill="rgb(140, 73, 5)"/><rect x="392" y="271" width="10" height="10" fill="rgb(140, 74, 5)"/><rect x="402" y="271" width="10" height="10" fill="rgb(140, 74, 5)"/><rect x="412" y="271" width="10" height="10" fill="rgb(140, 75, 5)"/><rect x="422" y="271" width="10" height="10" fill="rgb(140, 76, 5)"/><rect x="432" y="271" width="10" height="10" fill="rgb(140, 77, 5)"/><rect x="442" y="271" width="10" height="10" fill="rgb(140, 77, 5)"/><rect x="452" y="271" width="10" height="10" fill="rgb(140, 77, 5)"/><rect x="462" y="271" width="10" height="10" fill="rgb(140, 78, 5)"/><rect x="472" y="271" width="10" height="10" fill="rgb(140, 78, 5)"/><rect x="482" y="271" width="10" height="10" fill="rgb(140, 78, 5)"/><rect x="492" y="271" width="10" height="10" fill="rgb(140, 78, 5)"/><rect x="502" y="271" width="10" height="10" fill="rgb(140, 78, 5)"/><rect x="512" y="271" width="10" height="10" fill="rgb(140, 78, 5)"/><rect x="522" y="271" width="10" height="10" fill="rgb(140, 78, 5)"/><rect x="532" y="271" width="10" height="10" fill="rgb(140, 78, 5)"/><rect x="542" y="271" width="10" height="10" fill="rgb(140, 78, 5)"/><rect x="552" y="271" width="10" height="10" fill="rgb(140, 78, 5)"/><rect x="562" y="271" width="10" height="10" fill="rgb(140, 78, 5)"/><rect x="572" y="271" width="10" height="10" fill="rgb(140, 78, 5)"/><rect x="582" y="271" width="10" height="10" fill="rgb(140, 78, 5)"/><rect x="592" y="271" width="10" height="10" fill="rgb(140, 78, 5)"/><rect x="602" y="271" width="10" height="10" fill="rgb(140, 77, 5)"/><rect x="612" y="271" width="10" height="10" fill="rgb(140, 77, 5)"/><rect x="622" y="271" width="10" height="10" fill="rgb(140, 77, 5)"/><rect x="632" y="271" width="10" height="10" fill="rgb(140, 76, 5)"/><rect x="642" y="271" width="10" height="10" fill="rgb(140, 76, 5)"/><rect x="652" y="271" width="10" height="10" fill="rgb(140, 76, 5)"/><rect x="122" y="281" width="10" height="10" fill="rgb(140, 74, 5)"/><rect x="132" y="281" width="10" height="10" fill="rgb(140, 74, 5)"/><rect x="142" y="281" width="10" height="10" fill="rgb(140, 74, 5)"/><rect x="152" y="281" width="10" height="10" fill="rgb(140, 74, 5)"/><rect x="162" y="281" width="10" height="10" fill="rgb(140, 75, 5)"/><rect x="172" y="281" width="10" height="10" fill="rgb(140, 75, 5)"/><rect x="182" y="281" width="10" height="10" fill="rgb(140, 76, 5)"/><rect x="192" y="281" width="10" height="10" fill="rgb(140, 77, 5)"/><rect x="202" y="281" width="10" height="10" fill="rgb(140, 78, 5)"/><rect x="212" y="281" width="10" height="10" fill="rgb(140, 78, 5)"/><rect x="222" y="281" width="10" height="10" fill="rgb(140, 78, 5)"/><rect x="232" y="281" width="10" height="10" fill="rgb(140, 78, 5)"/><rect x="242" y="281" width="10" height="10" fill="rgb(140, 78, 5)"/><rect x="252" y="281" width="10" height="10" fill="rgb(140, 78, 5)"/><rect x="262" y="281" width="10" height="10" fill="rgb(140, 77, 5)"/><rect x="272" y="281" width="10" height="10" fill="rgb(140, 77, 5)"/><rect x="282" y="281" width="10" height="10" fill="rgb(140, 76, 5)"/><rect x="292" y="281" width="10" height="10" fill="rgb(140, 75, 5)"/><rect x="302" y="281" width="10" height="10" fill="rgb(140, 74, 5)"/><rect x="312" y="281" width="10" height="10" fill="rgb(140, 74, 5)"/><rect x="322" y="281" width="10" height="10" fill="rgb(140, 72, 5)"/><rect x="332" y="281" width="10" height="10" fill="rgb(140, 71, 5)"/><rect x="342" y="281" width="10" height="10" fill="rgb(140, 70, 5)"/><rect x="352" y="281" width="10" height="10" fill="rgb(140, 70, 5)"/><rect x="362" y="281" width="10" height="10" fill="rgb(140, 69, 5)"/><rect x="372" y="281" width="10" height="10" fill="rgb(140, 69, 5)"/><rect x="382" y="281" width="10" height="10" fill="rgb(140, 69, 5)"/><rect x="392" y="281" width="10" height="10" fill="rgb(140, 70, 5)"/><rect x="402" y="281" width="10" height="10" fill="rgb(140, 70, 5)"/><rect x="412" y="281" width="10" height="10" fill="rgb(140, 70, 5)"/><rect x="422" y="281" width="10" height="10" fill="rgb(140, 71, 5)"/><rect x="432" y="281" width="10" height="10" fill="rgb(140, 71, 5)"/><rect x="442" y="281" width="10" height="10" fill="rgb(140, 72, 5)"/><rect x="452" y="281" width="10" height="10" fill="rgb(140, 72, 5)"/><rect x="462" y="281" width="10" height="10" fill="rgb(140, 72, 5)"/><rect x="472" y="281" width="10" height="10" fill="rgb(140, 73, 5)"/><rect x="482" y="281" width="10" height="10" fill="rgb(140, 73, 5)"/><rect x="492" y="281" width="10" height="10" fill="rgb(140, 73, 5)"/><rect x="502" y="281" width="10" height="10" fill="rgb(140, 74, 5)"/><rect x="512" y="281" width="10" height="10" fill="rgb(140, 74, 5)"/><rect x="522" y="281" width="10" height="10" fill="rgb(140, 74, 5)"/><rect x="532" y="281" width="10" height="10" fill="rgb(140, 74, 5)"/><rect x="542" y="281" width="10" height="10" fill="rgb(140, 74, 5)"/><rect x="552" y="281" width="10" height="10" fill="rgb(140, 74, 5)"/><rect x="562" y="281" width="10" height="10" fill="rgb(140, 74, 5)"/><rect x="572" y="281" width="10" height="10" fill="rgb(140, 74, 5)"/><rect x="582" y="281" width="10" height="10" fill="rgb(140, 74, 5)"/><rect x="592" y="281" width="10" height="10" fill="rgb(140, 74, 5)"/><rect x="602" y="281" width="10" height="10" fill="rgb(140, 73, 5)"/><rect x="612" y="281" width="10" height="10" fill="rgb(140, 73, 5)"/><rect x="622" y="281" width="10" height="10" fill="rgb(140, 73, 5)"/><rect x="632" y="281" width="10" height="10" fill="rgb(140, 73, 5)"/><rect x="642" y="281" width="10" height="10" fill="rgb(140, 72, 5)"/><rect x="652" y="281" width="10" height="10" fill="rgb(140, 72, 5)"/><rect x="122" y="291" width="10" height="10" fill="rgb(140, 71, 5)"/><rect x="132" y="291" width="10" height="10" fill="rgb(140, 71, 5)"/><rect x="142" y="291" width="10" height="10" fill="rgb(140, 71, 5)"/><rect x="152" y="291" width="10" height="10" fill="rgb(140, 71, 5)"/><rect x="162" y="291" width="10" height="10" fill="rgb(140, 72, 5)"/><rect x="172" y="291" width="10" height="10" fill="rgb(140, 72, 5)"/><rect x="182" y="291" width="10" height="10" fill="rgb(140, 73, 5)"/><rect x="192" y="291" width="10" height="10" fill="rgb(140, 74, 5)"/><rect x="202" y="291" width="10" height="10" fill="rgb(140, 75, 5)"/><rect x="212" y="291" width="10" height="10" fill="rgb(140, 75, 5)"/><rect x="222" y="291" width="10" height="10" fill="rgb(140, 75, 5)"/><rect x="232" y="291" width="10" height="10" fill="rgb(140, 75, 5)"/><rect x="242" y="291" width="10" height="10" fill="rgb(140, 75, 5)"/><rect x="252" y="291" width="10" height="10" fill="rgb(140, 74, 5)"/><rect x="262" y="291" width="10" height="10" fill="rgb(140, 74, 5)"/><rect x="272" y="291" width="10" height="10" fill="rgb(140, 73, 5)"/><rect x="282" y="291" width="10" height="10" fill="rgb(140, 73, 5)"/><rect x="292" y="291" width="10" height="10" fill="rgb(140, 72, 5)"/><rect x="302" y="291" width="10" height="10" fill="rgb(140, 71, 5)"/><rect x="312" y="291" width="10" height="10" fill="rgb(140, 70, 5)"/><rect x="322" y="291" width="10" height="10" fill="rgb(140, 69, 5)"/><rect x="332" y="291" width="10" height="10" fill="rgb(140, 69, 5)"/><rect x="342" y="291" width="10" height="10" fill="rgb(140, 68, 5)"/><rect x="352" y="291" width="10" height="10" fill="rgb(140, 68, 5)"/><rect x="362" y="291" width="10" height="10" fill="rgb(140, 68, 5)"/><rect x="372" y="291" width="10" height="10" fill="rgb(140, 67, 5)"/><rect x="382" y="291" width="10" height="10" fill="rgb(140, 67, 5)"/><rect x="392" y="291" width="10" height="10" fill="rgb(140, 67, 5)"/><rect x="402" y="291" width="10" height="10" fill="rgb(140, 68, 5)"/><rect x="412" y="291" width="10" height="10" fill="rgb(140, 68, 5)"/><rect x="422" y="291" width="10" height="10" fill="rgb(140, 68, 5)"/><rect x="432" y="291" width="10" height="10" fill="rgb(140, 68, 5)"/><rect x="442" y="291" width="10" height="10" fill="rgb(140, 68, 5)"/><rect x="452" y="291" width="10" height="10" fill="rgb(140, 68, 5)"/><rect x="462" y="291" width="10" height="10" fill="rgb(140, 69, 5)"/><rect x="472" y="291" width="10" height="10" fill="rgb(140, 69, 5)"/><rect x="482" y="291" width="10" height="10" fill="rgb(140, 69, 5)"/><rect x="492" y="291" width="10" height="10" fill="rgb(140, 69, 5)"/><rect x="502" y="291" width="10" height="10" fill="rgb(140, 69, 5)"/><rect x="512" y="291" width="10" height="10" fill="rgb(140, 70, 5)"/><rect x="522" y="291" width="10" height="10" fill="rgb(140, 70, 5)"/><rect x="532" y="291" width="10" height="10" fill="rgb(140, 70, 5)"/><rect x="542" y="291" width="10" height="10" fill="rgb(140, 70, 5)"/><rect x="552" y="291" width="10" height="10" fill="rgb(140, 70, 5)"/><rect x="562" y="291" width="10" height="10" fill="rgb(140, 70, 5)"/><rect x="572" y="291" width="10" height="10" fill="rgb(140, 70, 5)"/><rect x="582" y="291" width="10" height="10" fill="rgb(140, 70, 5)"/><rect x="592" y="291" width="10" height="10" fill="rgb(140, 70, 5)"/><rect x="602" y="291" width="10" height="10" fill="rgb(140, 70, 5)"/><rect x="612" y="291" width="10" height="10" fill="rgb(140, 70, 5)"/><rect x="622" y="291" width="10" height="10" fill="rgb(140, 69, 5)"/><rect x="632" y="291" width="10" height="10" fill="rgb(140, 69, 5)"/><rect x="642" y="291" width="10" height="10" fill="rgb(140, 69, 5)"/><rect x="652" y="291" width="10" height="10" fill="rgb(140, 69, 5)"/><rect x="122" y="301" width="10" height="10" fill="rgb(140, 69, 5)"/><rect x="132" y="301" width="10" height="10" fill="rgb(140, 69, 5)"/><rect x="142" y="301" width="10" height="10" fill="rgb(140, 69, 5)"/><rect x="152" y="301" width="10" height="10" fill="rgb(140, 69, 5)"/><rect x="162" y="301" width="10" height="10" fill="rgb(140, 69, 5)"/><rect x="172" y="301" width="10" height="10" fill="rgb(140, 70, 5)"/><rect x="182" y="301" width="10" height="10" fill="rgb(140, 70, 5)"/><rect x="192" y="301" width="10" height="10" fill="rgb(140, 71, 5)"/><rect x="202" y="301" width="10" height="10" fill="rgb(140, 71, 5)"/><rect x="212" y="301" width="10" height="10" fill="rgb(140, 72, 5)"/><rect x="222" y="301" width="10" height="10" fill="rgb(140, 72, 5)"/><rect x="232" y="301" width="10" height="10" fill="rgb(140, 72, 5)"/><rect x="242" y="301" width="10" height="10" fill="rgb(140, 72, 5)"/><rect x="252" y="301" width="10" height="10" fill="rgb(140, 71, 5)"/><rect x="262" y="301" width="10" height="10" fill="rgb(140, 71, 5)"/><rect x="272" y="301" width="10" height="10" fill="rgb(140, 70, 5)"/><rect x="282" y="301" width="10" height="10" fill="rgb(140, 70, 5)"/><rect x="292" y="301" width="10" height="10" fill="rgb(140, 69, 5)"/><rect x="302" y="301" width="10" height="10" fill="rgb(140, 69, 5)"/><rect x="312" y="301" width="10" height="10" fill="rgb(140, 68, 5)"/><rect x="322" y="301" width="10" height="10" fill="rgb(140, 68, 5)"/><rect x="332" y="301" width="10" height="10" fill="rgb(140, 67, 5)"/><rect x="342" y="301" width="10" height="10" fill="rgb(140, 66, 5)"/><rect x="352" y="301" width="10" height="10" fill="rgb(140, 66, 5)"/><rect x="362" y="301" width="10" height="10" fill="rgb(140, 66, 5)"/><rect x="372" y="301" width="10" height="10" fill="rgb(140, 65, 5)"/><rect x="382" y="301" width="10" height="10" fill="rgb(140, 65, 5)"/><rect x="392" y="301" width="10" height="10" fill="rgb(140, 65, 5)"/><rect x="402" y="301" width="10" height="10" fill="rgb(140, 65, 5)"/><rect x="412" y="301" width="10" height="10" fill="rgb(140, 65, 5)"/><rect x="422" y="301" width="10" height="10" fill="rgb(140, 66, 5)"/><rect x="432" y="301" width="10" height="10" fill="rgb(140, 66, 5)"/><rect x="442" y="301" width="10" height="10" fill="rgb(140, 66, 5)"/><rect x="452" y="301" width="10" height="10" fill="rgb(140, 66, 5)"/><rect x="462" y="301" width="10" height="10" fill="rgb(140, 66, 5)"/><rect x="472" y="301" width="10" height="10" fill="rgb(140, 66, 5)"/><rect x="482" y="301" width="10" height="10" fill="rgb(140, 67, 5)"/><rect x="492" y="301" width="10" height="10" fill="rgb(140, 67, 5)"/><rect x="502" y="301" width="10" height="10" fill="rgb(140, 67, 5)"/><rect x="512" y="301" width="10" height="10" fill="rgb(140, 67, 5)"/><rect x="522" y="301" width="10" height="10" fill="rgb(140, 67, 5)"/><rect x="532" y="301" width="10" height="10" fill="rgb(140, 67, 5)"/><rect x="542" y="301" width="10" height="10" fill="rgb(140, 68, 5)"/><rect x="552" y="301" width="10" height="10" fill="rgb(140, 68, 5)"/><rect x="562" y="301" width="10" height="10" fill="rgb(140, 68, 5)"/><rect x="572" y="301" width="10" height="10" fill="rgb(140, 68, 5)"/><rect x="582" y="301" width="10" height="10" fill="rgb(140, 68, 5)"/><rect x="592" y="301" width="10" height="10" fill="rgb(140, 68, 5)"/><rect x="602" y="301" width="10" height="10" fill="rgb(140, 68, 5)"/><rect x="612" y="301" width="10" height="10" fill="rgb(140, 67, 5)"/><rect x="622" y="301" width="10" height="10" fill="rgb(140, 67, 5)"/><rect x="632" y="301" width="10" height="10" fill="rgb(140, 67, 5)"/><rect x="642" y="301" width="10" height="10" fill="rgb(140, 67, 5)"/><rect x="652" y="301" width="10" height="10" fill="rgb(140, 67, 5)"/><rect x="122" y="311" width="10" height="10" fill="rgb(140, 67, 5)"/><rect x="132" y="311" width="10" height="10" fill="rgb(140, 67, 5)"/><rect x="142" y="311" width="10" height="10" fill="rgb(140, 67, 5)"/><rect x="152" y="311" width="10" height="10" fill="rgb(140, 67, 5)"/><rect x="162" y="311" width="10" height="10" fill="rgb(140, 68, 5)"/><rect x="172" y="311" width="10" height="10" fill="rgb(140, 68, 5)"/><rect x="182" y="311" width="10" height="10" fill="rgb(140, 68, 5)"/><rect x="192" y="311" width="10" height="10" fill="rgb(140, 69, 5)"/><rect x="202" y="311" width="10" height="10" fill="rgb(140, 69, 5)"/><rect x="212" y="311" width="10" height="10" fill="rgb(140, 69, 5)"/><rect x="222" y="311" width="10" height="10" fill="rgb(140, 69, 5)"/><rect x="232" y="311" width="10" height="10" fill="rgb(140, 69, 5)"/><rect x="242" y="311" width="10" height="10" fill="rgb(140, 69, 5)"/><rect x="252" y="311" width="10" height="10" fill="rgb(140, 69, 5)"/><rect x="262" y="311" width="10" height="10" fill="rgb(140, 68, 5)"/><rect x="272" y="311" width="10" height="10" fill="rgb(140, 68, 5)"/><rect x="282" y="311" width="10" height="10" fill="rgb(140, 68, 5)"/><rect x="292" y="311" width="10" height="10" fill="rgb(140, 67, 5)"/><rect x="302" y="311" width="10" height="10" fill="rgb(140, 67, 5)"/><rect x="312" y="311" width="10" height="10" fill="rgb(140, 66, 5)"/><rect x="322" y="311" width="10" height="10" fill="rgb(140, 66, 5)"/><rect x="332" y="311" width="10" height="10" fill="rgb(140, 65, 5)"/><rect x="342" y="311" width="10" height="10" fill="rgb(140, 65, 5)"/><rect x="352" y="311" width="10" height="10" fill="rgb(140, 64, 5)"/><rect x="362" y="311" width="10" height="10" fill="rgb(140, 64, 5)"/><rect x="372" y="311" width="10" height="10" fill="rgb(140, 63, 5)"/><rect x="382" y="311" width="10" height="10" fill="rgb(140, 63, 5)"/><rect x="392" y="311" width="10" height="10" fill="rgb(140, 63, 5)"/><rect x="402" y="311" width="10" height="10" fill="rgb(140, 63, 5)"/><rect x="412" y="311" width="10" height="10" fill="rgb(140, 63, 5)"/><rect x="422" y="311" width="10" height="10" fill="rgb(140, 63, 5)"/><rect x="432" y="311" width="10" height="10" fill="rgb(140, 63, 5)"/><rect x="442" y="311" width="10" height="10" fill="rgb(140, 64, 5)"/><rect x="452" y="311" width="10" height="10" fill="rgb(140, 64, 5)"/><rect x="462" y="311" width="10" height="10" fill="rgb(140, 64, 5)"/><rect x="472" y="311" width="10" height="10" fill="rgb(140, 64, 5)"/><rect x="482" y="311" width="10" height="10" fill="rgb(140, 64, 5)"/><rect x="492" y="311" width="10" height="10" fill="rgb(140, 64, 5)"/><rect x="502" y="311" width="10" height="10" fill="rgb(140, 65, 5)"/><rect x="512" y="311" width="10" height="10" fill="rgb(140, 65, 5)"/><rect x="522" y="311" width="10" height="10" fill="rgb(140, 65, 5)"/><rect x="532" y="311" width="10" height="10" fill="rgb(140, 65, 5)"/><rect x="542" y="311" width="10" height="10" fill="rgb(140, 65, 5)"/><rect x="552" y="311" width="10" height="10" fill="rgb(140, 65, 5)"/><rect x="562" y="311" width="10" height="10" fill="rgb(140, 65, 5)"/><rect x="572" y="311" width="10" height="10" fill="rgb(140, 65, 5)"/><rect x="582" y="311" width="10" height="10" fill="rgb(140, 65, 5)"/><rect x="592" y="311" width="10" height="10" fill="rgb(140, 65, 5)"/><rect x="602" y="311" width="10" height="10" fill="rgb(140, 65, 5)"/><rect x="612" y="311" width="10" height="10" fill="rgb(140, 65, 5)"/><rect x="622" y="311" width="10" height="10" fill="rgb(140, 65, 5)"/><rect x="632" y="311" width="10" height="10" fill="rgb(140, 65, 5)"/><rect x="642" y="311" width="10" height="10" fill="rgb(140, 65, 5)"/><rect x="652" y="311" width="10" height="10" fill="rgb(140, 65, 5)"/><rect x="122" y="321" width="10" height="10" fill="rgb(140, 66, 5)"/><rect x="132" y="321" width="10" height="10" fill="rgb(140, 66, 5)"/><rect x="142" y="321" width="10" height="10" fill="rgb(140, 66, 5)"/><rect x="152" y="321" width="10" height="10" fill="rgb(140, 66, 5)"/><rect x="162" y="321" width="10" height="10" fill="rgb(140, 66, 5)"/><rect x="172" y="321" width="10" height="10" fill="rgb(140, 66, 5)"/><rect x="182" y="321" width="10" height="10" fill="rgb(140, 66, 5)"/><rect x="192" y="321" width="10" height="10" fill="rgb(140, 67, 5)"/><rect x="202" y="321" width="10" height="10" fill="rgb(140, 67, 5)"/><rect x="212" y="321" width="10" height="10" fill="rgb(140, 67, 5)"/><rect x="222" y="321" width="10" height="10" fill="rgb(140, 67, 5)"/><rect x="232" y="321" width="10" height="10" fill="rgb(140, 67, 5)"/><rect x="242" y="321" width="10" height="10" fill="rgb(140, 67, 5)"/><rect x="252" y="321" width="10" height="10" fill="rgb(140, 67, 5)"/><rect x="262" y="321" width="10" height="10" fill="rgb(140, 66, 5)"/><rect x="272" y="321" width="10" height="10" fill="rgb(140, 66, 5)"/><rect x="282" y="321" width="10" height="10" fill="rgb(140, 66, 5)"/><rect x="292" y="321" width="10" height="10" fill="rgb(140, 65, 5)"/><rect x="302" y="321" width="10" height="10" fill="rgb(140, 65, 5)"/><rect x="312" y="321" width="10" height="10" fill="rgb(140, 64, 5)"/><rect x="322" y="321" width="10" height="10" fill="rgb(140, 64, 5)"/><rect x="332" y="321" width="10" height="10" fill="rgb(140, 63, 5)"/><rect x="342" y="321" width="10" height="10" fill="rgb(140, 63, 5)"/><rect x="352" y="321" width="10" height="10" fill="rgb(140, 62, 5)"/><rect x="362" y="321" width="10" height="10" fill="rgb(140, 62, 5)"/><rect x="372" y="321" width="10" height="10" fill="rgb(140, 62, 5)"/><rect x="382" y="321" width="10" height="10" fill="rgb(140, 62, 5)"/><rect x="392" y="321" width="10" height="10" fill="rgb(140, 62, 5)"/><rect x="402" y="321" width="10" height="10" fill="rgb(140, 62, 5)"/><rect x="412" y="321" width="10" height="10" fill="rgb(140, 62, 5)"/><rect x="422" y="321" width="10" height="10" fill="rgb(140, 62, 5)"/><rect x="432" y="321" width="10" height="10" fill="rgb(140, 62, 5)"/><rect x="442" y="321" width="10" height="10" fill="rgb(140, 62, 5)"/><rect x="452" y="321" width="10" height="10" fill="rgb(140, 62, 5)"/><rect x="462" y="321" width="10" height="10" fill="rgb(140, 62, 5)"/><rect x="472" y="321" width="10" height="10" fill="rgb(140, 62, 5)"/><rect x="482" y="321" width="10" height="10" fill="rgb(140, 62, 5)"/><rect x="492" y="321" width="10" height="10" fill="rgb(140, 62, 5)"/><rect x="502" y="321" width="10" height="10" fill="rgb(140, 62, 5)"/><rect x="512" y="321" width="10" height="10" fill="rgb(140, 63, 5)"/><rect x="522" y="321" width="10" height="10" fill="rgb(140, 63, 5)"/><rect x="532" y="321" width="10" height="10" fill="rgb(140, 63, 5)"/><rect x="542" y="321" width="10" height="10" fill="rgb(140, 63, 5)"/><rect x="552" y="321" width="10" height="10" fill="rgb(140, 63, 5)"/><rect x="562" y="321" width="10" height="10" fill="rgb(140, 63, 5)"/><rect x="572" y="321" width="10" height="10" fill="rgb(140, 63, 5)"/><rect x="582" y="321" width="10" height="10" fill="rgb(140, 63, 5)"/><rect x="592" y="321" width="10" height="10" fill="rgb(140, 63, 5)"/><rect x="602" y="321" width="10" height="10" fill="rgb(140, 63, 5)"/><rect x="612" y="321" width="10" height="10" fill="rgb(140, 63, 5)"/><rect x="622" y="321" width="10" height="10" fill="rgb(140, 63, 5)"/><rect x="632" y="321" width="10" height="10" fill="rgb(140, 63, 5)"/><rect x="642" y="321" width="10" height="10" fill="rgb(140, 63, 5)"/><rect x="652" y="321" width="10" height="10" fill="rgb(140, 63, 5)"/><rect x="122" y="331" width="10" height="10" fill="rgb(140, 64, 5)"/><rect x="132" y="331" width="10" height="10" fill="rgb(140, 64, 5)"/><rect x="142" y="331" width="10" height="10" fill="rgb(140, 64, 5)"/><rect x="152" y="331" width="10" height="10" fill="rgb(140, 64, 5)"/><rect x="162" y="331" width="10" height="10" fill="rgb(140, 64, 5)"/><rect x="172" y="331" width="10" height="10" fill="rgb(140, 64, 5)"/><rect x="182" y="331" width="10" height="10" fill="rgb(140, 65, 5)"/><rect x="192" y="331" width="10" height="10" fill="rgb(140, 65, 5)"/><rect x="202" y="331" width="10" height="10" fill="rgb(140, 65, 5)"/><rect x="212" y="331" width="10" height="10" fill="rgb(140, 65, 5)"/><rect x="222" y="331" width="10" height="10" fill="rgb(140, 65, 5)"/><rect x="232" y="331" width="10" height="10" fill="rgb(140, 65, 5)"/><rect x="242" y="331" width="10" height="10" fill="rgb(140, 65, 5)"/><rect x="252" y="331" width="10" height="10" fill="rgb(140, 65, 5)"/><rect x="262" y="331" width="10" height="10" fill="rgb(140, 65, 5)"/><rect x="272" y="331" width="10" height="10" fill="rgb(140, 64, 5)"/><rect x="282" y="331" width="10" height="10" fill="rgb(140, 64, 5)"/><rect x="292" y="331" width="10" height="10" fill="rgb(140, 63, 5)"/><rect x="302" y="331" width="10" height="10" fill="rgb(140, 63, 5)"/><rect x="312" y="331" width="10" height="10" fill="rgb(140, 62, 5)"/><rect x="322" y="331" width="10" height="10" fill="rgb(140, 62, 5)"/><rect x="332" y="331" width="10" height="10" fill="rgb(140, 62, 5)"/><rect x="342" y="331" width="10" height="10" fill="rgb(140, 62, 5)"/><rect x="352" y="331" width="10" height="10" fill="rgb(140, 62, 5)"/><rect x="362" y="331" width="10" height="10" fill="rgb(140, 62, 5)"/><rect x="372" y="331" width="10" height="10" fill="rgb(140, 62, 5)"/><rect x="382" y="331" width="10" height="10" fill="rgb(140, 62, 5)"/><rect x="392" y="331" width="10" height="10" fill="rgb(140, 62, 5)"/><rect x="402" y="331" width="10" height="10" fill="rgb(140, 62, 5)"/><rect x="412" y="331" width="10" height="10" fill="rgb(140, 62, 5)"/><rect x="422" y="331" width="10" height="10" fill="rgb(140, 62, 5)"/><rect x="432" y="331" width="10" height="10" fill="rgb(140, 62, 5)"/><rect x="442" y="331" width="10" height="10" fill="rgb(140, 62, 5)"/><rect x="452" y="331" width="10" height="10" fill="rgb(140, 62, 5)"/><rect x="462" y="331" width="10" height="10" fill="rgb(140, 62, 5)"/><rect x="472" y="331" width="10" height="10" fill="rgb(140, 62, 5)"/><rect x="482" y="331" width="10" height="10" fill="rgb(140, 62, 5)"/><rect x="492" y="331" width="10" height="10" fill="rgb(140, 62, 5)"/><rect x="502" y="331" width="10" height="10" fill="rgb(140, 62, 5)"/><rect x="512" y="331" width="10" height="10" fill="rgb(140, 62, 5)"/><rect x="522" y="331" width="10" height="10" fill="rgb(140, 62, 5)"/><rect x="532" y="331" width="10" height="10" fill="rgb(140, 62, 5)"/><rect x="542" y="331" width="10" height="10" fill="rgb(140, 62, 5)"/><rect x="552" y="331" width="10" height="10" fill="rgb(140, 62, 5)"/><rect x="562" y="331" width="10" height="10" fill="rgb(140, 62, 5)"/><rect x="572" y="331" width="10" height="10" fill="rgb(140, 62, 5)"/><rect x="582" y="331" width="10" height="10" fill="rgb(140, 62, 5)"/><rect x="592" y="331" width="10" height="10" fill="rgb(140, 62, 5)"/><rect x="602" y="331" width="10" height="10" fill="rgb(140, 62, 5)"/><rect x="612" y="331" width="10" height="10" fill="rgb(140, 62, 5)"/><rect x="622" y="331" width="10" height="10" fill="rgb(140, 62, 5)"/><rect x="632" y="331" width="10" height="10" fill="rgb(140, 62, 5)"/><rect x="642" y="331" width="10" height="10" fill="rgb(140, 62, 5)"/><rect x="652" y="331" width="10" height="10" fill="rgb(140, 62, 5)"/></g><defs><filter id="tx" x="0" y="0" width="100%" height="100%"><feTurbulence type="fractalNoise" baseFrequency="0.6 0.1" numOctaves="2" seed="3"/><feColorMatrix values="0 0 0 0 0  0 0 0 0 0  0 0 0 0 0  0 0 0 -2.2 1.25"/></filter></defs><g transform="rotate(-22 390 190)"><rect x="60" y="-60" width="660" height="500" filter="url(#tx)" opacity="0.08"/></g><defs><filter id="bl2" x="-50%" y="-50%" width="200%" height="200%"><feGaussianBlur stdDeviation="1.2"/></filter></defs><g filter="url(#bl2)"><ellipse cx="160" cy="305" rx="26" ry="5.5" fill="rgb(155,55,8)" opacity="0.45"/><ellipse cx="172" cy="303" rx="12" ry="2" fill="rgb(90,35,5)" opacity="0.35"/><ellipse cx="150" cy="307" rx="8" ry="2" fill="rgb(90,35,5)" opacity="0.35"/></g><polygon points="131,50 217.7,50 211,58 204.8,65.8 195,75 185.9,84.7 176,96 167,107.6 158,115 148.2,122.4 140,127.5 131,132.4" fill="#000"/><path d="M131.0,315.7 C133.4,315.0 140.8,312.6 145.5,311.7 C150.2,310.8 154.6,310.3 159.0,310.3 C163.4,310.3 167.5,311.1 172.0,311.5 C176.5,311.9 181.2,313.1 185.9,313.0 C190.6,312.9 195.5,311.7 200.0,311.0 C204.5,310.3 207.9,309.9 212.9,309.0 C217.9,308.1 224.6,306.6 230.0,305.5 C235.4,304.4 239.9,303.3 245.2,302.2 C250.5,301.1 256.1,299.9 262.0,298.8 C267.9,297.7 273.3,296.7 280.3,295.5 C287.3,294.3 297.4,291.9 304.0,291.5 C310.6,291.1 314.2,292.4 320.2,292.8 C326.2,293.2 333.7,293.8 340.0,294.2 C346.3,294.6 348.2,295.1 357.9,295.5 C367.6,295.9 384.9,296.2 398.4,296.8 C411.9,297.4 426.7,298.3 438.8,299.0 C450.9,299.7 460.1,299.8 471.0,301.2 C481.9,302.7 489.2,305.7 504.0,307.5 C518.8,309.3 536.0,310.9 560.0,312.0 C584.0,313.1 633.3,313.7 648.0,314.0 L648,328 L131,328 Z" fill="#000"/><path d="M145.5,51.0 L132.0,64.5" fill="none" stroke="#fbf8f0" stroke-width="0.9"/><path d="M194.0,51.0 C191.8,54.1 185.4,64.1 180.5,69.9 C175.6,75.7 170.2,81.3 164.4,86.0 C158.6,90.7 150.9,94.8 145.5,98.2 C140.1,101.6 134.2,105.0 132.0,106.3" fill="none" stroke="#fbf8f0" stroke-width="0.9"/><path d="M225.0,51.0 C222.5,53.7 216.7,61.6 210.2,67.2 C203.7,72.8 193.5,80.2 185.9,84.7 C178.3,89.2 171.6,90.0 164.4,94.1 C157.2,98.1 148.2,105.0 142.8,109.0 C137.4,113.0 133.8,116.8 132.0,118.4" fill="none" stroke="#fbf8f0" stroke-width="0.9"/><path d="M249.3,51.0 C247.7,53.7 242.8,62.4 239.8,67.2 C236.9,72.0 233.9,76.2 231.6,80.0 C229.3,83.8 227.9,87.1 225.8,90.2 C223.7,93.3 221.3,96.2 218.8,98.8 C216.2,101.3 213.3,103.7 210.2,105.8 C207.1,107.9 206.3,108.3 200.0,111.2 C193.7,114.2 181.5,120.0 172.4,123.5 C163.3,127.0 152.2,129.3 145.5,132.0 C138.8,134.7 134.2,138.3 132.0,139.6" fill="none" stroke="#fbf8f0" stroke-width="0.9"/><path d="M312.1,51.0 C310.8,51.9 309.8,53.1 304.0,56.4 C298.2,59.6 284.9,66.4 277.6,70.5 C270.3,74.6 265.1,77.4 260.0,80.8 C254.9,84.2 251.0,87.8 246.9,90.9 C242.8,94.0 239.1,96.6 235.2,99.5 C231.3,102.4 227.8,104.7 223.4,108.1 C219.0,111.5 213.5,116.3 208.6,120.0 C203.7,123.7 201.4,125.4 194.0,130.5 C186.6,135.6 174.7,144.3 164.4,150.8 C154.1,157.3 137.4,166.5 132.0,169.6" fill="none" stroke="#fbf8f0" stroke-width="0.9"/><path d="M380.8,51.0 C377.0,52.4 366.2,56.2 357.9,59.1 C349.6,62.0 340.0,64.8 331.0,68.5 C322.0,72.2 312.0,76.3 304.0,81.5 C296.0,86.7 290.6,92.9 283.0,99.5 C275.4,106.1 265.9,115.6 258.7,121.1 C251.5,126.6 244.9,129.1 240.0,132.3 C235.1,135.5 236.8,135.9 229.1,140.5 C221.4,145.1 203.4,154.2 193.7,160.0 C184.0,165.8 178.3,170.7 171.0,175.6 C163.7,180.5 156.5,185.2 150.0,189.5 C143.5,193.8 135.0,199.4 132.0,201.4" fill="none" stroke="#fbf8f0" stroke-width="0.9"/><path d="M556.9,51.0 C552.4,52.6 539.8,57.9 529.9,60.4 C520.0,62.9 506.6,63.1 497.6,65.8 C488.6,68.5 483.1,73.4 476.0,76.6 C468.9,79.8 463.0,82.5 455.0,84.7 C447.0,87.0 436.5,89.4 428.0,90.1 C419.5,90.8 411.9,89.6 403.8,88.7 C395.7,87.8 387.1,84.7 379.5,84.7 C371.9,84.7 366.0,85.3 357.9,88.7 C349.8,92.1 340.0,98.5 331.0,104.9 C322.0,111.3 312.8,120.4 304.0,127.0 C295.2,133.6 287.0,138.7 278.3,144.6 C269.6,150.5 260.8,157.1 252.0,162.3 C243.2,167.5 234.0,171.2 225.8,175.6 C217.5,180.0 210.1,184.5 202.3,188.9 C194.5,193.3 188.0,196.6 178.9,202.2 C169.8,207.8 155.4,217.3 147.6,222.5 C139.8,227.7 134.6,231.6 132.0,233.4" fill="none" stroke="#fbf8f0" stroke-width="0.9"/><path d="M645.9,55.0 C640.0,57.5 622.0,65.2 610.8,69.9 C599.6,74.6 589.7,80.3 578.5,83.4 C567.3,86.5 555.1,86.0 543.4,88.7 C531.7,91.4 519.6,96.1 508.4,99.5 C497.2,102.9 488.5,106.5 476.0,109.0 C463.5,111.5 446.8,112.6 433.4,114.4 C420.0,116.2 408.3,117.6 395.7,119.8 C383.1,122.0 369.6,124.9 357.9,127.8 C346.2,130.7 334.6,132.6 325.6,137.3 C316.6,142.0 310.2,149.9 304.0,156.2 C297.8,162.5 293.2,169.5 288.4,175.0 C283.5,180.5 279.4,184.4 274.9,189.0 C270.4,193.6 268.1,198.0 261.4,202.5 C254.7,207.0 244.8,211.1 234.5,216.0 C224.2,220.9 211.1,226.3 199.4,232.1 C187.7,237.9 175.6,245.4 164.4,251.0 C153.2,256.6 137.4,263.3 132.0,265.8" fill="none" stroke="#fbf8f0" stroke-width="0.9"/><path d="M648.0,91.5 C643.1,93.7 628.7,100.7 618.9,104.9 C609.1,109.2 599.1,113.0 589.2,117.0 C579.3,121.0 569.5,126.3 559.6,129.2 C549.7,132.1 539.3,132.8 529.9,134.6 C520.5,136.4 512.0,138.7 503.0,140.0 C494.0,141.3 488.9,141.3 476.0,142.7 C463.1,144.0 440.5,145.6 425.3,148.1 C410.1,150.6 396.1,154.4 384.9,157.5 C373.7,160.6 366.4,161.7 357.9,166.9 C349.4,172.2 340.0,182.2 333.7,189.0 C327.4,195.8 325.1,203.3 320.2,207.9 C315.2,212.5 313.8,212.1 304.0,216.6 C294.2,221.1 274.3,229.5 261.4,234.8 C248.5,240.1 236.7,244.2 226.4,248.3 C216.1,252.4 207.5,255.5 199.4,259.1 C191.3,262.7 184.5,266.3 177.8,269.9 C171.1,273.5 166.0,276.2 159.0,280.7 C152.0,285.2 140.5,293.8 136.0,296.8 C131.5,299.9 132.7,298.6 132.0,299.0" fill="none" stroke="#fbf8f0" stroke-width="0.9"/><path d="M648.0,116.0 C642.0,119.5 624.7,130.5 612.0,137.0 C599.3,143.5 585.7,149.8 572.0,155.0 C558.3,160.2 541.3,165.6 530.0,168.5 C518.7,171.4 513.0,171.4 504.0,172.5 C495.0,173.6 489.1,173.7 476.0,175.0 C462.9,176.3 438.2,178.1 425.3,180.4 C412.4,182.7 405.6,185.8 398.4,189.0 C391.2,192.2 387.6,196.0 382.2,199.8 C376.8,203.6 371.4,207.4 366.0,211.9 C360.6,216.4 354.7,222.2 349.8,226.7 C344.9,231.2 339.3,236.4 336.4,238.9 C333.5,241.4 337.7,239.8 332.3,241.6 C326.9,243.4 314.9,247.0 304.0,249.7 C293.1,252.4 277.5,255.3 266.8,257.8 C256.1,260.3 248.8,261.6 239.8,264.5 C230.8,267.4 220.5,273.1 212.9,275.3 C205.3,277.6 199.2,278.0 194.0,278.0 C188.8,278.0 184.7,276.2 181.9,275.3 C179.1,274.4 177.8,273.1 177.0,272.6" fill="none" stroke="#fbf8f0" stroke-width="0.9"/><path d="M530.0,206.0 C525.7,206.2 513.0,206.6 504.0,206.9 C495.0,207.2 484.2,207.7 476.0,207.9 C467.8,208.2 461.2,208.0 455.0,208.4 C448.8,208.8 445.1,208.9 438.8,210.6 C432.5,212.3 424.8,215.8 417.2,218.7 C409.6,221.6 402.0,225.2 393.0,228.1 C384.0,231.0 373.4,233.9 363.3,236.2 C353.2,238.4 337.5,240.7 332.3,241.6" fill="none" stroke="#fbf8f0" stroke-width="0.9"/><path d="M530.0,234.0 C525.7,234.3 513.0,235.2 504.0,236.0 C495.0,236.8 486.9,237.8 476.0,238.9 C465.1,240.1 451.7,241.1 438.8,242.9 C425.9,244.7 410.1,247.9 398.4,249.7 C386.7,251.5 378.4,252.3 368.7,253.7 C359.0,255.0 345.7,256.9 340.4,257.8 C335.1,258.7 337.6,258.8 337.0,259.0" fill="none" stroke="#fbf8f0" stroke-width="0.9"/><path d="M370.0,257.8 C373.8,258.5 384.7,261.2 393.0,261.8 C401.3,262.4 410.6,260.9 420.0,261.3 C429.4,261.8 440.3,263.8 449.6,264.5 C458.9,265.2 466.9,266.4 476.0,265.8 C485.1,265.2 495.0,261.9 504.0,260.6 C513.0,259.3 525.7,258.4 530.0,258.0" fill="none" stroke="#fbf8f0" stroke-width="0.9"/><path d="M530.0,287.0 C525.7,286.8 513.0,286.3 504.0,285.6 C495.0,284.9 486.9,283.6 476.0,282.8 C465.1,282.0 451.7,281.3 438.8,280.7 C425.9,280.1 411.9,279.8 398.4,279.3 C384.9,278.9 369.1,278.9 357.9,278.0 C346.7,277.1 340.0,275.0 331.0,273.9 C322.0,272.8 316.9,270.1 304.0,271.2 C291.1,272.3 268.5,277.8 253.3,280.7 C238.1,283.6 226.4,286.6 212.9,288.8 C199.4,291.0 185.9,292.5 172.4,294.1 C158.9,295.7 138.7,297.5 132.0,298.2" fill="none" stroke="#fbf8f0" stroke-width="0.9"/><polygon points="175.2,270.9 181.4,270.2 177.3,278" fill="#fff"/><polygon points="335,259.3 338.7,254.5 340.5,262.9" fill="#fff"/></g></svg>
<div style="left:132px;top:39.1px;width:515px;height:12.1px;background:#8080ff;"></div>
<div style="left:132px;top:50.6px;width:515px;height:0.6px;background:#7070b0;"></div>
<div class="t" style="top:45px;font-size:4.52px;color:#14145a;left:133px;">You have modified processing settings. Would you like to reprocess the affected files now?</div>
<div style="left:416.8px;top:41.7px;width:30.2px;height:7.0px;background:#c4c4fa;border:0.5px solid #9c9cd8;box-sizing:border-box;"></div>
<div style="left:450.1px;top:41.7px;width:29.7px;height:7.0px;background:#c4c4fa;border:0.5px solid #9c9cd8;box-sizing:border-box;"></div>
<div class="t" style="top:45px;font-size:4.5px;color:#222;letter-spacing:-0.14px;left:432px;transform:translateX(-50%);">Yes</div>
<div class="t" style="top:45px;font-size:4.5px;color:#222;letter-spacing:-0.14px;left:465px;transform:translateX(-50%);">No</div>
<div style="left:584.3px;top:43.2px;width:4.2px;height:4.2px;background:#e6e6ff;border:0.6px solid #6a6a9a;box-sizing:border-box;"></div>
<div class="t" style="top:45px;font-size:4.5px;color:#111;letter-spacing:-0.14px;left:590.6px;">Don&#x27;t ask again</div>
<svg style="left:627px;top:42.5px" width="6" height="6" viewBox="0 0 6 6"><circle cx="3" cy="3" r="2.2" fill="none" stroke="#334" stroke-width="0.6"/><path d="M3,0.8 A2.2,2.2 0 0 1 3,5.2Z" fill="#556"/></svg>
<svg style="left:638.5px;top:43.3px" width="4" height="4" viewBox="0 0 4 4"><path d="M0.4,0.4 L3.6,3.6 M3.6,0.4 L0.4,3.6" stroke="#223" stroke-width="0.6"/></svg>
<div style="left:132px;top:327.5px;width:621px;height:166.5px;background:#f0f0f0;"></div>
<div class="t" style="top:334px;font-size:4.5px;color:#222;letter-spacing:-0.14px;left:132.5px;">Time Series Multiplot</div>
<svg style="left:135.5px;top:342.5px" width="7" height="6" viewBox="0 0 7 6"><circle cx="1.8" cy="1.8" r="1.3" fill="none" stroke="#222" stroke-width="0.7"/><circle cx="4.6" cy="3.9" r="1.5" fill="none" stroke="#222" stroke-width="0.9"/></svg>
<div style="left:147.4px;top:342.6px;width:3.8px;height:4.8px;background:#3840b8;"></div>
<svg style="left:154.5px;top:343px" width="10" height="6" viewBox="0 0 10 6"><path d="M0.5,1.6 H7" stroke="#222" stroke-width="1"/><path d="M4.2,3.2 H7.6 L5.9,4.8Z" fill="#333"/></svg>
<div style="left:165.5px;top:342px;width:0.5px;height:7px;background:#d8d8d8;"></div>
<svg style="left:168px;top:342.5px" width="5" height="5" viewBox="0 0 5 5"><path d="M2.5,0.4 L4.6,4.4 H0.4Z" fill="none" stroke="#bbb" stroke-width="0.5"/></svg>
<div style="left:244.2px;top:340.5px;width:8.1px;height:9.3px;background:#dedede;border:0.5px solid #cfcfcf;box-sizing:border-box;"></div>
<svg style="left:246px;top:342.3px" width="5" height="6" viewBox="0 0 5 6"><path d="M0.6,0.4 L4.4,3 L2.8,3.3 L3.8,5.2 L3.1,5.5 L2.1,3.6 L0.9,4.6Z" fill="#111"/></svg>
<svg style="left:255px;top:342.6px" width="6" height="6" viewBox="0 0 6 6"><circle cx="2.3" cy="2.3" r="1.5" fill="none" stroke="#333" stroke-width="0.7"/><path d="M3.4,3.4 L5.3,5.3" stroke="#333" stroke-width="0.9"/></svg>
<svg style="left:264.5px;top:342.3px" width="6" height="6" viewBox="0 0 6 6"><path d="M0.5,2.8 L2.8,0.6 L5.1,2.8 M1.2,2.4 V5.2 H4.4 V2.4" fill="none" stroke="#333" stroke-width="0.6"/></svg>
<svg style="left:274.5px;top:342px" width="6" height="7" viewBox="0 0 6 7"><path d="M0.6,0.6 H3.2 V2 M0.6,0.6 V5.8 H2.6" fill="none" stroke="#333" stroke-width="0.6"/><path d="M3.4,2.6 V5.2 M2.4,4.3 L3.4,5.6 L4.4,4.3" fill="none" stroke="#333" stroke-width="0.6"/></svg>
<div style="left:284.5px;top:342px;width:0.5px;height:7px;background:#d8d8d8;"></div>
<svg style="left:287px;top:342.8px" width="8" height="6" viewBox="0 0 8 6"><path d="M0.4,1.8 H4" stroke="#111" stroke-width="0.8"/><circle cx="4.6" cy="1.8" r="1.3" fill="#111"/><path d="M3.6,3.6 H7.2 L5.4,5.2Z" fill="#333"/></svg>
<div style="left:132.8px;top:354px;width:107.8px;height:137.5px;background:#fff;border:0.6px solid #d0d0d0;box-sizing:border-box;"></div>
<div style="left:133.3px;top:354.5px;width:106.8px;height:5.1px;background:#ececec;"></div>
<div style="left:134.3px;top:355.4px;width:3.0px;height:3.0px;background:#5058d0;"></div>
<div class="t" style="top:356px;font-size:4.5px;color:#333;letter-spacing:-0.14px;left:139.2px;">Heave - Motion 1</div>
<div style="left:134.3px;top:360.4px;width:3.0px;height:3.0px;background:#40b040;"></div>
<div class="t" style="top:361px;font-size:4.5px;color:#333;letter-spacing:-0.14px;left:139.2px;">Pitch - Motion 1</div>
<div style="left:134.3px;top:365.4px;width:3.0px;height:3.0px;background:#d040a0;"></div>
<div class="t" style="top:366px;font-size:4.5px;color:#333;letter-spacing:-0.14px;left:139.2px;">Roll - Motion 1</div>
<div style="left:242.4px;top:354.2px;width:267.6px;height:126.0px;background:#ffffff;"></div>
<div style="left:242.4px;top:354.2px;width:267.6px;height:0.6px;background:#d6d6d6;"></div>
<div style="left:242.4px;top:354.2px;width:0.5px;height:126.0px;background:#d6d6d6;"></div>
<div style="left:274.2px;top:361.65px;width:235.8px;height:0.5px;background:#ececec;"></div>
<div class="t" style="top:361px;font-size:3.9px;color:#555;right:497px;">1.0</div>
<div style="left:274.2px;top:373.15px;width:235.8px;height:0.5px;background:#ececec;"></div>
<div class="t" style="top:372px;font-size:3.9px;color:#555;right:497px;">0.5</div>
<div style="left:274.2px;top:384.65px;width:235.8px;height:0.5px;background:#ececec;"></div>
<div class="t" style="top:384px;font-size:3.9px;color:#555;right:497px;">0.0</div>
<div style="left:274.2px;top:396.15px;width:235.8px;height:0.5px;background:#ececec;"></div>
<div class="t" style="top:395px;font-size:3.9px;color:#555;right:497px;">-0.5</div>
<div style="left:274.2px;top:407.65px;width:235.8px;height:0.5px;background:#ececec;"></div>
<div class="t" style="top:407px;font-size:3.9px;color:#555;right:497px;">-1.0</div>
<div style="left:274.2px;top:419.15px;width:235.8px;height:0.5px;background:#ececec;"></div>
<div class="t" style="top:418px;font-size:3.9px;color:#555;right:497px;">-1.5</div>
<div style="left:274.2px;top:430.65px;width:235.8px;height:0.5px;background:#ececec;"></div>
<div class="t" style="top:430px;font-size:3.9px;color:#555;right:497px;">-2.0</div>
<div style="left:274.2px;top:442.15px;width:235.8px;height:0.5px;background:#ececec;"></div>
<div class="t" style="top:441px;font-size:3.9px;color:#555;right:497px;">-2.5</div>
<div style="left:274.2px;top:453.65px;width:235.8px;height:0.5px;background:#ececec;"></div>
<div class="t" style="top:453px;font-size:3.9px;color:#555;right:497px;">-3.0</div>
<div style="left:316.65px;top:358.3px;width:0.5px;height:103.3px;background:#ececec;"></div>
<div style="left:358.35px;top:358.3px;width:0.5px;height:103.3px;background:#ececec;"></div>
<div style="left:400.45px;top:358.3px;width:0.5px;height:103.3px;background:#ececec;"></div>
<div style="left:484.35px;top:358.3px;width:0.5px;height:103.3px;background:#ececec;"></div>
<div style="left:441.5px;top:358.3px;width:0.6px;height:103.3px;background:#f4d8c8;"></div>
<div style="left:274.2px;top:358.3px;width:235.8px;height:0.6px;background:#c8c8c8;"></div>
<div style="left:274.2px;top:358.3px;width:0.6px;height:103.3px;background:#c8c8c8;"></div>
<div style="left:274.2px;top:461.6px;width:235.8px;height:0.6px;background:#b8b8b8;"></div>
<div class="t" style="top:467px;font-size:3.7px;color:#555;left:274.2px;transform:translateX(-50%);">10:12:57</div>
<div class="t" style="top:467px;font-size:3.7px;color:#555;left:316.9px;transform:translateX(-50%);">10:13:47</div>
<div class="t" style="top:467px;font-size:3.7px;color:#555;left:358.6px;transform:translateX(-50%);">10:14:37</div>
<div class="t" style="top:467px;font-size:3.7px;color:#555;left:400.7px;transform:translateX(-50%);">10:15:27</div>
<div class="t" style="top:467px;font-size:3.7px;color:#555;left:441.7px;transform:translateX(-50%);">10:16:17</div>
<div class="t" style="top:467px;font-size:3.7px;color:#555;left:484.6px;transform:translateX(-50%);">10:17:07</div>
<div class="t" style="top:476px;font-size:3.8px;color:#555;left:425px;transform:translateX(-50%);">Series Time(UTC) - 2014-07-28</div>
<div class="t" style="left:246.5px;top:410px;font-size:3.8px;color:#555;transform:translate(-50%,-50%) rotate(-90deg)">Heave (m)</div>
<div class="t" style="top:486px;font-size:4.5px;color:#3a7ec8;letter-spacing:-0.14px;left:242.5px;">2014-07-28 13:16:15.001, Heave -0.013 m</div>
<svg style="left:0;top:0" width="768" height="512" viewBox="0 0 768 512"><defs><clipPath id="pc"><rect x="274.5" y="358.5" width="229" height="103"/></clipPath></defs><g clip-path="url(#pc)">
<path d="M274.6,376.6 L275.7,387.2 L276.6,378.0 L278.1,393.2 L279.0,378.0 L280.4,389.5 L281.9,380.3 L283.3,387.2 L284.4,378.0 L285.9,388.3 L286.8,379.1 L288.0,389.5 L289.0,381.4 L290.5,387.2 L291.9,378.0 L292.9,388.3 L294.2,378.0 L295.6,393.2 L296.7,380.3 L297.8,388.3 L299.2,379.1 L300.3,390.6 L301.4,376.6 L302.7,387.2 L304.1,376.6 L305.1,389.5 L306.1,380.3 L307.1,387.2 L307.9,378.0 L308.7,391.8 L309.9,382.6 L311.3,389.5 L312.7,381.4 L313.7,387.2 L314.6,382.6 L315.9,387.2 L317.4,380.3 L318.3,387.2 L319.5,379.1 L320.7,389.5 L322.1,380.3 L323.2,389.5 L324.2,378.0 L325.1,390.6 L326.6,382.6 L327.9,391.8 L329.3,382.6 L330.6,390.6 L331.9,376.6 L332.9,390.6 L334.1,380.3 L335.2,390.6 L336.2,378.0 L337.1,390.6 L338.0,381.4 L339.0,388.3 L340.5,378.0 L341.3,390.6 L342.6,376.6 L344.1,393.2 L345.1,380.3 L346.1,388.3 L347.5,376.6 L348.5,388.3 L349.8,376.6 L351.0,388.3 L352.4,376.6 L353.5,388.3 L354.4,378.0 L355.7,393.2 L356.6,379.1 L357.5,388.3 L358.4,376.6 L359.7,390.6 L360.9,381.4 L362.3,390.6 L363.3,380.3 L364.2,388.3 L365.4,376.6 L366.6,390.6 L367.9,380.3 L369.1,393.2 L370.6,382.6 L371.6,393.2 L372.6,381.4 L373.8,389.5 L374.9,378.0 L376.3,393.2 L377.5,381.4 L378.5,393.2 L379.7,381.4 L381.0,393.2 L382.4,382.6 L383.9,388.3 L384.9,382.6 L385.8,390.6 L386.7,378.0 L388.1,389.5 L389.0,380.3 L390.0,387.2 L391.2,382.6 L392.4,389.5 L393.8,378.0 L394.9,389.5 L395.8,378.0 L396.9,388.3 L398.0,379.1 L399.5,393.2 L400.3,378.0 L401.5,387.2 L402.5,379.1 L403.5,393.2 L404.7,380.3 L405.8,393.2 L407.1,381.4 L408.6,390.6 L409.9,379.1 L411.4,393.2 L412.6,376.6 L413.9,389.5 L415.2,381.4 L416.3,391.8 L417.5,379.1 L418.4,391.8 L419.5,378.0 L420.6,393.2 L421.6,381.4 L422.6,390.6 L423.6,381.4 L424.4,391.8 L425.7,376.6 L427.0,387.2 L428.4,381.4 L429.2,390.6 L430.4,379.1 L431.3,387.2 L432.7,382.6 L434.1,391.8 L435.5,382.6 L436.8,389.5 L438.2,378.0 L439.3,390.6 L440.5,380.3 L441.8,388.3 L443.0,378.0 L444.3,393.2 L445.4,376.6 L446.4,391.8 L447.9,381.4 L448.8,389.5 L449.8,380.3 L450.8,390.6 L451.7,379.1 L452.6,391.8 L454.0,378.0 L455.0,391.8 L456.0,380.3 L457.1,389.5 L458.0,381.4 L458.9,389.5 L460.3,380.3 L461.6,389.5 L462.5,376.6 L463.6,387.2 L464.8,379.1 L465.8,388.3 L467.0,382.6 L467.9,389.5 L469.2,376.6 L470.7,388.3 L471.7,381.4 L472.5,390.6 L473.6,382.6 L474.5,393.2 L475.8,379.1 L476.7,387.2 L477.5,380.3 L478.7,388.3 L480.1,379.1 L481.0,393.2 L482.4,380.3 L483.3,391.8 L484.8,382.6 L485.9,389.5 L487.2,378.0 L488.1,393.2 L489.4,381.4 L490.9,387.2 L491.8,381.4 L493.0,393.2 L494.3,376.6 L495.2,390.6 L496.5,376.6 L497.6,388.3 L498.5,382.6 L499.3,393.2 L500.4,382.6 L501.9,391.8 L502.9,381.4" fill="none" stroke="#88cc78" stroke-width="0.55"/>
<path d="M274.6,396.4 L275.4,413.6 L276.0,430.6 L276.6,421.6 L277.2,410.0 L278.0,397.9 L278.5,422.5 L279.3,425.5 L280.1,429.5 L280.8,405.7 L281.6,400.7 L282.1,414.1 L282.8,429.6 L283.4,444.7 L284.0,402.3 L284.5,400.6 L285.3,422.3 L285.8,438.6 L286.5,422.8 L287.1,400.6 L287.8,460.8 L288.6,420.2 L289.4,436.7 L290.0,425.1 L290.5,398.3 L291.1,407.9 L291.6,368.8 L292.3,440.2 L292.9,407.9 L293.7,397.6 L294.3,408.4 L295.0,415.5 L295.6,410.2 L296.2,391.9 L297.0,386.5 L297.6,400.1 L298.3,417.0 L299.0,407.8 L299.8,385.3 L300.5,378.4 L301.1,396.4 L301.8,415.0 L302.6,413.7 L303.3,393.2 L304.0,379.0 L304.7,390.8 L305.3,415.9 L305.9,405.9 L306.5,382.2 L307.2,386.6 L307.9,395.5 L308.4,417.2 L309.0,413.9 L309.5,392.6 L310.2,383.3 L310.8,394.7 L311.5,407.1 L312.1,413.8 L312.9,390.4 L313.5,384.7 L314.2,401.7 L314.8,416.2 L315.5,398.8 L316.3,386.5 L316.8,391.5 L317.6,409.4 L318.3,407.0 L318.9,397.6 L319.6,381.7 L320.3,391.1 L321.1,413.6 L321.7,407.4 L322.3,384.0 L322.9,357.3 L323.5,411.3 L324.1,425.0 L324.6,426.3 L325.3,392.4 L326.0,393.8 L326.7,408.8 L327.3,427.2 L328.1,409.3 L328.8,393.0 L329.5,403.4 L330.1,419.1 L330.9,416.1 L331.6,385.3 L332.1,400.6 L332.9,419.0 L333.7,419.7 L334.2,403.4 L334.8,393.0 L335.6,404.5 L336.1,416.9 L336.8,422.3 L337.5,398.6 L338.1,391.6 L338.9,403.2 L339.5,415.8 L340.2,423.4 L340.7,398.2 L341.4,391.4 L342.1,393.7 L342.8,406.5 L343.5,416.6 L344.1,406.5 L344.7,391.7 L345.4,395.4 L346.0,416.0 L346.7,419.5 L347.2,398.9 L347.7,435.5 L348.3,399.7 L348.8,403.7 L349.4,406.5 L350.0,402.1 L350.7,392.8 L351.5,396.8 L352.2,403.0 L352.7,406.7 L353.2,404.9 L353.8,396.2 L354.5,395.5 L355.3,400.9 L355.8,408.5 L356.3,406.9 L356.9,399.3 L357.6,398.2 L358.1,402.9 L358.7,408.3 L359.5,408.1 L360.2,403.8 L360.8,394.9 L361.4,399.3 L362.1,406.3 L362.8,408.3 L363.4,406.8 L364.1,399.3 L364.7,399.9 L365.3,404.2 L365.9,409.8 L366.4,406.6 L367.1,397.5 L367.7,397.9 L368.5,409.1 L369.3,411.1 L369.8,407.1 L370.3,400.0 L370.8,399.2 L371.6,408.1 L372.2,409.8 L373.0,405.2 L373.5,397.9 L374.3,400.8 L374.9,408.5 L375.7,413.2 L376.2,405.5 L377.0,400.0 L377.8,403.7 L378.3,409.5 L378.9,410.5 L379.7,405.2 L380.2,402.3 L380.8,403.7 L381.3,412.2 L382.1,411.4 L382.6,403.7 L383.2,403.7 L383.8,408.8 L384.6,415.1 L385.3,409.7 L386.0,402.7 L386.5,403.5 L387.2,410.3 L387.8,412.3 L388.5,404.0 L389.3,403.9 L389.9,414.4 L390.6,416.3 L391.1,412.8 L391.8,410.8 L392.5,411.7 L393.1,415.4 L393.8,416.7 L394.4,414.5 L395.2,411.0 L395.8,412.7 L396.5,417.0 L397.0,416.1 L397.6,410.8 L398.3,409.9 L399.1,412.5 L399.9,415.8 L400.5,416.9 L401.0,415.4 L401.8,442.4 L402.5,412.2 L403.3,416.0 L403.8,391.8 L404.6,400.8 L405.2,395.4 L405.9,390.8 L406.4,402.7 L406.9,405.0 L407.7,401.8 L408.4,394.7 L409.0,399.8 L409.6,406.8 L410.2,405.6 L410.9,404.0 L411.5,395.7 L412.1,397.3 L412.7,404.7 L413.5,409.6 L414.1,400.7 L414.6,395.3 L415.3,401.4 L415.8,408.3 L416.6,408.7 L417.4,399.1 L418.1,394.6 L418.7,404.2 L419.2,410.1 L419.9,406.5 L420.6,401.4 L421.4,400.2 L422.2,407.1 L422.8,412.5 L423.6,408.0 L424.3,403.8 L424.9,399.1 L425.7,402.8 L426.4,410.2 L427.1,413.8 L427.7,407.8 L428.4,402.3 L428.9,401.0 L429.6,407.5 L430.4,415.9 L431.0,406.2 L431.7,400.4 L432.3,408.0 L432.9,415.2 L433.5,413.4 L434.1,406.1 L434.8,402.9 L435.5,411.1 L436.1,414.1 L436.6,410.4 L437.3,406.0 L437.9,405.4 L438.5,412.8 L439.0,413.3 L439.8,408.1 L440.4,433.2 L441.1,407.2 L441.7,411.3 L442.4,411.1 L442.9,403.7 L443.5,403.6 L444.2,410.1 L444.8,413.6 L445.6,410.3 L446.2,401.7 L446.9,405.4 L447.4,410.1 L448.0,412.3 L448.5,406.8 L449.2,382.6 L450.0,407.7 L450.6,414.5 L451.1,408.9 L451.6,403.0 L452.3,404.9 L453.0,409.2 L453.6,412.5 L454.3,409.7 L454.9,403.1 L455.5,402.9 L456.3,428.6 L457.1,412.9 L457.7,410.6 L458.2,402.2 L459.0,406.2 L459.7,411.0 L460.4,412.4 L461.1,412.3 L461.7,404.6 L462.4,402.4 L463.1,406.6 L463.8,411.8 L464.5,412.4 L465.3,407.3 L465.8,401.2 L466.3,403.5 L466.8,411.7 L467.5,412.6 L468.1,403.5 L468.8,403.8 L469.3,410.7 L469.8,414.7 L470.4,405.5 L471.2,402.0 L471.7,406.8 L472.4,414.0 L473.0,409.3 L473.7,403.8 L474.3,406.4 L474.8,411.8 L475.4,411.7 L475.9,402.4 L476.7,401.5 L477.4,406.4 L477.9,413.7 L478.5,414.3 L479.2,408.8 L479.7,400.1 L480.3,406.2 L480.8,412.8 L481.6,411.5 L482.3,403.4 L483.0,403.4 L483.6,409.4 L484.3,413.0 L484.9,412.5 L485.5,407.1 L486.1,403.2 L486.9,405.6 L487.4,412.7 L488.1,411.2 L488.7,403.0 L489.3,401.8 L489.8,409.8 L490.5,413.6 L491.0,411.2 L491.8,402.7 L492.3,404.0 L493.1,410.5 L493.7,413.4 L494.4,410.8 L495.0,403.3 L495.5,401.0 L496.1,405.6 L496.7,412.7 L497.4,416.1 L498.0,407.6 L498.6,401.5 L499.3,402.8 L499.9,410.1 L500.7,413.2 L501.4,410.2 L501.9,403.7 L502.4,402.2 L503.1,404.7 L503.7,410.6" fill="none" stroke="#e890d8" stroke-width="0.55"/>
<path d="M274.5,384.9 H504" stroke="#1c2a90" stroke-width="0.7"/>
<rect x="440.5" y="383.6" width="2.4" height="2.4" fill="#2030b0"/>
</g></svg>
<div style="left:132px;top:494px;width:621px;height:0.6px;background:#d4d4d4;"></div>
<div style="left:131px;top:494px;width:31.5px;height:7.3px;background:#e2e2e2;border:0.5px solid #d0d0d0;box-sizing:border-box;"></div>
<div class="t" style="top:497px;font-size:4.5px;color:#222;letter-spacing:-0.14px;left:146.75px;transform:translateX(-50%);">Slice Editor</div>
<div style="left:162.5px;top:494px;width:34.5px;height:7.3px;background:#e2e2e2;border:0.5px solid #d0d0d0;box-sizing:border-box;"></div>
<div class="t" style="top:497px;font-size:4.5px;color:#222;letter-spacing:-0.14px;left:179.75px;transform:translateX(-50%);">Swath Editor</div>
<div style="left:197px;top:494px;width:37.5px;height:7.3px;background:#e2e2e2;border:0.5px solid #d0d0d0;box-sizing:border-box;"></div>
<div class="t" style="top:497px;font-size:4.5px;color:#222;letter-spacing:-0.14px;left:215.75px;transform:translateX(-50%);">Water Column</div>
<div style="left:234.5px;top:493.6px;width:50.0px;height:8.6px;background:#fbfbfb;border:0.5px solid #d0d0d0;box-sizing:border-box;"></div>
<div class="t" style="top:498px;font-size:4.5px;color:#222;letter-spacing:-0.14px;left:259.5px;transform:translateX(-50%);">Time Series Multiplot</div>
<div style="left:284.5px;top:494px;width:32.5px;height:7.3px;background:#e2e2e2;border:0.5px solid #d0d0d0;box-sizing:border-box;"></div>
<div class="t" style="top:497px;font-size:4.5px;color:#222;letter-spacing:-0.14px;left:300.75px;transform:translateX(-50%);">ENC Editor</div>
<div style="left:317px;top:494px;width:41px;height:7.3px;background:#e2e2e2;border:0.5px solid #d0d0d0;box-sizing:border-box;"></div>
<div class="t" style="top:497px;font-size:4.5px;color:#222;letter-spacing:-0.14px;left:337.5px;transform:translateX(-50%);">Time Series Editor</div>
<div style="left:358px;top:494px;width:33.5px;height:7.3px;background:#e2e2e2;border:0.5px solid #d0d0d0;box-sizing:border-box;"></div>
<div class="t" style="top:497px;font-size:4.5px;color:#222;letter-spacing:-0.14px;left:374.75px;transform:translateX(-50%);">Geo Picking</div>
<div class="t" style="top:46px;font-size:4.5px;color:#222;letter-spacing:-0.14px;left:652.3px;">Vertical Exaggeration:</div>
<div style="left:702.8px;top:43px;width:47.7px;height:6.7px;background:#fff;border:0.6px solid #c0c0c0;box-sizing:border-box;"></div>
<div class="t" style="top:46px;font-size:4.5px;color:#333;letter-spacing:-0.14px;right:27px;">3.01 ×</div>
<svg style="left:745.8px;top:43.6px" width="4" height="5.5" viewBox="0 0 4 5.5"><path d="M0.5,2.2 L2,0.6 L3.5,2.2Z M0.5,3.4 L2,5 L3.5,3.4Z" fill="#444"/></svg>
<div style="left:652px;top:52.6px;width:98.5px;height:176.9px;background:#fff;border:0.6px solid #d6d6d6;box-sizing:border-box;"></div>
<div style="left:653px;top:72px;width:97px;height:5.6px;background:#ececec;"></div>
<div style="left:653.0999999999999px;top:53.9px;width:5.4px;height:5.2px;background:#fff;border:0.5px solid #d2d2d2;box-sizing:border-box;"></div>
<svg style="left:654.3px;top:54.6px" width="3.4" height="3.8" viewBox="0 0 3.4 3.8"><path d="M0.5,2.0 L1.4,3.2 L3.0,0.5" fill="none" stroke="#1a1a1a" stroke-width="0.9"/></svg>
<div class="t" style="top:56px;font-size:4.5px;color:#111;font-weight:bold;letter-spacing:-0.14px;left:661px;">Dynamic Surfaces</div>
<div style="left:661.3px;top:59.9px;width:5.4px;height:5.2px;background:#fff;border:0.5px solid #d2d2d2;box-sizing:border-box;"></div>
<div class="t" style="top:62px;font-size:4.5px;color:#555;letter-spacing:-0.14px;left:669px;">DynamicSurface</div>
<div style="left:661.3px;top:66.0px;width:5.4px;height:5.2px;background:#fff;border:0.5px solid #d2d2d2;box-sizing:border-box;"></div>
<div class="t" style="top:68px;font-size:4.5px;color:#555;letter-spacing:-0.14px;left:669px;">DynamicSurface-2</div>
<div style="left:661.3px;top:72.2px;width:5.4px;height:5.2px;background:#fff;border:0.5px solid #d2d2d2;box-sizing:border-box;"></div>
<svg style="left:662.5px;top:72.89999999999999px" width="3.4" height="3.8" viewBox="0 0 3.4 3.8"><path d="M0.5,2.0 L1.4,3.2 L3.0,0.5" fill="none" stroke="#1a1a1a" stroke-width="0.9"/></svg>
<div class="t" style="top:74px;font-size:4.5px;color:#555;letter-spacing:-0.14px;left:669px;">DynamicSurface-3</div>
<div style="left:653.0999999999999px;top:78.4px;width:5.4px;height:5.2px;background:#fff;border:0.5px solid #d2d2d2;box-sizing:border-box;"></div>
<svg style="left:654.3px;top:79.1px" width="3.4" height="3.8" viewBox="0 0 3.4 3.8"><path d="M0.5,2.0 L1.4,3.2 L3.0,0.5" fill="none" stroke="#1a1a1a" stroke-width="0.9"/></svg>
<div class="t" style="top:80px;font-size:4.5px;color:#111;font-weight:bold;letter-spacing:-0.14px;left:661px;">Static Surfaces</div>
<div style="left:653.0999999999999px;top:84.5px;width:5.4px;height:5.2px;background:#fff;border:0.5px solid #d2d2d2;box-sizing:border-box;"></div>
<svg style="left:654.3px;top:85.19999999999999px" width="3.4" height="3.8" viewBox="0 0 3.4 3.8"><path d="M0.5,2.0 L1.4,3.2 L3.0,0.5" fill="none" stroke="#1a1a1a" stroke-width="0.9"/></svg>
<div class="t" style="top:86px;font-size:4.5px;color:#111;font-weight:bold;letter-spacing:-0.14px;left:661px;">PFM Objects</div>
<div style="left:653.0999999999999px;top:90.60000000000001px;width:5.4px;height:5.2px;background:#fff;border:0.5px solid #d2d2d2;box-sizing:border-box;"></div>
<svg style="left:654.3px;top:91.3px" width="3.4" height="3.8" viewBox="0 0 3.4 3.8"><path d="M0.5,2.0 L1.4,3.2 L3.0,0.5" fill="none" stroke="#1a1a1a" stroke-width="0.9"/></svg>
<div class="t" style="top:93px;font-size:4.5px;color:#111;font-weight:bold;letter-spacing:-0.14px;left:661px;">Sd Objects</div>
<div style="left:653.0999999999999px;top:96.80000000000001px;width:5.4px;height:5.2px;background:#fff;border:0.5px solid #d2d2d2;box-sizing:border-box;"></div>
<div class="t" style="top:99px;font-size:4.5px;color:#111;font-weight:bold;letter-spacing:-0.14px;left:661px;">Background Charts</div>
<div style="left:653.0999999999999px;top:102.9px;width:5.4px;height:5.2px;background:#fff;border:0.5px solid #d2d2d2;box-sizing:border-box;"></div>
<div class="t" style="top:105px;font-size:4.5px;color:#111;font-weight:bold;letter-spacing:-0.14px;left:661px;">Charts</div>
<svg style="left:744.3px;top:60px" width="5" height="5" viewBox="0 0 5 5"><circle cx="2.55" cy="2.5" r="2.0" fill="none" stroke="#262626" stroke-width="0.8"/></svg>
<div style="left:725px;top:233.4px;width:25.5px;height:6.6px;background:linear-gradient(#fbfbfb,#efefef);border:0.6px solid #d2d2d2;box-sizing:border-box;"></div>
<svg style="left:745.8px;top:235.89999999999998px" width="2.4" height="1.6" viewBox="0 0 2.4 1.6"><path d="M0,0 H2.4 L1.2,1.6Z" fill="#555"/></svg>
<div style="left:725px;top:244px;width:25.5px;height:7px;background:linear-gradient(#fbfbfb,#efefef);border:0.6px solid #d2d2d2;box-sizing:border-box;"></div>
<svg style="left:745.8px;top:246.7px" width="2.4" height="1.6" viewBox="0 0 2.4 1.6"><path d="M0,0 H2.4 L1.2,1.6Z" fill="#555"/></svg>
<div style="left:725px;top:254.5px;width:25.5px;height:7.0px;background:#fff;border:0.6px solid #d2d2d2;box-sizing:border-box;"></div>
<svg style="left:745.8px;top:257.2px" width="2.4" height="1.6" viewBox="0 0 2.4 1.6"><path d="M0,0 H2.4 L1.2,1.6Z" fill="#555"/></svg>
<div style="left:737px;top:256.0px;width:7px;height:4.0px;background:#e03a10;"></div>
<div style="left:725px;top:265px;width:25.5px;height:7px;background:linear-gradient(#fbfbfb,#efefef);border:0.6px solid #d2d2d2;box-sizing:border-box;"></div>
<svg style="left:745.8px;top:267.7px" width="2.4" height="1.6" viewBox="0 0 2.4 1.6"><path d="M0,0 H2.4 L1.2,1.6Z" fill="#555"/></svg>
<div style="left:725px;top:276px;width:25.5px;height:7px;background:linear-gradient(#fbfbfb,#efefef);border:0.6px solid #d2d2d2;box-sizing:border-box;"></div>
<svg style="left:745.8px;top:278.7px" width="2.4" height="1.6" viewBox="0 0 2.4 1.6"><path d="M0,0 H2.4 L1.2,1.6Z" fill="#555"/></svg>
<div style="left:725px;top:286px;width:25.5px;height:7px;background:#fff;border:0.6px solid #d2d2d2;box-sizing:border-box;"></div>
<div style="left:725px;top:297px;width:25.5px;height:7px;background:#fff;border:0.6px solid #d2d2d2;box-sizing:border-box;"></div>
<svg style="left:746px;top:297.8px" width="4" height="5.5" viewBox="0 0 4 5.5"><path d="M0.5,2.2 L2,0.6 L3.5,2.2Z M0.5,3.4 L2,5 L3.5,3.4Z" fill="#444"/></svg>
<div class="t" style="top:299px;font-size:4.0px;color:#444;right:24px;">0%</div>
<div style="left:725px;top:308px;width:25.5px;height:7px;background:#fff;border:0.6px solid #d2d2d2;box-sizing:border-box;"></div>
<svg style="left:746px;top:308.8px" width="4" height="5.5" viewBox="0 0 4 5.5"><path d="M0.5,2.2 L2,0.6 L3.5,2.2Z M0.5,3.4 L2,5 L3.5,3.4Z" fill="#444"/></svg>
<div class="t" style="top:310px;font-size:4.0px;color:#444;right:24px;">00</div>
<div style="left:725px;top:318px;width:25.5px;height:7.6px;background:linear-gradient(#fbfbfb,#efefef);border:0.6px solid #d2d2d2;box-sizing:border-box;"></div>
<svg style="left:745.8px;top:321.0px" width="2.4" height="1.6" viewBox="0 0 2.4 1.6"><path d="M0,0 H2.4 L1.2,1.6Z" fill="#555"/></svg>
<div style="left:737px;top:328px;width:16px;height:0.6px;background:#dddddd;"></div>
<svg style="left:742.5px;top:332.5px" width="10" height="4" viewBox="0 0 10 4"><rect x="0.3" y="0.3" width="3.4" height="3.4" rx="0.6" fill="#ddd" stroke="#777" stroke-width="0.5"/><rect x="5" y="0.3" width="3.4" height="3.4" rx="0.6" fill="#ddd" stroke="#777" stroke-width="0.5"/></svg>
<svg style="left:742.8px;top:344.6px" width="4" height="2.6" viewBox="0 0 4 2.6"><path d="M0.4,0.4 L2,2 L3.6,0.4" fill="none" stroke="#333" stroke-width="0.8"/></svg>
<div style="left:725px;top:354.2px;width:25.9px;height:125.3px;background:#fff;border:0.6px solid #c8c8c8;box-sizing:border-box;"></div>
<div style="left:750.5px;top:33px;width:2.5px;height:461px;background:#e8e8e8;"></div>
<div class="t" style="top:486px;font-size:4.5px;color:#222;letter-spacing:-0.14px;left:641.7px;">Offset:</div>
<div style="left:657.7px;top:483.5px;width:35.0px;height:7.0px;background:#fff;border:0.6px solid #c0c0c0;box-sizing:border-box;"></div>
<div class="t" style="top:486px;font-size:4.5px;color:#333;letter-spacing:-0.14px;right:81px;">0.00 m</div>
<svg style="left:688.5px;top:484px" width="4" height="5.5" viewBox="0 0 4 5.5"><path d="M0.5,2.2 L2,0.6 L3.5,2.2Z M0.5,3.4 L2,5 L3.5,3.4Z" fill="#444"/></svg>
<div class="t" style="top:486px;font-size:4.5px;color:#222;letter-spacing:-0.14px;left:706.7px;">Scaling:</div>
<div style="left:725px;top:483.5px;width:25.5px;height:7.0px;background:#fff;border:0.6px solid #c0c0c0;box-sizing:border-box;"></div>
<div class="t" style="top:486px;font-size:4.5px;color:#333;letter-spacing:-0.14px;right:24px;">1.00×</div>
<svg style="left:746px;top:484px" width="4" height="5.5" viewBox="0 0 4 5.5"><path d="M0.5,2.2 L2,0.6 L3.5,2.2Z M0.5,3.4 L2,5 L3.5,3.4Z" fill="#444"/></svg>
<div style="left:753px;top:33px;width:14px;height:479px;background:#f3f3f3;"></div>
<div style="left:753px;top:33px;width:0.6px;height:461px;background:#dcdcdc;"></div>
<div style="left:753.8px;top:37.400000000000006px;width:12.7px;height:12.6px;background:#dedede;border:0.5px solid #d2d2d2;box-sizing:border-box;"></div>
<svg style="left:756.5px;top:39.7px" width="8" height="8" viewBox="0 0 8 8"><rect x="0.8" y="0.8" width="2.9" height="2.9" fill="#777"/><rect x="4.3" y="0.8" width="2.9" height="2.9" fill="#777"/><rect x="0.8" y="4.3" width="2.9" height="2.9" fill="#777"/><rect x="4.3" y="4.3" width="2.9" height="2.9" fill="#777"/></svg>
<svg style="left:756.5px;top:51.4px" width="8" height="8" viewBox="0 0 8 8"><path d="M0,4 Q4,0.6 8,4 Q4,7.4 0,4Z" fill="#6a6a6a"/><ellipse cx="4" cy="4" rx="2.6" ry="0.9" fill="#aaa"/></svg>
<svg style="left:756.5px;top:65px" width="8" height="8" viewBox="0 0 8 8"><path d="M0.5,0.5 L2.5,2.5 M7.5,0.5 L5.5,2.5 M0.5,7.5 L2.5,5.5 M7.5,7.5 L5.5,5.5" stroke="#333" stroke-width="0.8"/><rect x="2" y="2.5" width="4" height="3.5" fill="#666"/></svg>
<svg style="left:756.5px;top:76.5px" width="8" height="8" viewBox="0 0 8 8"><path d="M0.5,0.5 L2.5,2.5 M7.5,0.5 L5.5,2.5 M0.5,7.5 L2.5,5.5 M7.5,7.5 L5.5,5.5" stroke="#333" stroke-width="0.8"/><rect x="2.3" y="2.3" width="3.4" height="3.4" fill="none" stroke="#555" stroke-width="0.6"/></svg>
<div style="left:753.8px;top:88.7px;width:12.7px;height:12.6px;background:#dedede;border:0.5px solid #d2d2d2;box-sizing:border-box;"></div>
<svg style="left:756.5px;top:91px" width="8" height="8" viewBox="0 0 8 8"><path d="M1.5,0.8 L6.5,4.5 L4.3,4.8 L5.6,7.4 L4.6,7.8 L3.4,5.3 L1.8,6.6Z" fill="#222"/></svg>
<svg style="left:756.5px;top:104.8px" width="8" height="8" viewBox="0 0 8 8"><rect x="1" y="1" width="6" height="6" fill="none" stroke="#444" stroke-width="0.7"/><rect x="3.4" y="3.4" width="1.2" height="1.2" fill="#333"/></svg>
<svg style="left:756.5px;top:116.5px" width="8" height="8" viewBox="0 0 8 8"><path d="M4,0.6 L7.4,3.8 L5.4,7.4 L1.4,6.4 L0.6,2.6Z" fill="none" stroke="#444" stroke-width="0.7"/></svg>
<svg style="left:756.5px;top:128px" width="8" height="8" viewBox="0 0 8 8"><path d="M2,0.8 Q6.5,0 7,4 Q7,7.4 4,7.2 Q1,7 0.8,4 Z" fill="none" stroke="#444" stroke-width="0.7"/></svg>
<svg style="left:756.5px;top:139.5px" width="8" height="8" viewBox="0 0 8 8"><rect x="1" y="1" width="6" height="6" fill="none" stroke="#444" stroke-width="0.7"/><path d="M2.5,5 H5.5" stroke="#444" stroke-width="0.6"/></svg>
<svg style="left:756.5px;top:151px" width="8" height="8" viewBox="0 0 8 8"><rect x="1" y="1" width="6" height="6" fill="none" stroke="#444" stroke-width="0.7"/><path d="M1,3 H7 M3,3 V7" stroke="#444" stroke-width="0.5"/></svg>
<svg style="left:756.5px;top:163px" width="8" height="8" viewBox="0 0 8 8"><path d="M1,1 L7,7 M7,1 L1,7 M4,0.5 V7.5" stroke="#555" stroke-width="0.6"/></svg>
<svg style="left:756.5px;top:178px" width="8" height="8" viewBox="0 0 8 8"><circle cx="4" cy="4" r="3" fill="#666"/><path d="M1,4 H7 M4,1 V7" stroke="#ccc" stroke-width="0.5"/></svg>
<svg style="left:756.5px;top:189.5px" width="8" height="8" viewBox="0 0 8 8"><path d="M0.5,7.5 V3 L2.5,4.5 L4,2 L5.5,4 L7.5,1.5 V7.5Z" fill="#333"/></svg>
<svg style="left:756.5px;top:200.6px" width="8" height="8" viewBox="0 0 8 8"><path d="M1,6.5 L6.5,1 L7.5,2 L2,7.5Z" fill="none" stroke="#555" stroke-width="0.6"/></svg>
<div style="left:753.8px;top:211.2px;width:12.7px;height:12.6px;background:#dedede;border:0.5px solid #d2d2d2;box-sizing:border-box;"></div>
<svg style="left:756.5px;top:213.5px" width="8" height="8" viewBox="0 0 8 8"><rect x="0.5" y="2" width="7" height="4" fill="#3a6ad0"/><rect x="0.5" y="2" width="2.4" height="4" fill="#d04030"/><rect x="2.9" y="2" width="2.4" height="4" fill="#40b040"/></svg>
<svg style="left:756.5px;top:225.5px" width="8" height="8" viewBox="0 0 8 8"><circle cx="4" cy="4" r="3" fill="#bbb"/><path d="M1,3 Q4,5 7,3 M1,5 Q4,7 7,5" stroke="#999" stroke-width="0.4" fill="none"/></svg>
<svg style="left:756.5px;top:237px" width="8" height="8" viewBox="0 0 8 8"><ellipse cx="4" cy="4" rx="3.2" ry="1.8" fill="none" stroke="#444" stroke-width="0.8"/></svg>
<svg style="left:756.5px;top:248.5px" width="8" height="8" viewBox="0 0 8 8"><path d="M4,0.5 V7.5 M1,2.5 H7 M1,2.5 V5 M7,2.5 V5 M2,7.5 H6" stroke="#333" stroke-width="0.6" fill="none"/></svg>
<div style="left:1px;top:502px;width:766px;height:9px;background:#f0f0f0;"></div>
<div style="left:0px;top:511px;width:768px;height:1px;background:#c8c8c8;"></div>
<div class="t" style="top:506px;font-size:4.5px;color:#222;letter-spacing:-0.14px;left:5px;">Information not available.</div>
<div class="t" style="top:506px;font-size:4.5px;color:#222;letter-spacing:-0.14px;left:422.7px;">Auto Import: OFF</div>
<div class="t" style="top:506px;font-size:4.5px;color:#222;letter-spacing:-0.14px;left:651px;">Tiles Loading:</div>
<div class="t" style="top:506px;font-size:4.5px;color:#222;letter-spacing:-0.14px;left:686px;transform:translateX(-50%);">0</div>
<div style="left:694.2px;top:504.3px;width:2.4px;height:4.6px;border-radius:1px;background:#30c030"></div>
<svg style="left:697px;top:504.3px" width="29" height="5" viewBox="0 0 29 5"><rect x="0.30" y="0.3" width="2.3" height="4.2" rx="0.7" fill="#f8f8f8" stroke="#b4b4b4" stroke-width="0.45"/><rect x="3.15" y="0.3" width="2.3" height="4.2" rx="0.7" fill="#f8f8f8" stroke="#b4b4b4" stroke-width="0.45"/><rect x="6.00" y="0.3" width="2.3" height="4.2" rx="0.7" fill="#f8f8f8" stroke="#b4b4b4" stroke-width="0.45"/><rect x="8.85" y="0.3" width="2.3" height="4.2" rx="0.7" fill="#f8f8f8" stroke="#b4b4b4" stroke-width="0.45"/><rect x="11.70" y="0.3" width="2.3" height="4.2" rx="0.7" fill="#f8f8f8" stroke="#b4b4b4" stroke-width="0.45"/><rect x="14.55" y="0.3" width="2.3" height="4.2" rx="0.7" fill="#f8f8f8" stroke="#b4b4b4" stroke-width="0.45"/><rect x="17.40" y="0.3" width="2.3" height="4.2" rx="0.7" fill="#f8f8f8" stroke="#b4b4b4" stroke-width="0.45"/><rect x="20.25" y="0.3" width="2.3" height="4.2" rx="0.7" fill="#f8f8f8" stroke="#b4b4b4" stroke-width="0.45"/><rect x="23.10" y="0.3" width="2.3" height="4.2" rx="0.7" fill="#f8f8f8" stroke="#b4b4b4" stroke-width="0.45"/><rect x="25.95" y="0.3" width="2.3" height="4.2" rx="0.7" fill="#f8f8f8" stroke="#b4b4b4" stroke-width="0.45"/></svg>
<div class="t" style="top:506px;font-size:4.5px;color:#222;letter-spacing:-0.14px;left:727.5px;">863.7 MB</div>
<svg style="left:752.5px;top:503.5px" width="6" height="5" viewBox="0 0 6 5"><path d="M0.5,2.6 L2.2,4.3 L5.5,0.6" fill="none" stroke="#2a8a2a" stroke-width="0.9"/></svg>
<div style="left:503.5px;top:127.5px;width:233.7px;height:354.2px;box-shadow:0 1px 5px rgba(0,0,0,0.28)"></div>
<div style="left:503.5px;top:127.5px;width:233.7px;height:354.3px;background:#f0f0f0;border:0.7px solid #78acd8;box-sizing:border-box;"></div>
<div style="left:504.2px;top:128.2px;width:232.3px;height:10.8px;background:#ffffff;"></div>
<div style="left:507.2px;top:130.4px;width:5.6px;height:5.8px;background:#336e96"></div>
<svg style="left:507.2px;top:130.4px" width="5.6" height="5.8" viewBox="0 0 5.6 5.8"><path d="M1.2,0.9 H2.4 M1.2,0.9 V4.9 M3.2,0.9 H4.5 V4.9" stroke="#05050c" stroke-width="1" fill="none"/></svg>
<div class="t" style="top:133px;font-size:4.6px;color:#222;letter-spacing:-0.14px;left:515.5px;">Dry Run</div>
<div class="t" style="top:133px;font-size:4.6px;color:#333;letter-spacing:-0.14px;left:710.6px;transform:translateX(-50%);">?</div>
<svg style="left:725.8px;top:131.2px" width="4.6" height="4.4" viewBox="0 0 4.6 4.4"><path d="M0.4,0.4 L4.2,4 M4.2,0.4 L0.4,4" stroke="#333" stroke-width="0.65"/></svg>
<div class="t" style="top:146px;font-size:4.5px;color:#222;letter-spacing:-0.14px;left:509px;">Result:</div>
<div style="left:509px;top:150px;width:222.8px;height:306.3px;background:#ececec;border:0.6px solid #dadada;box-sizing:border-box;"></div>
<div style="left:513px;top:154px;width:214.3px;height:297.7px;background:#ffffff;border:0.6px solid #d0d0d0;box-sizing:border-box;"></div>
<div class="t" style="top:163px;font-size:4.5px;color:#333;left:514.8px;">**************************************************************</div>
<div class="t" style="top:168px;font-size:4.5px;color:#303030;letter-spacing:-0.14px;left:514.8px;-webkit-text-stroke:0.04px currentColor">20140728_131305_SMB Owen.s7k</div>
<div class="t" style="top:173px;font-size:4.5px;color:#303030;letter-spacing:-0.14px;left:514.8px;-webkit-text-stroke:0.04px currentColor">Load Solution: OK</div>
<div class="t" style="top:178px;font-size:4.5px;color:#303030;letter-spacing:-0.14px;left:514.8px;-webkit-text-stroke:0.04px currentColor">Load Solution: OK</div>
<div class="t" style="top:188px;font-size:4.5px;color:#303030;letter-spacing:-0.14px;left:514.8px;-webkit-text-stroke:0.04px currentColor">Processing Settings &gt; &gt; &gt; &gt; &gt;</div>
<div class="t" style="top:193px;font-size:4.5px;color:#303030;letter-spacing:-0.14px;left:514.8px;-webkit-text-stroke:0.04px currentColor">Vessel Name</div>
<div class="t" style="top:193px;font-size:4.5px;color:#303030;letter-spacing:-0.14px;left:559.3px;-webkit-text-stroke:0.04px currentColor">: v1</div>
<div class="t" style="top:198px;font-size:4.5px;color:#303030;letter-spacing:-0.14px;left:514.8px;-webkit-text-stroke:0.04px currentColor">Vessel Time Stamp</div>
<div class="t" style="top:198px;font-size:4.5px;color:#303030;letter-spacing:-0.14px;left:562.7px;-webkit-text-stroke:0.04px currentColor">: 2014-07-28 13:12:57</div>
<div class="t" style="top:208px;font-size:4.5px;color:#303030;letter-spacing:-0.14px;left:514.8px;-webkit-text-stroke:0.04px currentColor">SVP Mode</div>
<div class="t" style="top:208px;font-size:4.5px;color:#303030;letter-spacing:-0.14px;left:557.7px;-webkit-text-stroke:0.04px currentColor">: Real Time Scheduling</div>
<div class="t" style="top:213px;font-size:4.5px;color:#303030;letter-spacing:-0.14px;left:514.8px;-webkit-text-stroke:0.04px currentColor">SVP Specific</div>
<div class="t" style="top:213px;font-size:4.5px;color:#303030;letter-spacing:-0.14px;left:557.7px;-webkit-text-stroke:0.04px currentColor">: SVP_00001</div>
<div class="t" style="top:218px;font-size:4.5px;color:#303030;letter-spacing:-0.14px;left:514.8px;-webkit-text-stroke:0.04px currentColor">SVP use surface sound speed: No</div>
<div class="t" style="top:223px;font-size:4.5px;color:#303030;letter-spacing:-0.14px;left:514.8px;-webkit-text-stroke:0.04px currentColor">SVP use harmonic sound speed: No</div>
<div class="t" style="top:228px;font-size:4.5px;color:#303030;letter-spacing:-0.14px;left:514.8px;-webkit-text-stroke:0.04px currentColor">SVP use turbo raytrace</div>
<div class="t" style="top:228px;font-size:4.5px;color:#303030;letter-spacing:-0.14px;left:565.3px;-webkit-text-stroke:0.04px currentColor">: No, 0.10</div>
<div class="t" style="top:233px;font-size:4.5px;color:#303030;letter-spacing:-0.14px;left:514.8px;-webkit-text-stroke:0.04px currentColor">SVP constant velocity manual: 1500.0</div>
<div class="t" style="top:243px;font-size:4.5px;color:#303030;letter-spacing:-0.14px;left:514.8px;-webkit-text-stroke:0.04px currentColor">Heighting Mode</div>
<div class="t" style="top:243px;font-size:4.5px;color:#303030;letter-spacing:-0.14px;left:564.5px;-webkit-text-stroke:0.04px currentColor">: GNSS</div>
<div class="t" style="top:248px;font-size:4.5px;color:#303030;letter-spacing:-0.14px;left:514.8px;-webkit-text-stroke:0.04px currentColor">VRF use offset</div>
<div class="t" style="top:248px;font-size:4.5px;color:#303030;letter-spacing:-0.14px;left:559.8px;-webkit-text-stroke:0.04px currentColor">: No</div>
<div class="t" style="top:253px;font-size:4.5px;color:#303030;letter-spacing:-0.14px;left:514.8px;-webkit-text-stroke:0.04px currentColor">VRF offset</div>
<div class="t" style="top:253px;font-size:4.5px;color:#303030;letter-spacing:-0.14px;left:556px;-webkit-text-stroke:0.04px currentColor">: 0.00</div>
<div class="t" style="top:258px;font-size:4.5px;color:#303030;letter-spacing:-0.14px;left:514.8px;-webkit-text-stroke:0.04px currentColor">VRF offset SD</div>
<div class="t" style="top:258px;font-size:4.5px;color:#303030;letter-spacing:-0.14px;left:559.4px;-webkit-text-stroke:0.04px currentColor">: 0.05</div>
<div class="t" style="top:263px;font-size:4.5px;color:#303030;letter-spacing:-0.14px;left:514.8px;-webkit-text-stroke:0.04px currentColor">VRF use model</div>
<div class="t" style="top:263px;font-size:4.5px;color:#303030;letter-spacing:-0.14px;left:561.3px;-webkit-text-stroke:0.04px currentColor">: No</div>
<div class="t" style="top:268px;font-size:4.5px;color:#303030;letter-spacing:-0.14px;left:514.8px;-webkit-text-stroke:0.04px currentColor">VRF model</div>
<div class="t" style="top:268px;font-size:4.5px;color:#303030;letter-spacing:-0.14px;left:558.5px;-webkit-text-stroke:0.04px currentColor">: </div>
<div class="t" style="top:273px;font-size:4.5px;color:#303030;letter-spacing:-0.14px;left:514.8px;-webkit-text-stroke:0.04px currentColor">VRF SD</div>
<div class="t" style="top:273px;font-size:4.5px;color:#303030;letter-spacing:-0.14px;left:554.5px;-webkit-text-stroke:0.04px currentColor">: 0.10</div>
<div class="t" style="top:278px;font-size:4.5px;color:#303030;letter-spacing:-0.14px;left:514.8px;-webkit-text-stroke:0.04px currentColor">Tide SD</div>
<div class="t" style="top:278px;font-size:4.5px;color:#303030;letter-spacing:-0.14px;left:553.5px;-webkit-text-stroke:0.04px currentColor">: 0.10</div>
<div class="t" style="top:283px;font-size:4.5px;color:#303030;letter-spacing:-0.14px;left:514.8px;-webkit-text-stroke:0.04px currentColor">Draft SD</div>
<div class="t" style="top:283px;font-size:4.5px;color:#303030;letter-spacing:-0.14px;left:556.4px;-webkit-text-stroke:0.04px currentColor">: 0.05</div>
<div class="t" style="top:288px;font-size:4.5px;color:#303030;letter-spacing:-0.14px;left:514.8px;-webkit-text-stroke:0.04px currentColor">Squat SD</div>
<div class="t" style="top:288px;font-size:4.5px;color:#303030;letter-spacing:-0.14px;left:556.4px;-webkit-text-stroke:0.04px currentColor">: 0.05</div>
<div class="t" style="top:293px;font-size:4.5px;color:#303030;letter-spacing:-0.14px;left:514.8px;-webkit-text-stroke:0.04px currentColor">Squat SD</div>
<div class="t" style="top:293px;font-size:4.5px;color:#303030;letter-spacing:-0.14px;left:556.4px;-webkit-text-stroke:0.04px currentColor">: 0.05</div>
<div class="t" style="top:303px;font-size:4.5px;color:#303030;letter-spacing:-0.14px;left:514.8px;-webkit-text-stroke:0.04px currentColor">Input Data Availability &gt; &gt; &gt; &gt; &gt;</div>
<div class="t" style="top:308px;font-size:4.5px;color:#303030;letter-spacing:-0.14px;left:514.8px;-webkit-text-stroke:0.04px currentColor">Position inputs: OK</div>
<div class="t" style="top:313px;font-size:4.5px;color:#303030;letter-spacing:-0.14px;left:545.7px;-webkit-text-stroke:0.04px currentColor">sbet (28072014_PPP_SBET.out)</div>
<div class="t" style="top:318px;font-size:4.5px;color:#303030;letter-spacing:-0.14px;left:545.7px;-webkit-text-stroke:0.04px currentColor">Position 1</div>
<div class="t" style="top:323px;font-size:4.5px;color:#303030;letter-spacing:-0.14px;left:514.8px;-webkit-text-stroke:0.04px currentColor">Motion inputs: OK</div>
<div class="t" style="top:328px;font-size:4.5px;color:#303030;letter-spacing:-0.14px;left:545.7px;-webkit-text-stroke:0.04px currentColor">Motion 1</div>
<div class="t" style="top:333px;font-size:4.5px;color:#303030;letter-spacing:-0.14px;left:514.8px;-webkit-text-stroke:0.04px currentColor">Heading inputs: OK</div>
<div class="t" style="top:338px;font-size:4.5px;color:#303030;letter-spacing:-0.14px;left:545.7px;-webkit-text-stroke:0.04px currentColor">Motion 1</div>
<div class="t" style="top:343px;font-size:4.5px;color:#303030;letter-spacing:-0.14px;left:514.8px;-webkit-text-stroke:0.04px currentColor">Height inputs: OK</div>
<div class="t" style="top:348px;font-size:4.5px;color:#303030;letter-spacing:-0.14px;left:545.7px;-webkit-text-stroke:0.04px currentColor">sbet (28072014_PPP_SBET.out)</div>
<div class="t" style="top:353px;font-size:4.5px;color:#303030;letter-spacing:-0.14px;left:545.7px;-webkit-text-stroke:0.04px currentColor">Position 1</div>
<div class="t" style="top:358px;font-size:4.5px;color:#303030;letter-spacing:-0.14px;left:514.8px;-webkit-text-stroke:0.04px currentColor">Tide inputs: NONE</div>
<div class="t" style="top:363px;font-size:4.5px;color:#303030;letter-spacing:-0.14px;left:514.8px;-webkit-text-stroke:0.04px currentColor">Depth inputs: OK</div>
<div class="t" style="top:368px;font-size:4.5px;color:#303030;letter-spacing:-0.14px;left:545.7px;-webkit-text-stroke:0.04px currentColor">Depth</div>
<div class="t" style="top:373px;font-size:4.5px;color:#303030;letter-spacing:-0.14px;left:514.8px;-webkit-text-stroke:0.04px currentColor">Delayed Heave: NONE</div>
<div class="t" style="top:383px;font-size:4.5px;color:#303030;letter-spacing:-0.14px;left:514.8px;-webkit-text-stroke:0.04px currentColor">Input Data Usage &gt; &gt; &gt; &gt; &gt;</div>
<div class="t" style="top:388px;font-size:4.5px;color:#303030;letter-spacing:-0.14px;left:514.8px;-webkit-text-stroke:0.04px currentColor">Position:</div>
<div class="t" style="top:393px;font-size:4.5px;color:#303030;letter-spacing:-0.14px;left:545.7px;-webkit-text-stroke:0.04px currentColor">Ping 00001 to 04889: sbet</div>
<div class="t" style="top:398px;font-size:4.5px;color:#303030;letter-spacing:-0.14px;left:514.8px;-webkit-text-stroke:0.04px currentColor">Motion:</div>
<div class="t" style="top:403px;font-size:4.5px;color:#303030;letter-spacing:-0.14px;left:545.7px;-webkit-text-stroke:0.04px currentColor">Ping 00001 to 04889: Motion 1</div>
<div class="t" style="top:408px;font-size:4.5px;color:#303030;letter-spacing:-0.14px;left:514.8px;-webkit-text-stroke:0.04px currentColor">Heading:</div>
<div class="t" style="top:413px;font-size:4.5px;color:#303030;letter-spacing:-0.14px;left:545.7px;-webkit-text-stroke:0.04px currentColor">Ping 00001 to 04889: Motion 1</div>
<div class="t" style="top:418px;font-size:4.5px;color:#303030;letter-spacing:-0.14px;left:514.8px;-webkit-text-stroke:0.04px currentColor">Height:</div>
<div class="t" style="top:423px;font-size:4.5px;color:#303030;letter-spacing:-0.14px;left:545.7px;-webkit-text-stroke:0.04px currentColor">Ping 00001 to 04889: sbet</div>
<div class="t" style="top:428px;font-size:4.5px;color:#303030;letter-spacing:-0.14px;left:514.8px;-webkit-text-stroke:0.04px currentColor">SVP:</div>
<div class="t" style="top:433px;font-size:4.5px;color:#303030;letter-spacing:-0.14px;left:545.7px;-webkit-text-stroke:0.04px currentColor">Ping 00001 to 04889: SVP_00001.bsvp</div>
<div class="t" style="top:439px;font-size:4.5px;color:#333;left:514.8px;">**************************************************************</div>
<div style="left:624.3px;top:436.385px;width:0.5px;height:5.0px;background:#222;"></div>
<div style="left:508.4px;top:459.4px;width:30.4px;height:7.1px;background:linear-gradient(#f8f8f8,#e8e8e8);border:0.6px solid #b0bcc8;box-sizing:border-box;"></div>
<div class="t" style="top:462px;font-size:4.5px;color:#222;letter-spacing:-0.14px;left:523.5999999999999px;transform:translateX(-50%);">Run</div>
<div style="left:701.6px;top:459.7px;width:30.4px;height:6.8px;background:linear-gradient(#f8f8f8,#e8e8e8);border:0.6px solid #b0bcc8;box-sizing:border-box;"></div>
<div class="t" style="top:462px;font-size:4.5px;color:#222;letter-spacing:-0.14px;left:716.8px;transform:translateX(-50%);">Save</div>
<div style="left:701.6px;top:470px;width:30.4px;height:7.2px;background:linear-gradient(#f8f8f8,#e8e8e8);border:0.6px solid #b0bcc8;box-sizing:border-box;"></div>
<div class="t" style="top:473px;font-size:4.5px;color:#222;letter-spacing:-0.14px;left:716.8px;transform:translateX(-50%);">Close</div></body></html>
